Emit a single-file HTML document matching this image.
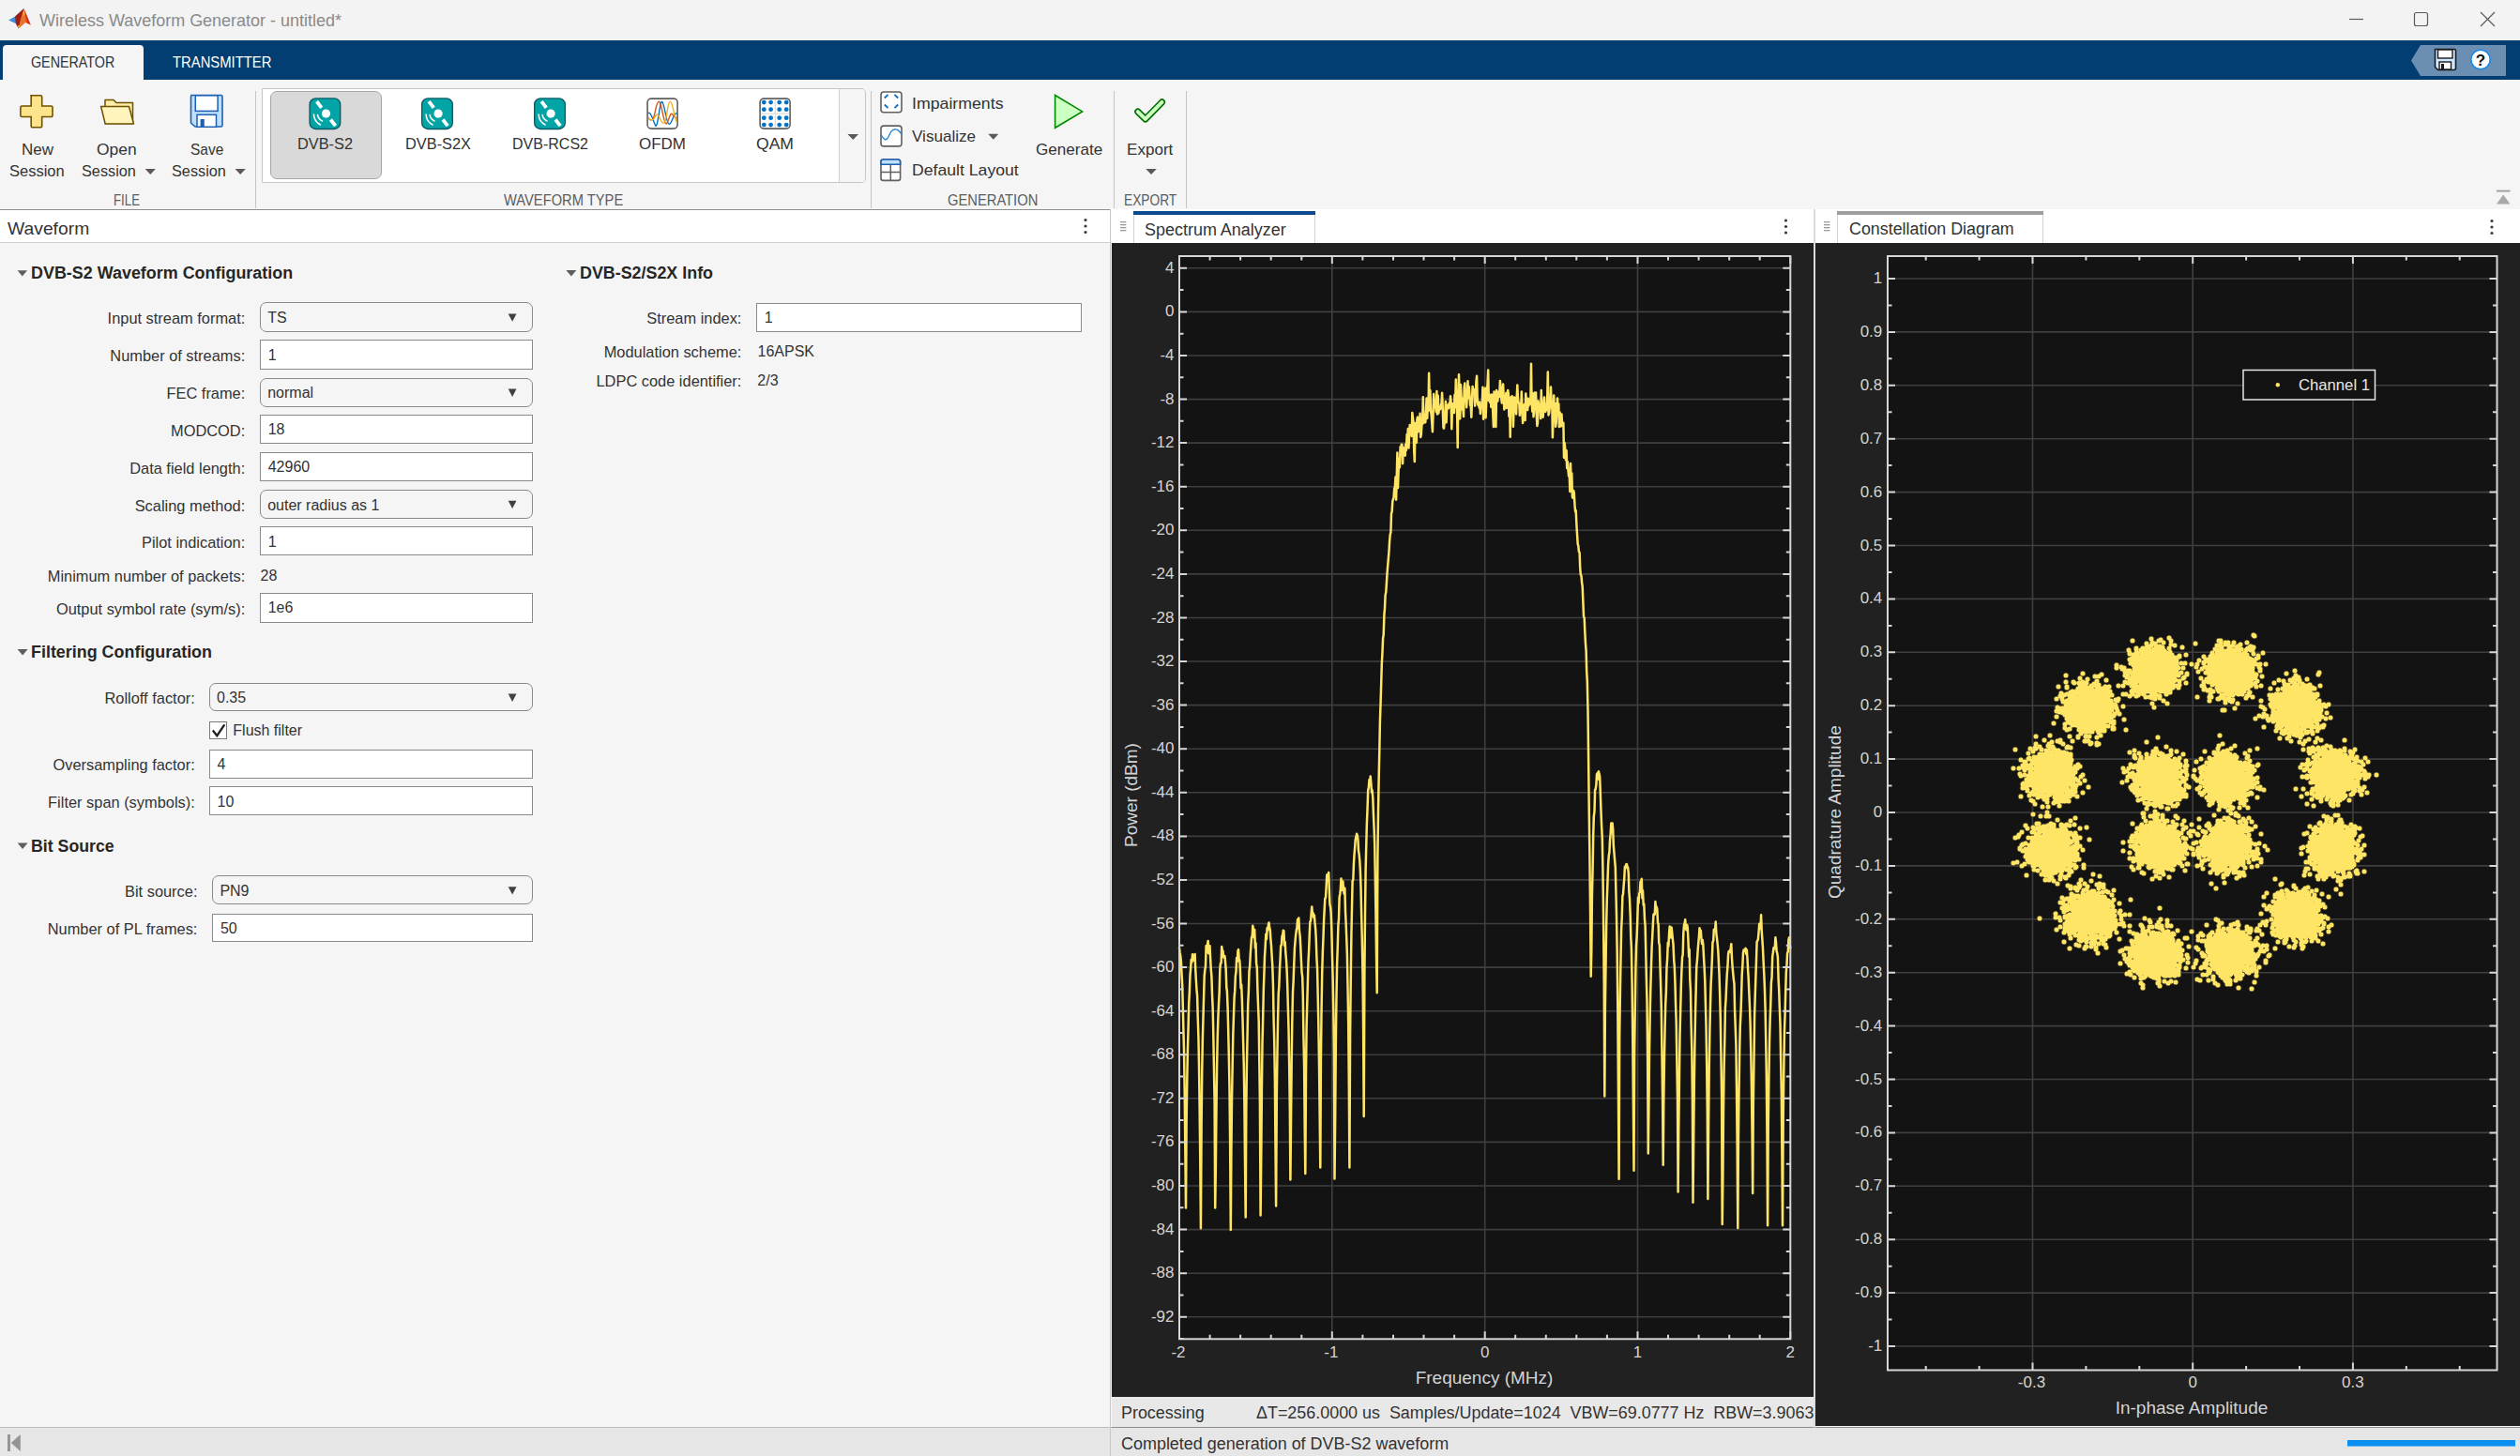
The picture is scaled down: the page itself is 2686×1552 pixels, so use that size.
<!DOCTYPE html><html><head><meta charset="utf-8"><style>
html,body{margin:0;padding:0}
body{width:2686px;height:1552px;overflow:hidden;position:relative;background:#f5f5f5;font-family:"Liberation Sans",sans-serif}
.t{position:absolute;white-space:pre;line-height:normal}
svg{position:absolute;left:0;top:0;overflow:visible}
</style></head><body>
<div style="position:absolute;left:0.0px;top:0.0px;width:2686.0px;height:43.0px;background:#f3f3f3"></div>
<svg font-family="Liberation Sans" width="40" height="40">
<path d="M9.1 21.4 L16.2 17.6 L23.6 10.8 L25.3 9.1 L20 20 L16.8 25 Z" fill="#3b8fdc"/>
<path d="M16.2 17.6 L23.6 10.8 L25.3 9.1 L24 20 L19.8 30.5 L16.8 25 Z" fill="#9e1f10"/>
<path d="M25.3 9.1 L32.7 26.6 L27.2 23.9 L19.8 30.5 L21.5 22 Z" fill="#e8742c"/>
<path d="M25.3 9.1 L28 15 L32.7 26.6 L28.5 24.5 Z" fill="#d8361b"/>
<path d="M25.3 10.5 L26.4 14 L25.6 17.5 L24.8 14 Z" fill="#f2d040"/>
<path d="M18.8 27.5 L21.5 27 L19.8 30.3 Z" fill="#f2c030"/>
</svg>
<div class="t" style="left:42.0px;top:10.6px;font-size:19px;color:#8a8a8a;font-weight:normal;transform:scaleX(0.9461);transform-origin:0 0;">Wireless Waveform Generator - untitled*</div>
<svg font-family="Liberation Sans" width="2686" height="43">
<line x1="2504" y1="20.5" x2="2519" y2="20.5" stroke="#5a5a5a" stroke-width="1.2"/>
<rect x="2573.5" y="13.5" width="14" height="14" rx="2" fill="none" stroke="#5a5a5a" stroke-width="1.2"/>
<path d="M2644 13 L2659 28 M2659 13 L2644 28" stroke="#5a5a5a" stroke-width="1.2"/>
</svg>
<div style="position:absolute;left:0.0px;top:43.0px;width:2686.0px;height:42.0px;background:#023e71"></div>
<div style="position:absolute;left:3.0px;top:48.0px;width:150.0px;height:37.0px;background:#f5f5f5;border-radius:4px 4px 0 0"></div>
<div class="t" style="left:32.8px;top:58.3px;font-size:16px;color:#333;font-weight:normal;transform:scaleX(0.8932);transform-origin:0 0;">GENERATOR</div>
<div class="t" style="left:184.0px;top:58.3px;font-size:16px;color:#fff;font-weight:normal;transform:scaleX(0.9264);transform-origin:0 0;">TRANSMITTER</div>
<svg font-family="Liberation Sans" width="2686" height="90">
<path d="M2570 64.5 L2580 48 L2671 48 L2671 81 L2580 81 Z" fill="#6b8fb2"/>
<path d="M2595.5 52.5 h20.5 a1.5 1.5 0 0 1 1.5 1.5 v19 a1.5 1.5 0 0 1 -1.5 1.5 h-17.5 l-3 -3 Z" fill="#cfe8ff" stroke="#1a1a1a" stroke-width="1.6"/>
<rect x="2598.5" y="53" width="15.5" height="9" fill="#fff" stroke="#1a1a1a" stroke-width="1.4"/>
<rect x="2600" y="66" width="12.5" height="8" fill="#fff" stroke="#1a1a1a" stroke-width="1.4"/>
<rect x="2602" y="68" width="3" height="6" fill="#1a1a1a"/>
<circle cx="2644" cy="63.5" r="10.2" fill="#fff" stroke="#1e88e5" stroke-width="1.6"/>
<text x="2644" y="70" text-anchor="middle" font-family="Liberation Sans" font-weight="bold" font-size="17" fill="#111">?</text>
</svg>
<div style="position:absolute;left:0.0px;top:85.0px;width:2686.0px;height:138.0px;background:#f5f5f5"></div>
<div style="position:absolute;left:0.0px;top:223.0px;width:2686.0px;height:1.2px;background:#8f8f8f"></div>
<div style="position:absolute;left:272.2px;top:97.0px;width:1.3px;height:125.0px;background:#c4c4c4"></div>
<div style="position:absolute;left:928.1px;top:97.0px;width:1.3px;height:125.0px;background:#c4c4c4"></div>
<div style="position:absolute;left:1187.0px;top:97.0px;width:1.3px;height:125.0px;background:#c4c4c4"></div>
<div style="position:absolute;left:1264.0px;top:97.0px;width:1.3px;height:125.0px;background:#c4c4c4"></div>
<div class="t" style="left:121.0px;top:204.9px;font-size:16px;color:#5c5c5c;font-weight:normal;transform:scaleX(0.8287);transform-origin:0 0;">FILE</div>
<div class="t" style="left:536.7px;top:204.9px;font-size:16px;color:#5c5c5c;font-weight:normal;transform:scaleX(0.9192);transform-origin:0 0;">WAVEFORM TYPE</div>
<div class="t" style="left:1009.7px;top:204.9px;font-size:16px;color:#5c5c5c;font-weight:normal;transform:scaleX(0.9206);transform-origin:0 0;">GENERATION</div>
<div class="t" style="left:1197.8px;top:204.9px;font-size:16px;color:#5c5c5c;font-weight:normal;transform:scaleX(0.8580);transform-origin:0 0;">EXPORT</div>
<div class="t" style="left:22.6px;top:149.6px;font-size:17px;color:#333333;font-weight:normal;transform:scaleX(0.9998);transform-origin:0 0;">New</div>
<div class="t" style="left:9.7px;top:173.2px;font-size:17px;color:#333333;font-weight:normal;transform:scaleX(0.9706);transform-origin:0 0;">Session</div>
<div class="t" style="left:103.2px;top:149.6px;font-size:17px;color:#333333;font-weight:normal;transform:scaleX(1.0268);transform-origin:0 0;">Open</div>
<div class="t" style="left:86.6px;top:173.2px;font-size:17px;color:#333333;font-weight:normal;transform:scaleX(0.9574);transform-origin:0 0;">Session</div>
<div class="t" style="left:202.9px;top:149.6px;font-size:17px;color:#333333;font-weight:normal;transform:scaleX(0.9110);transform-origin:0 0;">Save</div>
<div class="t" style="left:182.5px;top:173.2px;font-size:17px;color:#333333;font-weight:normal;transform:scaleX(0.9574);transform-origin:0 0;">Session</div>
<div style="position:absolute;left:278.6px;top:94.4px;width:644.4px;height:101.0px;background:#fff;border:1px solid #c6c6c6;border-radius:0 5px 5px 0;box-sizing:border-box"></div>
<div style="position:absolute;left:894.4px;top:95.4px;width:27.6px;height:99.0px;background:#f5f5f5;border-left:1px solid #d0d0d0;border-radius:0 4px 4px 0;box-sizing:border-box"></div>
<div style="position:absolute;left:287.5px;top:97.2px;width:119.0px;height:94.0px;background:#d9d9d9;border:1px solid #a8a8a8;border-radius:7px;box-sizing:border-box"></div>
<div class="t" style="left:317.0px;top:143.6px;font-size:17px;color:#333333;font-weight:normal;transform:scaleX(0.9608);transform-origin:0 0;">DVB-S2</div>
<div class="t" style="left:432.0px;top:143.6px;font-size:17px;color:#333333;font-weight:normal;transform:scaleX(0.9622);transform-origin:0 0;">DVB-S2X</div>
<div class="t" style="left:546.0px;top:143.6px;font-size:17px;color:#333333;font-weight:normal;transform:scaleX(0.9423);transform-origin:0 0;">DVB-RCS2</div>
<div class="t" style="left:681.0px;top:143.6px;font-size:17px;color:#333333;font-weight:normal;transform:scaleX(0.9991);transform-origin:0 0;">OFDM</div>
<div class="t" style="left:806.0px;top:143.6px;font-size:17px;color:#333333;font-weight:normal;transform:scaleX(1.0330);transform-origin:0 0;">QAM</div>
<div class="t" style="left:971.9px;top:100.7px;font-size:17px;color:#333333;font-weight:normal;transform:scaleX(1.0426);transform-origin:0 0;">Impairments</div>
<div class="t" style="left:972.2px;top:136.3px;font-size:17px;color:#333333;font-weight:normal;transform:scaleX(1.0056);transform-origin:0 0;">Visualize</div>
<div class="t" style="left:971.9px;top:172.2px;font-size:17px;color:#333333;font-weight:normal;transform:scaleX(1.0372);transform-origin:0 0;">Default Layout</div>
<div class="t" style="left:1103.7px;top:149.7px;font-size:17px;color:#333333;font-weight:normal;transform:scaleX(1.0046);transform-origin:0 0;">Generate</div>
<div class="t" style="left:1201.3px;top:149.7px;font-size:17px;color:#333333;font-weight:normal;transform:scaleX(1.0035);transform-origin:0 0;">Export</div>
<svg font-family="Liberation Sans" width="2686" height="223"><path d="M33.5 101.7 h11 a1.5 1.5 0 0 1 1.5 1.5 v9.8 h9.8 a1.5 1.5 0 0 1 1.5 1.5 v8.5 a1.5 1.5 0 0 1 -1.5 1.5 h-9.8 v9.8 a1.5 1.5 0 0 1 -1.5 1.5 h-8.5 a1.5 1.5 0 0 1 -1.5 -1.5 v-9.8 h-9.8 a1.5 1.5 0 0 1 -1.5 -1.5 v-8.5 a1.5 1.5 0 0 1 1.5 -1.5 h9.8 v-9.8 a1.5 1.5 0 0 1 1.5 -1.5 Z" fill="#fde48a" stroke="#6e5200" stroke-width="1.6" transform="translate(-1.3,0)"/><path d="M112 131.5 V106.5 h9 l3 3 h17.5 v22 Z" fill="#fdeeaa" stroke="#6e5200" stroke-width="1.5" stroke-linejoin="round"/><path d="M107.6 113.5 H137.5 L142.5 132 H112.2 Z" fill="#fff4bb" stroke="#6e5200" stroke-width="1.5" stroke-linejoin="round"/><path d="M204 101.5 H235.5 a1.5 1.5 0 0 1 1.5 1.5 V133.5 a1.5 1.5 0 0 1 -1.5 1.5 H208 L203.5 131 V103 Z" fill="#bfe0fb" stroke="#1c5fb5" stroke-width="1.6"/><rect x="208.3" y="101.8" width="23.8" height="16.6" fill="#fff" stroke="#1c5fb5" stroke-width="1.5"/><rect x="210" y="122.3" width="20.5" height="13" fill="#fff" stroke="#1c5fb5" stroke-width="1.5"/><rect x="213.6" y="127" width="4.2" height="8" fill="#1c5fb5"/><path d="M154.6 180 h11.3 l-5.65 6 Z" fill="#5a5a5a"/><path d="M250.5 180 h11.3 l-5.65 6 Z" fill="#5a5a5a"/><path d="M903.5 143 h11.5 l-5.75 6 Z" fill="#5a5a5a"/><path d="M1053.3 142.8 h11 l-5.5 6 Z" fill="#5a5a5a"/><path d="M1221.3 180 h11.5 l-5.75 6 Z" fill="#5a5a5a"/><g transform="translate(329.4,104.2)">
<rect x="0.7" y="0.7" width="32.6" height="32.6" rx="6.5" fill="#02a4a6" stroke="#0b5c66" stroke-width="1.4"/>
<g transform="rotate(-37.5 18.1 16.9)"><rect x="16.2" y="0.6" width="3.8" height="8.4" fill="#fff"/><rect x="16.2" y="25.0" width="3.8" height="8.4" fill="#fff"/></g>
<circle cx="18.1" cy="16.9" r="4.6" fill="#fff"/>
<path d="M5.1 17.8 A13 13 0 0 0 12.1 28.8" fill="none" stroke="#fff" stroke-width="1.5" stroke-linecap="round"/>
<path d="M9.1 18.3 A9 9 0 0 0 14.1 24.8" fill="none" stroke="#fff" stroke-width="1.5" stroke-linecap="round"/>
</g><g transform="translate(449,104.2)">
<rect x="0.7" y="0.7" width="32.6" height="32.6" rx="6.5" fill="#02a4a6" stroke="#0b5c66" stroke-width="1.4"/>
<g transform="rotate(-37.5 18.1 16.9)"><rect x="16.2" y="0.6" width="3.8" height="8.4" fill="#fff"/><rect x="16.2" y="25.0" width="3.8" height="8.4" fill="#fff"/></g>
<circle cx="18.1" cy="16.9" r="4.6" fill="#fff"/>
<path d="M5.1 17.8 A13 13 0 0 0 12.1 28.8" fill="none" stroke="#fff" stroke-width="1.5" stroke-linecap="round"/>
<path d="M9.1 18.3 A9 9 0 0 0 14.1 24.8" fill="none" stroke="#fff" stroke-width="1.5" stroke-linecap="round"/>
</g><g transform="translate(569,104.2)">
<rect x="0.7" y="0.7" width="32.6" height="32.6" rx="6.5" fill="#02a4a6" stroke="#0b5c66" stroke-width="1.4"/>
<g transform="rotate(-37.5 18.1 16.9)"><rect x="16.2" y="0.6" width="3.8" height="8.4" fill="#fff"/><rect x="16.2" y="25.0" width="3.8" height="8.4" fill="#fff"/></g>
<circle cx="18.1" cy="16.9" r="4.6" fill="#fff"/>
<path d="M5.1 17.8 A13 13 0 0 0 12.1 28.8" fill="none" stroke="#fff" stroke-width="1.5" stroke-linecap="round"/>
<path d="M9.1 18.3 A9 9 0 0 0 14.1 24.8" fill="none" stroke="#fff" stroke-width="1.5" stroke-linecap="round"/>
</g><g transform="translate(689.3,104.3)">
<rect x="0.8" y="0.8" width="32" height="32" rx="4" fill="#fff" stroke="#5f5f5f" stroke-width="1.6"/>
<clipPath id="ofc"><rect x="1.5" y="1.5" width="30.6" height="30.6"/></clipPath>
<g clip-path="url(#ofc)" fill="none" stroke-width="1.4">
<path d="M1 17 C4 13,6 22,9 29 C12 36,14 -2,17 5 C20 12,21 28,24 28 C27 28,28 16,33 16" stroke="#0072bd"/>
<path d="M1 20 C3 24,5 25,7 22 C9 18,10 4,13 4 C16 4,17 22,20 27 C22 31,24 18,26 17 C28 16,29 22,33 22" stroke="#d95319"/>
<path d="M1 21 C3 23,5 25,8 22 C10 18,11 16,13 20 C16 26,17 28,19 26 C22 22,22 4,25 4 C28 4,29 22,33 28" stroke="#edb120"/>
</g></g><g transform="translate(809.3,104.3)"><rect x="0.8" y="0.8" width="32" height="32" rx="4" fill="#fff" stroke="#5f5f5f" stroke-width="1.6"/><path d="M17 1.5 V32 M1.5 16.8 H32" stroke="#dcdcdc" stroke-width="1.2"/><circle cx="5" cy="4.8" r="2.4" fill="#0072c6"/><circle cx="5" cy="12.4" r="2.4" fill="#0072c6"/><circle cx="5" cy="21.4" r="2.4" fill="#0072c6"/><circle cx="5" cy="28.8" r="2.4" fill="#0072c6"/><circle cx="12.3" cy="4.8" r="2.4" fill="#0072c6"/><circle cx="12.3" cy="12.4" r="2.4" fill="#0072c6"/><circle cx="12.3" cy="21.4" r="2.4" fill="#0072c6"/><circle cx="12.3" cy="28.8" r="2.4" fill="#0072c6"/><circle cx="21.4" cy="4.8" r="2.4" fill="#0072c6"/><circle cx="21.4" cy="12.4" r="2.4" fill="#0072c6"/><circle cx="21.4" cy="21.4" r="2.4" fill="#0072c6"/><circle cx="21.4" cy="28.8" r="2.4" fill="#0072c6"/><circle cx="28.9" cy="4.8" r="2.4" fill="#0072c6"/><circle cx="28.9" cy="12.4" r="2.4" fill="#0072c6"/><circle cx="28.9" cy="21.4" r="2.4" fill="#0072c6"/><circle cx="28.9" cy="28.8" r="2.4" fill="#0072c6"/></g><g transform="translate(938.2,97.2)">
<rect x="0.8" y="0.8" width="22" height="21.8" rx="3" fill="#fff" stroke="#606060" stroke-width="1.6"/>
<path d="M4.6 7.3 L8.3 3.6 M15.3 3.6 L19 7.3 M4.6 14.3 L8.3 18 M15.3 18 L19 14.3" stroke="#0a6fc2" stroke-width="1.8" stroke-linecap="butt"/>
</g>
<g transform="translate(938.2,133.3)">
<rect x="0.8" y="0.8" width="22" height="21.8" rx="3" fill="#fff" stroke="#606060" stroke-width="1.6"/>
<path d="M1 10.5 C4 16,6 17,8.5 13 C11 8,12 4.5,16 4.5 C19 4.5,21 7,22.5 9.5" fill="none" stroke="#1a7fd4" stroke-width="1.3"/>
</g>
<g transform="translate(938.2,169.2)">
<rect x="0.8" y="0.8" width="20.6" height="22.4" rx="2.5" fill="#fff" stroke="#606060" stroke-width="1.6"/>
<path d="M0.8 6 V3.3 a2.5 2.5 0 0 1 2.5 -2.5 H18.9 a2.5 2.5 0 0 1 2.5 2.5 V6 Z" fill="#bfe0fb" stroke="#1c5fb5" stroke-width="1.6"/>
<path d="M11.1 6 V23 M0.8 14.2 H21.4" stroke="#606060" stroke-width="1.5"/>
</g>
<path d="M1124.6 101.5 L1153.6 118.9 L1124.6 136.3 Z" fill="#ccffc2" stroke="#008a00" stroke-width="1.6" stroke-linejoin="miter"/><path d="M1212.8 119.1 L1220.8 126.9 L1238.5 108.9" fill="none" stroke="#006e00" stroke-width="7.2" stroke-linecap="round" stroke-linejoin="round"/><path d="M1212.8 119.1 L1220.8 126.9 L1238.5 108.9" fill="none" stroke="#ccffc2" stroke-width="4" stroke-linecap="round" stroke-linejoin="round"/><rect x="2661" y="202.7" width="14.5" height="1.8" fill="#9a9a9a"/><path d="M2661 217.6 L2668.2 207.5 L2675.5 217.6 Z" fill="#a8a8a8"/></svg>
<div style="position:absolute;left:0.0px;top:224.2px;width:1183.0px;height:34.0px;background:#fff"></div>
<div style="position:absolute;left:0.0px;top:258.0px;width:1183.0px;height:1.0px;background:#cfcfcf"></div>
<div class="t" style="left:7.6px;top:233.0px;font-size:19px;color:#333;font-weight:normal;transform:scaleX(1.0156);transform-origin:0 0;">Waveform</div>
<svg font-family="Liberation Sans" width="2686" height="300"><circle cx="1157" cy="234.5" r="1.6" fill="#3a3a3a"/><circle cx="1157" cy="241.0" r="1.6" fill="#3a3a3a"/><circle cx="1157" cy="247.5" r="1.6" fill="#3a3a3a"/></svg>
<div style="position:absolute;left:1182.6px;top:223.3px;width:1.3px;height:1298.0px;background:#c8c8c8"></div>
<svg font-family="Liberation Sans" width="1200" height="1100"><path d="M18.6 288.3 H29 L23.8 294.5 Z" fill="#5e5e5e"/><path d="M18.6 692 H29.6 L24.1 698.5 Z" fill="#5e5e5e"/><path d="M18.6 898.5 H29.6 L24.1 905 Z" fill="#5e5e5e"/><path d="M603.4 288 H614.4 L608.9 294.5 Z" fill="#5e5e5e"/></svg>
<div class="t" style="left:33.3px;top:280.7px;font-size:18px;color:#262626;font-weight:bold;transform:scaleX(0.9956);transform-origin:0 0;">DVB-S2 Waveform Configuration</div>
<div class="t" style="left:33.0px;top:685.0px;font-size:18px;color:#262626;font-weight:bold;transform:scaleX(0.9950);transform-origin:0 0;">Filtering Configuration</div>
<div class="t" style="left:33.0px;top:891.9px;font-size:18px;color:#262626;font-weight:bold;transform:scaleX(0.9854);transform-origin:0 0;">Bit Source</div>
<div class="t" style="left:618.0px;top:281.2px;font-size:18px;color:#262626;font-weight:bold;transform:scaleX(0.9929);transform-origin:0 0;">DVB-S2/S2X Info</div>
<div class="t" style="left:114.6px;top:330.2px;font-size:16.4px;color:#333;font-weight:normal;">Input stream format:</div>
<div style="position:absolute;left:277.2px;top:322.4px;width:290.6px;height:31.2px;background:#f5f5f5;border:1px solid #8a8a8a;border-radius:7px;box-sizing:border-box"></div>
<svg font-family="Liberation Sans" width="2686" height="1100"><path d="M541.6999999999999 334.4 h8.8 l-4.4 8.4 Z" fill="#404040"/></svg><div class="t" style="left:285.2px;top:330.2px;font-size:16px;color:#333;font-weight:normal;">TS</div>
<div class="t" style="left:117.3px;top:370.1px;font-size:16.4px;color:#333;font-weight:normal;">Number of streams:</div>
<div style="position:absolute;left:277.2px;top:362.3px;width:290.6px;height:31.3px;background:#fff;border:1px solid #8a8a8a;box-sizing:border-box"></div>
<div class="t" style="left:285.7px;top:369.8px;font-size:16px;color:#333;font-weight:normal;">1</div>
<div class="t" style="left:177.5px;top:410.4px;font-size:16.4px;color:#333;font-weight:normal;">FEC frame:</div>
<div style="position:absolute;left:277.2px;top:402.6px;width:290.6px;height:31.0px;background:#f5f5f5;border:1px solid #8a8a8a;border-radius:7px;box-sizing:border-box"></div>
<svg font-family="Liberation Sans" width="2686" height="1100"><path d="M541.6999999999999 414.6 h8.8 l-4.4 8.4 Z" fill="#404040"/></svg><div class="t" style="left:285.2px;top:410.4px;font-size:16px;color:#333;font-weight:normal;">normal</div>
<div class="t" style="left:182.0px;top:449.5px;font-size:16.4px;color:#333;font-weight:normal;">MODCOD:</div>
<div style="position:absolute;left:277.2px;top:441.7px;width:290.6px;height:31.6px;background:#fff;border:1px solid #8a8a8a;box-sizing:border-box"></div>
<div class="t" style="left:285.7px;top:449.2px;font-size:16px;color:#333;font-weight:normal;">18</div>
<div class="t" style="left:138.2px;top:489.5px;font-size:16.4px;color:#333;font-weight:normal;">Data field length:</div>
<div style="position:absolute;left:277.2px;top:481.7px;width:290.6px;height:30.9px;background:#fff;border:1px solid #8a8a8a;box-sizing:border-box"></div>
<div class="t" style="left:285.7px;top:489.2px;font-size:16px;color:#333;font-weight:normal;">42960</div>
<div class="t" style="left:143.7px;top:529.5px;font-size:16.4px;color:#333;font-weight:normal;">Scaling method:</div>
<div style="position:absolute;left:277.2px;top:521.7px;width:290.6px;height:30.9px;background:#f5f5f5;border:1px solid #8a8a8a;border-radius:7px;box-sizing:border-box"></div>
<svg font-family="Liberation Sans" width="2686" height="1100"><path d="M541.6999999999999 533.7 h8.8 l-4.4 8.4 Z" fill="#404040"/></svg><div class="t" style="left:285.2px;top:529.5px;font-size:16px;color:#333;font-weight:normal;">outer radius as 1</div>
<div class="t" style="left:151.0px;top:569.2px;font-size:16.4px;color:#333;font-weight:normal;">Pilot indication:</div>
<div style="position:absolute;left:277.2px;top:561.4px;width:290.6px;height:30.9px;background:#fff;border:1px solid #8a8a8a;box-sizing:border-box"></div>
<div class="t" style="left:285.7px;top:568.9px;font-size:16px;color:#333;font-weight:normal;">1</div>
<div class="t" style="left:59.9px;top:639.5px;font-size:16.4px;color:#333;font-weight:normal;">Output symbol rate (sym/s):</div>
<div style="position:absolute;left:277.2px;top:631.7px;width:290.6px;height:32.0px;background:#fff;border:1px solid #8a8a8a;box-sizing:border-box"></div>
<div class="t" style="left:285.7px;top:639.2px;font-size:16px;color:#333;font-weight:normal;">1e6</div>
<div class="t" style="left:50.8px;top:604.5px;font-size:16.4px;color:#333;font-weight:normal;">Minimum number of packets:</div>
<div class="t" style="left:277.6px;top:604.8px;font-size:16px;color:#333;font-weight:normal;">28</div>
<div class="t" style="left:111.5px;top:735.4px;font-size:16.4px;color:#333;font-weight:normal;">Rolloff factor:</div>
<div style="position:absolute;left:223.0px;top:727.6px;width:344.8px;height:30.6px;background:#f5f5f5;border:1px solid #8a8a8a;border-radius:7px;box-sizing:border-box"></div>
<svg font-family="Liberation Sans" width="2686" height="1100"><path d="M541.6999999999999 739.6 h8.8 l-4.4 8.4 Z" fill="#404040"/></svg><div class="t" style="left:231.0px;top:735.4px;font-size:16px;color:#333;font-weight:normal;">0.35</div>
<div style="position:absolute;left:223.0px;top:769.0px;width:19.3px;height:19.3px;background:#fff;border:1px solid #7a7a7a;box-sizing:border-box"></div>
<svg font-family="Liberation Sans" width="300" height="800"><path d="M226.8 778.5 L231.3 784.2 L239.3 772.3" fill="none" stroke="#1f1f1f" stroke-width="2.3"/></svg>
<div class="t" style="left:248.3px;top:770.1px;font-size:16px;color:#333;font-weight:normal;">Flush filter</div>
<div class="t" style="left:56.5px;top:806.4px;font-size:16.4px;color:#333;font-weight:normal;">Oversampling factor:</div>
<div style="position:absolute;left:223.0px;top:798.6px;width:344.8px;height:31.0px;background:#fff;border:1px solid #8a8a8a;box-sizing:border-box"></div>
<div class="t" style="left:231.5px;top:806.1px;font-size:16px;color:#333;font-weight:normal;">4</div>
<div class="t" style="left:51.1px;top:846.1px;font-size:16.4px;color:#333;font-weight:normal;">Filter span (symbols):</div>
<div style="position:absolute;left:223.0px;top:838.3px;width:344.8px;height:31.0px;background:#fff;border:1px solid #8a8a8a;box-sizing:border-box"></div>
<div class="t" style="left:231.5px;top:845.8px;font-size:16px;color:#333;font-weight:normal;">10</div>
<div class="t" style="left:133.0px;top:941.0px;font-size:16.4px;color:#333;font-weight:normal;">Bit source:</div>
<div style="position:absolute;left:226.4px;top:933.2px;width:341.4px;height:31.0px;background:#f5f5f5;border:1px solid #8a8a8a;border-radius:7px;box-sizing:border-box"></div>
<svg font-family="Liberation Sans" width="2686" height="1100"><path d="M541.6999999999999 945.2 h8.8 l-4.4 8.4 Z" fill="#404040"/></svg><div class="t" style="left:234.4px;top:941.0px;font-size:16px;color:#333;font-weight:normal;">PN9</div>
<div class="t" style="left:50.7px;top:981.4px;font-size:16.4px;color:#333;font-weight:normal;">Number of PL frames:</div>
<div style="position:absolute;left:226.4px;top:973.6px;width:341.4px;height:30.9px;background:#fff;border:1px solid #8a8a8a;box-sizing:border-box"></div>
<div class="t" style="left:234.9px;top:981.1px;font-size:16px;color:#333;font-weight:normal;">50</div>
<div class="t" style="left:689.3px;top:330.3px;font-size:16.4px;color:#333;font-weight:normal;">Stream index:</div>
<div style="position:absolute;left:806.3px;top:322.5px;width:346.4px;height:31.0px;background:#fff;border:1px solid #8a8a8a;box-sizing:border-box"></div>
<div class="t" style="left:814.8px;top:330.0px;font-size:16px;color:#333;font-weight:normal;">1</div>
<div class="t" style="left:643.7px;top:365.5px;font-size:16.4px;color:#333;font-weight:normal;">Modulation scheme:</div>
<div class="t" style="left:807.5px;top:365.8px;font-size:16px;color:#333;font-weight:normal;">16APSK</div>
<div class="t" style="left:635.5px;top:396.7px;font-size:16.4px;color:#333;font-weight:normal;">LDPC code identifier:</div>
<div class="t" style="left:807.3px;top:397.0px;font-size:16px;color:#333;font-weight:normal;">2/3</div>
<div style="position:absolute;left:0.0px;top:1521.0px;width:2686.0px;height:31.0px;background:#e6e6e6"></div>
<div style="position:absolute;left:0.0px;top:1520.5px;width:2686.0px;height:1.2px;background:#bdbdbd"></div>
<svg font-family="Liberation Sans" width="2686" height="1552"><rect x="8" y="1529" width="3" height="18" fill="#959595"/><path d="M21.8 1529 V1547 L11.8 1538 Z" fill="#959595"/><rect x="2502" y="1535" width="179" height="6.6" fill="#0a8ef0"/></svg>
<div style="position:absolute;left:1182.6px;top:1521.0px;width:1.2px;height:31.0px;background:#c8c8c8"></div>
<div class="t" style="left:1195.4px;top:1529.4px;font-size:18px;color:#333;font-weight:normal;transform:scaleX(0.9973);transform-origin:0 0;">Completed generation of DVB-S2 waveform</div>
<div style="position:absolute;left:1184.0px;top:223.3px;width:749.0px;height:35.3px;background:#fff"></div>
<div style="position:absolute;left:1207.5px;top:224.8px;width:194.0px;height:33.8px;background:#fff;border-left:1px solid #d2d2d2;border-right:1px solid #d2d2d2;box-sizing:border-box"></div>
<div style="position:absolute;left:1207.5px;top:224.8px;width:194.0px;height:4.3px;background:#0b4a8e"></div>
<div class="t" style="left:1220.3px;top:234.9px;font-size:18px;color:#333;font-weight:normal;transform:scaleX(0.9976);transform-origin:0 0;">Spectrum Analyzer</div>
<svg font-family="Liberation Sans" width="2686" height="300"><rect x="1194" y="236" width="6.4" height="1.3" fill="#9a9a9a"/><rect x="1194" y="239" width="6.4" height="1.3" fill="#9a9a9a"/><rect x="1194" y="242" width="6.4" height="1.3" fill="#9a9a9a"/><rect x="1194" y="245" width="6.4" height="1.3" fill="#9a9a9a"/><rect x="1946.5" y="236" width="6.4" height="1.3" fill="#9a9a9a"/><rect x="1946.5" y="239" width="6.4" height="1.3" fill="#9a9a9a"/><rect x="1946.5" y="242" width="6.4" height="1.3" fill="#9a9a9a"/><rect x="1946.5" y="245" width="6.4" height="1.3" fill="#9a9a9a"/></svg>
<div style="position:absolute;left:1184.5px;top:258.5px;width:748.5px;height:1230.5px;background:#212121"></div>
<div style="position:absolute;left:1184.5px;top:1489.0px;width:748.5px;height:32.0px;background:#e8e8e8;box-sizing:border-box"></div>
<div style="position:absolute;left:1184.5px;top:1520.5px;width:748.5px;height:1.3px;background:#8e8e8e"></div>
<div class="t" style="left:1195.4px;top:1496.2px;font-size:18px;color:#333;font-weight:normal;transform:scaleX(0.9951);transform-origin:0 0;">Processing</div>
<div class="t" style="left:1338.7px;top:1496.2px;font-size:18px;color:#333;font-weight:normal;transform:scaleX(0.9949);transform-origin:0 0;">ΔT=256.0000 us  Samples/Update=1024  VBW=69.0777 Hz  RBW=3.9063</div>
<div style="position:absolute;left:1933.0px;top:223.3px;width:2.2px;height:1298.0px;background:#dcdcdc"></div>
<svg font-family="Liberation Sans" width="2686" height="1552"><rect x="1257.0" y="273.0" width="651.3" height="1154.3" fill="#131313"/><path d="M1419.8 273.0 V1427.3 M1582.7 273.0 V1427.3 M1745.5 273.0 V1427.3 M1257.0 285.8 H1908.3 M1257.0 332.4 H1908.3 M1257.0 379.0 H1908.3 M1257.0 425.6 H1908.3 M1257.0 472.1 H1908.3 M1257.0 518.7 H1908.3 M1257.0 565.3 H1908.3 M1257.0 611.9 H1908.3 M1257.0 658.5 H1908.3 M1257.0 705.0 H1908.3 M1257.0 751.6 H1908.3 M1257.0 798.2 H1908.3 M1257.0 844.8 H1908.3 M1257.0 891.4 H1908.3 M1257.0 937.9 H1908.3 M1257.0 984.5 H1908.3 M1257.0 1031.1 H1908.3 M1257.0 1077.7 H1908.3 M1257.0 1124.3 H1908.3 M1257.0 1170.8 H1908.3 M1257.0 1217.4 H1908.3 M1257.0 1264.0 H1908.3 M1257.0 1310.6 H1908.3 M1257.0 1357.2 H1908.3 M1257.0 1403.7 H1908.3" stroke="#3f3f3f" stroke-width="1.6" fill="none"/><path d="M1257.0 1009.8 1257.6 1015.5 1258.3 1019.1 1258.9 1024.8 1259.5 1038.1 1260.2 1049.8 1260.8 1072.9 1261.5 1101.6 1262.1 1124.0 1262.7 1165.6 1263.4 1230.0 1264.0 1287.5 1264.6 1197.7 1265.3 1150.1 1265.9 1120.1 1266.5 1098.6 1267.2 1069.7 1267.8 1058.6 1268.5 1039.4 1269.1 1032.8 1269.7 1022.9 1270.4 1025.5 1271.0 1017.3 1271.6 1023.4 1272.3 1023.3 1272.9 1023.9 1273.6 1016.9 1274.2 1032.7 1274.8 1043.5 1275.5 1055.3 1276.1 1061.3 1276.7 1084.0 1277.4 1104.8 1278.0 1135.5 1278.6 1179.6 1279.3 1237.0 1279.9 1309.3 1280.6 1200.2 1281.2 1144.7 1281.8 1109.6 1282.5 1083.6 1283.1 1062.6 1283.7 1040.0 1284.4 1033.5 1285.0 1029.7 1285.6 1008.3 1286.3 1014.6 1286.9 1007.8 1287.6 1002.9 1288.2 1016.3 1288.8 1013.0 1289.5 1008.2 1290.1 1021.1 1290.7 1032.6 1291.4 1040.7 1292.0 1059.9 1292.7 1075.4 1293.3 1102.9 1293.9 1136.7 1294.6 1175.5 1295.2 1287.5 1295.8 1247.2 1296.5 1182.7 1297.1 1136.5 1297.7 1106.9 1298.4 1084.5 1299.0 1071.1 1299.7 1057.4 1300.3 1033.7 1300.9 1026.9 1301.6 1026.8 1302.2 1009.0 1302.8 1013.2 1303.5 1013.6 1304.1 1020.5 1304.7 1020.0 1305.4 1019.1 1306.0 1024.9 1306.7 1033.6 1307.3 1052.7 1307.9 1056.7 1308.6 1074.1 1309.2 1098.5 1309.8 1124.1 1310.5 1161.1 1311.1 1214.8 1311.8 1311.0 1312.4 1228.1 1313.0 1173.3 1313.7 1134.5 1314.3 1103.8 1314.9 1085.3 1315.6 1063.3 1316.2 1056.4 1316.8 1040.8 1317.5 1035.6 1318.1 1020.9 1318.8 1025.0 1319.4 1013.6 1320.0 1012.1 1320.7 1022.5 1321.3 1023.7 1321.9 1034.9 1322.6 1053.3 1323.2 1049.5 1323.8 1064.6 1324.5 1086.3 1325.1 1109.9 1325.8 1136.7 1326.4 1177.0 1327.0 1238.1 1327.7 1297.6 1328.3 1186.1 1328.9 1137.0 1329.6 1102.2 1330.2 1070.6 1330.9 1056.4 1331.5 1034.7 1332.1 1030.6 1332.8 1016.6 1333.4 1008.3 1334.0 999.3 1334.7 997.7 1335.3 986.7 1335.9 990.7 1336.6 999.4 1337.2 990.9 1337.9 1010.4 1338.5 1005.3 1339.1 1026.9 1339.8 1031.5 1340.4 1054.8 1341.0 1071.1 1341.7 1088.4 1342.3 1132.1 1342.9 1176.3 1343.6 1295.4 1344.2 1239.1 1344.9 1162.9 1345.5 1112.7 1346.1 1088.6 1346.8 1055.7 1347.4 1038.6 1348.0 1019.6 1348.7 1008.3 1349.3 995.8 1350.0 1000.9 1350.6 989.2 1351.2 991.7 1351.9 986.1 1352.5 983.5 1353.1 988.0 1353.8 991.5 1354.4 1001.0 1355.0 1008.2 1355.7 1020.3 1356.3 1029.9 1357.0 1051.5 1357.6 1087.2 1358.2 1108.1 1358.9 1151.9 1359.5 1223.4 1360.1 1285.6 1360.8 1171.1 1361.4 1125.8 1362.0 1090.3 1362.7 1059.6 1363.3 1052.1 1364.0 1033.1 1364.6 1021.5 1365.2 1008.3 1365.9 1007.3 1366.5 997.8 1367.1 997.0 1367.8 991.7 1368.4 992.4 1369.1 1007.7 1369.7 1004.1 1370.3 1015.2 1371.0 1023.4 1371.6 1034.0 1372.2 1049.5 1372.9 1075.0 1373.5 1096.4 1374.1 1131.3 1374.8 1180.1 1375.4 1257.6 1376.1 1188.0 1376.7 1131.7 1377.3 1089.6 1378.0 1057.3 1378.6 1046.8 1379.2 1029.8 1379.9 1011.0 1380.5 1003.8 1381.1 996.9 1381.8 991.5 1382.4 988.2 1383.1 980.0 1383.7 989.6 1384.3 978.5 1385.0 992.8 1385.6 997.2 1386.2 1007.6 1386.9 1023.5 1387.5 1035.8 1388.2 1041.2 1388.8 1061.5 1389.4 1103.0 1390.1 1137.3 1390.7 1202.4 1391.3 1251.0 1392.0 1144.9 1392.6 1094.7 1393.2 1072.1 1393.9 1046.3 1394.5 1025.5 1395.2 1011.5 1395.8 995.0 1396.4 982.4 1397.1 981.7 1397.7 972.8 1398.3 966.4 1399.0 975.5 1399.6 973.3 1400.2 977.9 1400.9 975.5 1401.5 983.4 1402.2 990.3 1402.8 1001.8 1403.4 1021.0 1404.1 1033.8 1404.7 1061.6 1405.3 1090.3 1406.0 1134.7 1406.6 1183.8 1407.3 1244.5 1407.9 1132.1 1408.5 1080.6 1409.2 1038.0 1409.8 1016.1 1410.4 1001.2 1411.1 981.1 1411.7 969.1 1412.3 957.5 1413.0 957.0 1413.6 946.2 1414.3 932.6 1414.9 938.7 1415.5 933.3 1416.2 929.9 1416.8 947.8 1417.4 963.7 1418.1 967.0 1418.7 973.4 1419.3 990.1 1420.0 1020.0 1420.6 1041.0 1421.3 1074.8 1421.9 1123.5 1422.5 1256.5 1423.2 1189.1 1423.8 1114.7 1424.4 1067.2 1425.1 1028.4 1425.7 1011.1 1426.4 986.2 1427.0 979.7 1427.6 956.6 1428.3 953.0 1428.9 947.1 1429.5 936.4 1430.2 948.7 1430.8 947.1 1431.4 939.5 1432.1 949.1 1432.7 952.9 1433.4 946.7 1434.0 971.1 1434.6 983.3 1435.3 1001.4 1435.9 1018.2 1436.5 1051.2 1437.2 1091.5 1437.8 1155.5 1438.4 1244.5 1439.1 1103.5 1439.7 1047.9 1440.4 997.0 1441.0 968.3 1441.6 939.0 1442.3 938.0 1442.9 921.6 1443.5 911.1 1444.2 902.3 1444.8 894.5 1445.5 891.9 1446.1 888.8 1446.7 890.2 1447.4 894.7 1448.0 907.1 1448.6 910.3 1449.3 917.7 1449.9 928.7 1450.5 945.6 1451.2 978.4 1451.8 1001.9 1452.5 1039.1 1453.1 1095.9 1453.7 1190.0 1454.4 1037.0 1455.0 975.5 1455.6 927.8 1456.3 899.2 1456.9 877.4 1457.5 862.6 1458.2 842.1 1458.8 839.8 1459.5 830.9 1460.1 836.0 1460.7 827.4 1461.4 835.5 1462.0 844.3 1462.6 842.3 1463.3 850.5 1463.9 867.1 1464.6 882.8 1465.2 899.5 1465.8 934.5 1466.5 979.8 1467.1 1024.3 1467.7 1058.3 1468.4 913.6 1469.0 865.5 1469.6 832.3 1470.3 800.5 1470.9 769.5 1471.6 748.1 1472.2 728.6 1472.8 708.1 1473.5 694.5 1474.1 680.1 1474.7 677.1 1475.4 655.0 1476.0 648.7 1476.6 634.4 1477.3 631.1 1477.9 621.4 1478.6 610.3 1479.2 602.8 1479.8 595.9 1480.5 587.7 1481.1 576.8 1481.7 570.0 1482.4 567.3 1483.0 547.2 1483.6 545.6 1484.3 534.3 1484.9 532.5 1485.6 529.2 1486.2 520.5 1486.8 519.4 1487.5 508.6 1488.1 532.6 1488.7 509.7 1489.4 482.4 1490.0 520.0 1490.7 500.1 1491.3 488.8 1491.9 498.3 1492.6 476.3 1493.2 484.4 1493.8 473.8 1494.5 474.0 1495.1 494.1 1495.7 477.1 1496.4 481.6 1497.0 483.3 1497.7 485.6 1498.3 473.4 1498.9 479.9 1499.6 463.0 1500.2 466.3 1500.8 457.0 1501.5 477.4 1502.1 462.9 1502.7 453.1 1503.4 455.7 1504.0 456.2 1504.7 465.0 1505.3 439.9 1505.9 444.9 1506.6 450.9 1507.2 480.5 1507.8 491.9 1508.5 450.9 1509.1 458.6 1509.8 471.8 1510.4 446.9 1511.0 444.6 1511.7 460.2 1512.3 452.0 1512.9 453.5 1513.6 440.8 1514.2 466.0 1514.8 463.4 1515.5 451.1 1516.1 452.0 1516.8 423.2 1517.4 450.8 1518.0 441.7 1518.7 448.0 1519.3 450.2 1519.9 439.1 1520.6 424.6 1521.2 445.9 1521.8 433.9 1522.5 437.9 1523.1 397.7 1523.8 437.1 1524.4 416.1 1525.0 437.2 1525.7 442.5 1526.3 451.3 1526.9 460.2 1527.6 439.5 1528.2 420.1 1528.9 429.5 1529.5 426.0 1530.1 433.2 1530.8 439.1 1531.4 417.1 1532.0 441.5 1532.7 421.8 1533.3 440.6 1533.9 436.2 1534.6 433.8 1535.2 436.2 1535.9 431.1 1536.5 430.1 1537.1 418.7 1537.8 435.9 1538.4 455.4 1539.0 456.6 1539.7 449.5 1540.3 442.8 1540.9 428.1 1541.6 450.2 1542.2 434.2 1542.9 433.9 1543.5 431.4 1544.1 435.2 1544.8 429.5 1545.4 433.0 1546.0 422.3 1546.7 429.6 1547.3 457.3 1548.0 432.4 1548.6 430.4 1549.2 438.3 1549.9 440.0 1550.5 420.7 1551.1 430.0 1551.8 404.5 1552.4 434.6 1553.0 432.9 1553.7 477.0 1554.3 424.1 1555.0 399.2 1555.6 425.4 1556.2 446.3 1556.9 409.9 1557.5 423.2 1558.1 424.5 1558.8 436.8 1559.4 436.0 1560.0 444.1 1560.7 412.8 1561.3 408.5 1562.0 425.8 1562.6 421.7 1563.2 434.2 1563.9 418.7 1564.5 406.3 1565.1 424.1 1565.8 412.3 1566.4 421.2 1567.1 431.9 1567.7 431.3 1568.3 444.7 1569.0 425.9 1569.6 411.9 1570.2 420.1 1570.9 418.3 1571.5 415.2 1572.1 432.6 1572.8 421.2 1573.4 407.2 1574.1 400.7 1574.7 426.8 1575.3 431.7 1576.0 429.1 1576.6 434.6 1577.2 428.4 1577.9 441.0 1578.5 432.5 1579.1 432.1 1579.8 432.3 1580.4 412.7 1581.1 446.8 1581.7 425.3 1582.3 430.2 1583.0 413.7 1583.6 445.2 1584.2 429.1 1584.9 415.3 1585.5 410.1 1586.2 394.6 1586.8 427.1 1587.4 420.5 1588.1 429.0 1588.7 421.3 1589.3 433.8 1590.0 420.4 1590.6 427.6 1591.2 438.3 1591.9 455.0 1592.5 417.4 1593.2 423.1 1593.8 419.2 1594.4 455.1 1595.1 415.9 1595.7 422.9 1596.3 427.7 1597.0 417.7 1597.6 417.9 1598.2 423.0 1598.9 405.9 1599.5 412.8 1600.2 423.7 1600.8 429.6 1601.4 426.1 1602.1 409.5 1602.7 423.3 1603.3 436.5 1604.0 434.0 1604.6 427.4 1605.3 418.9 1605.9 434.9 1606.5 422.2 1607.2 416.0 1607.8 419.9 1608.4 443.6 1609.1 430.7 1609.7 465.8 1610.3 423.4 1611.0 438.3 1611.6 422.2 1612.3 426.9 1612.9 454.7 1613.5 436.7 1614.2 423.4 1614.8 427.8 1615.4 432.1 1616.1 441.4 1616.7 423.6 1617.3 410.5 1618.0 425.9 1618.6 429.0 1619.3 430.0 1619.9 442.7 1620.5 432.2 1621.2 437.5 1621.8 417.4 1622.4 438.1 1623.1 451.0 1623.7 437.2 1624.4 431.7 1625.0 430.7 1625.6 447.9 1626.3 419.4 1626.9 428.0 1627.5 434.1 1628.2 437.1 1628.8 424.7 1629.4 432.5 1630.1 426.4 1630.7 430.6 1631.4 428.0 1632.0 387.7 1632.6 429.2 1633.3 438.7 1633.9 419.4 1634.5 444.2 1635.2 436.5 1635.8 418.4 1636.4 431.5 1637.1 418.5 1637.7 441.6 1638.4 454.0 1639.0 451.0 1639.6 427.5 1640.3 437.6 1640.9 431.1 1641.5 430.9 1642.2 446.1 1642.8 416.1 1643.5 441.0 1644.1 429.4 1644.7 444.8 1645.4 432.2 1646.0 423.5 1646.6 433.8 1647.3 438.9 1647.9 431.9 1648.5 437.0 1649.2 426.8 1649.8 396.6 1650.5 442.4 1651.1 440.6 1651.7 435.1 1652.4 434.6 1653.0 412.6 1653.6 429.8 1654.3 427.5 1654.9 466.3 1655.5 448.1 1656.2 421.4 1656.8 448.8 1657.5 429.9 1658.1 454.7 1658.7 450.6 1659.4 436.6 1660.0 424.4 1660.6 435.7 1661.3 430.4 1661.9 455.0 1662.6 439.5 1663.2 449.7 1663.8 454.4 1664.5 441.6 1665.1 453.6 1665.7 451.0 1666.4 450.7 1667.0 487.7 1667.6 471.9 1668.3 478.9 1668.9 490.3 1669.6 480.2 1670.2 498.9 1670.8 492.1 1671.5 501.7 1672.1 507.6 1672.7 503.7 1673.4 524.0 1674.0 494.0 1674.6 513.8 1675.3 504.5 1675.9 529.9 1676.6 530.9 1677.2 523.1 1677.8 525.6 1678.5 538.4 1679.1 545.4 1679.7 544.2 1680.4 559.0 1681.0 568.9 1681.7 579.9 1682.3 581.9 1682.9 588.1 1683.6 588.7 1684.2 605.0 1684.8 612.7 1685.5 613.7 1686.1 621.3 1686.7 624.9 1687.4 642.2 1688.0 657.0 1688.7 658.6 1689.3 673.3 1689.9 684.8 1690.6 693.6 1691.2 715.8 1691.8 726.1 1692.5 757.7 1693.1 806.8 1693.7 860.1 1694.4 913.5 1695.0 966.9 1695.7 1040.7 1696.3 1013.2 1696.9 956.2 1697.6 926.0 1698.2 891.0 1698.8 870.4 1699.5 865.2 1700.1 841.7 1700.7 841.2 1701.4 836.1 1702.0 825.2 1702.7 824.1 1703.3 830.5 1703.9 822.3 1704.6 824.8 1705.2 828.1 1705.8 844.7 1706.5 864.9 1707.1 879.9 1707.8 893.9 1708.4 925.4 1709.0 971.4 1709.7 1047.0 1710.3 1168.4 1710.9 1073.5 1711.6 1022.4 1712.2 983.9 1712.8 958.5 1713.5 939.1 1714.1 921.6 1714.8 911.9 1715.4 908.8 1716.0 895.6 1716.7 888.3 1717.3 877.4 1717.9 887.0 1718.6 877.4 1719.2 883.9 1719.8 901.0 1720.5 909.1 1721.1 916.7 1721.8 924.5 1722.4 950.7 1723.0 975.2 1723.7 1016.6 1724.3 1075.8 1724.9 1155.7 1725.6 1256.8 1726.2 1104.0 1726.9 1057.8 1727.5 1022.1 1728.1 991.2 1728.8 977.0 1729.4 955.0 1730.0 953.3 1730.7 943.4 1731.3 936.3 1731.9 923.8 1732.6 925.5 1733.2 921.4 1733.9 921.0 1734.5 924.0 1735.1 924.3 1735.8 930.6 1736.4 950.7 1737.0 958.1 1737.7 975.6 1738.3 999.0 1738.9 1011.2 1739.6 1049.4 1740.2 1101.8 1740.9 1180.7 1741.5 1247.7 1742.1 1122.5 1742.8 1072.3 1743.4 1032.0 1744.0 1008.2 1744.7 997.0 1745.3 980.0 1746.0 956.5 1746.6 962.8 1747.2 952.3 1747.9 951.1 1748.5 940.0 1749.1 939.6 1749.8 936.7 1750.4 957.2 1751.0 949.2 1751.7 964.8 1752.3 963.6 1753.0 979.8 1753.6 986.6 1754.2 1012.5 1754.9 1044.4 1755.5 1067.3 1756.1 1124.7 1756.8 1229.6 1757.4 1181.9 1758.0 1121.9 1758.7 1081.6 1759.3 1054.2 1760.0 1029.3 1760.6 1010.2 1761.2 998.7 1761.9 984.2 1762.5 974.5 1763.1 974.3 1763.8 974.7 1764.4 961.0 1765.1 968.2 1765.7 966.7 1766.3 968.8 1767.0 983.4 1767.6 984.8 1768.2 1005.0 1768.9 1007.5 1769.5 1030.2 1770.1 1049.0 1770.8 1074.7 1771.4 1118.9 1772.1 1173.0 1772.7 1241.7 1773.3 1173.7 1774.0 1124.8 1774.6 1095.4 1775.2 1071.2 1775.9 1055.9 1776.5 1031.2 1777.1 1022.8 1777.8 1004.8 1778.4 1008.6 1779.1 994.7 1779.7 987.5 1780.3 994.0 1781.0 999.5 1781.6 988.5 1782.2 994.0 1782.9 1001.0 1783.5 1006.5 1784.2 1023.5 1784.8 1030.2 1785.4 1046.2 1786.1 1072.1 1786.7 1091.0 1787.3 1129.0 1788.0 1172.4 1788.6 1270.4 1789.2 1207.9 1789.9 1151.8 1790.5 1104.0 1791.2 1076.5 1791.8 1052.1 1792.4 1034.9 1793.1 1020.0 1793.7 1017.6 1794.3 994.8 1795.0 985.9 1795.6 984.1 1796.2 980.2 1796.9 989.6 1797.5 991.3 1798.2 986.0 1798.8 989.2 1799.4 1001.5 1800.1 1019.7 1800.7 1012.1 1801.3 1044.1 1802.0 1056.7 1802.6 1092.9 1803.3 1118.9 1803.9 1172.1 1804.5 1281.7 1805.2 1214.3 1805.8 1155.4 1806.4 1113.7 1807.1 1078.4 1807.7 1053.1 1808.3 1030.1 1809.0 1023.1 1809.6 1013.6 1810.3 1004.8 1810.9 998.4 1811.5 989.3 1812.2 992.1 1812.8 991.9 1813.4 999.8 1814.1 1006.1 1814.7 1002.0 1815.3 1006.6 1816.0 1020.2 1816.6 1030.6 1817.3 1046.4 1817.9 1070.7 1818.5 1093.4 1819.2 1136.2 1819.8 1186.7 1820.4 1277.9 1821.1 1198.4 1821.7 1138.9 1822.4 1098.3 1823.0 1072.7 1823.6 1049.3 1824.3 1035.9 1824.9 1021.2 1825.5 1004.2 1826.2 1003.1 1826.8 990.7 1827.4 990.6 1828.1 990.7 1828.7 982.6 1829.4 995.4 1830.0 1000.2 1830.6 1005.5 1831.3 1013.4 1831.9 1025.7 1832.5 1038.3 1833.2 1061.4 1833.8 1085.6 1834.4 1122.6 1835.1 1168.7 1835.7 1305.1 1836.4 1252.2 1837.0 1182.6 1837.6 1137.4 1838.3 1109.2 1838.9 1074.8 1839.5 1066.0 1840.2 1049.8 1840.8 1038.1 1841.5 1029.2 1842.1 1017.1 1842.7 1014.0 1843.4 1015.1 1844.0 1012.8 1844.6 1012.2 1845.3 1006.2 1845.9 1020.2 1846.5 1029.3 1847.2 1036.8 1847.8 1043.8 1848.5 1048.7 1849.1 1077.8 1849.7 1094.2 1850.4 1113.7 1851.0 1161.2 1851.6 1214.2 1852.3 1308.9 1852.9 1217.5 1853.5 1163.0 1854.2 1119.8 1854.8 1093.9 1855.5 1079.1 1856.1 1061.2 1856.7 1039.5 1857.4 1028.3 1858.0 1015.4 1858.6 1012.4 1859.3 1014.0 1859.9 1012.1 1860.6 1010.8 1861.2 1017.0 1861.8 1012.4 1862.5 1021.8 1863.1 1033.7 1863.7 1043.6 1864.4 1059.4 1865.0 1073.2 1865.6 1091.4 1866.3 1121.8 1866.9 1155.2 1867.6 1210.2 1868.2 1271.9 1868.8 1178.4 1869.5 1128.2 1870.1 1083.6 1870.7 1063.0 1871.4 1041.1 1872.0 1023.4 1872.6 1003.8 1873.3 1002.8 1873.9 1001.0 1874.6 993.0 1875.2 984.8 1875.8 986.0 1876.5 990.0 1877.1 975.3 1877.7 992.1 1878.4 1001.6 1879.0 1010.8 1879.7 1026.9 1880.3 1038.4 1880.9 1052.6 1881.6 1075.8 1882.2 1108.1 1882.8 1145.6 1883.5 1212.5 1884.1 1306.3 1884.7 1202.9 1885.4 1147.8 1886.0 1111.7 1886.7 1085.8 1887.3 1070.4 1887.9 1047.3 1888.6 1041.5 1889.2 1019.6 1889.8 1015.7 1890.5 1010.2 1891.1 1011.4 1891.7 1011.1 1892.4 999.2 1893.0 1004.3 1893.7 1014.5 1894.3 1016.0 1894.9 1020.3 1895.6 1043.8 1896.2 1055.3 1896.8 1073.3 1897.5 1091.7 1898.1 1127.4 1898.8 1164.3 1899.4 1228.3 1900.0 1306.3 1900.7 1193.6 1901.3 1142.1 1901.9 1102.1 1902.6 1081.2 1903.2 1058.3 1903.8 1036.2 1904.5 1028.1 1905.1 1016.0 1905.8 1014.5 1906.4 1001.7 1907.0 999.3 1907.7 1005.9 1908.3 1011.3" fill="none" stroke="#ffe566" stroke-width="2.5" stroke-linejoin="round"/><path d="M1257.0 1427.3 v-8 M1257.0 273.0 v8 M1289.6 1427.3 v-4.5 M1289.6 273.0 v4.5 M1322.1 1427.3 v-4.5 M1322.1 273.0 v4.5 M1354.7 1427.3 v-4.5 M1354.7 273.0 v4.5 M1387.3 1427.3 v-4.5 M1387.3 273.0 v4.5 M1419.8 1427.3 v-8 M1419.8 273.0 v8 M1452.4 1427.3 v-4.5 M1452.4 273.0 v4.5 M1485.0 1427.3 v-4.5 M1485.0 273.0 v4.5 M1517.5 1427.3 v-4.5 M1517.5 273.0 v4.5 M1550.1 1427.3 v-4.5 M1550.1 273.0 v4.5 M1582.7 1427.3 v-8 M1582.7 273.0 v8 M1615.2 1427.3 v-4.5 M1615.2 273.0 v4.5 M1647.8 1427.3 v-4.5 M1647.8 273.0 v4.5 M1680.3 1427.3 v-4.5 M1680.3 273.0 v4.5 M1712.9 1427.3 v-4.5 M1712.9 273.0 v4.5 M1745.5 1427.3 v-8 M1745.5 273.0 v8 M1778.0 1427.3 v-4.5 M1778.0 273.0 v4.5 M1810.6 1427.3 v-4.5 M1810.6 273.0 v4.5 M1843.2 1427.3 v-4.5 M1843.2 273.0 v4.5 M1875.7 1427.3 v-4.5 M1875.7 273.0 v4.5 M1908.3 1427.3 v-8 M1908.3 273.0 v8 M1257.0 285.8 h8 M1908.3 285.8 h-8 M1257.0 309.1 h4.5 M1908.3 309.1 h-4.5 M1257.0 332.4 h8 M1908.3 332.4 h-8 M1257.0 355.7 h4.5 M1908.3 355.7 h-4.5 M1257.0 379.0 h8 M1908.3 379.0 h-8 M1257.0 402.3 h4.5 M1908.3 402.3 h-4.5 M1257.0 425.6 h8 M1908.3 425.6 h-8 M1257.0 448.8 h4.5 M1908.3 448.8 h-4.5 M1257.0 472.1 h8 M1908.3 472.1 h-8 M1257.0 495.4 h4.5 M1908.3 495.4 h-4.5 M1257.0 518.7 h8 M1908.3 518.7 h-8 M1257.0 542.0 h4.5 M1908.3 542.0 h-4.5 M1257.0 565.3 h8 M1908.3 565.3 h-8 M1257.0 588.6 h4.5 M1908.3 588.6 h-4.5 M1257.0 611.9 h8 M1908.3 611.9 h-8 M1257.0 635.2 h4.5 M1908.3 635.2 h-4.5 M1257.0 658.5 h8 M1908.3 658.5 h-8 M1257.0 681.8 h4.5 M1908.3 681.8 h-4.5 M1257.0 705.0 h8 M1908.3 705.0 h-8 M1257.0 728.3 h4.5 M1908.3 728.3 h-4.5 M1257.0 751.6 h8 M1908.3 751.6 h-8 M1257.0 774.9 h4.5 M1908.3 774.9 h-4.5 M1257.0 798.2 h8 M1908.3 798.2 h-8 M1257.0 821.5 h4.5 M1908.3 821.5 h-4.5 M1257.0 844.8 h8 M1908.3 844.8 h-8 M1257.0 868.1 h4.5 M1908.3 868.1 h-4.5 M1257.0 891.4 h8 M1908.3 891.4 h-8 M1257.0 914.6 h4.5 M1908.3 914.6 h-4.5 M1257.0 937.9 h8 M1908.3 937.9 h-8 M1257.0 961.2 h4.5 M1908.3 961.2 h-4.5 M1257.0 984.5 h8 M1908.3 984.5 h-8 M1257.0 1007.8 h4.5 M1908.3 1007.8 h-4.5 M1257.0 1031.1 h8 M1908.3 1031.1 h-8 M1257.0 1054.4 h4.5 M1908.3 1054.4 h-4.5 M1257.0 1077.7 h8 M1908.3 1077.7 h-8 M1257.0 1101.0 h4.5 M1908.3 1101.0 h-4.5 M1257.0 1124.3 h8 M1908.3 1124.3 h-8 M1257.0 1147.5 h4.5 M1908.3 1147.5 h-4.5 M1257.0 1170.8 h8 M1908.3 1170.8 h-8 M1257.0 1194.1 h4.5 M1908.3 1194.1 h-4.5 M1257.0 1217.4 h8 M1908.3 1217.4 h-8 M1257.0 1240.7 h4.5 M1908.3 1240.7 h-4.5 M1257.0 1264.0 h8 M1908.3 1264.0 h-8 M1257.0 1287.3 h4.5 M1908.3 1287.3 h-4.5 M1257.0 1310.6 h8 M1908.3 1310.6 h-8 M1257.0 1333.9 h4.5 M1908.3 1333.9 h-4.5 M1257.0 1357.2 h8 M1908.3 1357.2 h-8 M1257.0 1380.4 h4.5 M1908.3 1380.4 h-4.5 M1257.0 1403.7 h8 M1908.3 1403.7 h-8 M1257.0 1427.0 h4.5 M1908.3 1427.0 h-4.5" stroke="#d6d6d6" stroke-width="2" fill="none"/><rect x="1257.0" y="273.0" width="651.3" height="1154.3" fill="none" stroke="#d6d6d6" stroke-width="2"/><text x="1251.5" y="290.8" text-anchor="end" font-size="17" fill="#d4d4d4">4</text><text x="1251.5" y="337.4" text-anchor="end" font-size="17" fill="#d4d4d4">0</text><text x="1251.5" y="384.0" text-anchor="end" font-size="17" fill="#d4d4d4">-4</text><text x="1251.5" y="430.6" text-anchor="end" font-size="17" fill="#d4d4d4">-8</text><text x="1251.5" y="477.1" text-anchor="end" font-size="17" fill="#d4d4d4">-12</text><text x="1251.5" y="523.7" text-anchor="end" font-size="17" fill="#d4d4d4">-16</text><text x="1251.5" y="570.3" text-anchor="end" font-size="17" fill="#d4d4d4">-20</text><text x="1251.5" y="616.9" text-anchor="end" font-size="17" fill="#d4d4d4">-24</text><text x="1251.5" y="663.5" text-anchor="end" font-size="17" fill="#d4d4d4">-28</text><text x="1251.5" y="710.0" text-anchor="end" font-size="17" fill="#d4d4d4">-32</text><text x="1251.5" y="756.6" text-anchor="end" font-size="17" fill="#d4d4d4">-36</text><text x="1251.5" y="803.2" text-anchor="end" font-size="17" fill="#d4d4d4">-40</text><text x="1251.5" y="849.8" text-anchor="end" font-size="17" fill="#d4d4d4">-44</text><text x="1251.5" y="896.4" text-anchor="end" font-size="17" fill="#d4d4d4">-48</text><text x="1251.5" y="942.9" text-anchor="end" font-size="17" fill="#d4d4d4">-52</text><text x="1251.5" y="989.5" text-anchor="end" font-size="17" fill="#d4d4d4">-56</text><text x="1251.5" y="1036.1" text-anchor="end" font-size="17" fill="#d4d4d4">-60</text><text x="1251.5" y="1082.7" text-anchor="end" font-size="17" fill="#d4d4d4">-64</text><text x="1251.5" y="1129.3" text-anchor="end" font-size="17" fill="#d4d4d4">-68</text><text x="1251.5" y="1175.8" text-anchor="end" font-size="17" fill="#d4d4d4">-72</text><text x="1251.5" y="1222.4" text-anchor="end" font-size="17" fill="#d4d4d4">-76</text><text x="1251.5" y="1269.0" text-anchor="end" font-size="17" fill="#d4d4d4">-80</text><text x="1251.5" y="1315.6" text-anchor="end" font-size="17" fill="#d4d4d4">-84</text><text x="1251.5" y="1362.2" text-anchor="end" font-size="17" fill="#d4d4d4">-88</text><text x="1251.5" y="1408.7" text-anchor="end" font-size="17" fill="#d4d4d4">-92</text><text x="1256.0" y="1446.6" text-anchor="middle" font-size="17" fill="#d4d4d4">-2</text><text x="1418.8" y="1446.6" text-anchor="middle" font-size="17" fill="#d4d4d4">-1</text><text x="1582.7" y="1446.6" text-anchor="middle" font-size="17" fill="#d4d4d4">0</text><text x="1745.5" y="1446.6" text-anchor="middle" font-size="17" fill="#d4d4d4">1</text><text x="1908.3" y="1446.6" text-anchor="middle" font-size="17" fill="#d4d4d4">2</text><text x="1582" y="1474.8" text-anchor="middle" font-size="19" fill="#d4d4d4">Frequency (MHz)</text><text transform="translate(1211.5,847.5) rotate(-90)" text-anchor="middle" font-size="19" fill="#d4d4d4">Power (dBm)</text></svg>
<div style="position:absolute;left:1935.2px;top:223.3px;width:751.0px;height:35.7px;background:#fff"></div>
<div style="position:absolute;left:1957.5px;top:224.8px;width:220.0px;height:34.2px;background:#fff;border-left:1px solid #d2d2d2;border-right:1px solid #d2d2d2;box-sizing:border-box"></div>
<div style="position:absolute;left:1957.5px;top:224.8px;width:220.0px;height:4.3px;background:#9e9e9e"></div>
<div class="t" style="left:1970.6px;top:234.4px;font-size:18px;color:#333;font-weight:normal;transform:scaleX(0.9923);transform-origin:0 0;">Constellation Diagram</div>
<div style="position:absolute;left:1935.2px;top:259.0px;width:751.0px;height:1260.5px;background:#212121"></div>
<div style="position:absolute;left:1935.2px;top:1519.5px;width:751.0px;height:1.0px;background:#f4f4f4"></div>
<div style="position:absolute;left:1935.2px;top:1520.5px;width:751.0px;height:1.3px;background:#8e8e8e"></div>
<svg font-family="Liberation Sans" width="2686" height="1552"><rect x="2012.0" y="273.0" width="649.5" height="1187.5" fill="#131313"/><path d="M2166.5 273.0 V1460.5 M2337.2 273.0 V1460.5 M2507.9 273.0 V1460.5 M2012.0 1435.0 H2661.5 M2012.0 1378.1 H2661.5 M2012.0 1321.2 H2661.5 M2012.0 1264.3 H2661.5 M2012.0 1207.4 H2661.5 M2012.0 1150.5 H2661.5 M2012.0 1093.6 H2661.5 M2012.0 1036.7 H2661.5 M2012.0 979.8 H2661.5 M2012.0 922.9 H2661.5 M2012.0 866.0 H2661.5 M2012.0 809.1 H2661.5 M2012.0 752.2 H2661.5 M2012.0 695.3 H2661.5 M2012.0 638.4 H2661.5 M2012.0 581.5 H2661.5 M2012.0 524.6 H2661.5 M2012.0 467.7 H2661.5 M2012.0 410.8 H2661.5 M2012.0 353.9 H2661.5 M2012.0 297.0 H2661.5" stroke="#3f3f3f" stroke-width="1.6" fill="none"/><path d="M2225 956h0m16 0h0m-45 -214h0m94 74h0m209 23h0m-233 -61h0m-50 168h0m94 -63h0m4 9h0m-42 -64h0m84 195h0m-143 -186h0m-39 80h0m40 67h0m249 -78h0m-101 -199h0m-72 180h0m95 6h0m-37 -59h0m97 -60h0m54 31h0m-229 -77h0m42 -6h0m123 11h0m57 191h0m-125 108h0m100 -122h0m-3 -4h0m-152 -54h0m142 -111h0m-11 -2h0m20 260h0m-165 -4h0m-100 -104h0m-5 -44h0m311 86h0m-75 35h0m-195 22h0m151 -261h0m91 200h0m-6 -12h0m-73 -27h0m-2 -52h0m-122 -114h0m244 88h0m-213 221h0m94 -17h0m-23 18h0m1 -148h0m-5 -40h0m3 40h0m-164 86h0m188 -250h0m71 18h0m-156 174h0m193 -35h0m-333 35h0m61 -140h0m227 -31h0m-299 171h0m311 -8h0m-39 -160h0m-147 287h0m42 -134h0m46 -206h0m-149 258h0m163 -223h0m-14 130h0m143 -16h0m-124 -124h0m-222 99h0m300 175h0m-39 -39h0m-155 -111h0m195 87h0m-306 -8h0m261 54h0m-5 0h0m-64 -79h0m104 -125h0m-89 116h0m-8 -160h0m-4 89h0m-206 84h0m123 -7h0m48 -48h0m-114 125h0m170 -121h0m122 42h0m-223 108h0m106 -104h0m-111 116h0m-2 -107h0m23 -54h0m-72 -79h0m252 206h0m5 -94h0m-120 35h0m-71 -73h0m136 143h0m-186 -241h0m-84 74h0m149 -90h0m80 268h0m68 -7h0m-242 -6h0m3 -70h0m138 -5h0m115 -80h0m-261 149h0m257 -7h0m-44 -223h0m-107 164h0m89 94h0m-117 -277h0m-64 280h0m83 -139h0m176 19h0m-317 -73h0m50 131h0m32 -201h0m-86 185h0m152 63h0m-131 -104h0m25 119h0m173 -149h0m-71 143h0m1 -5h0m-72 -219h0m42 110h0m152 -143h0m-189 31h0m230 37h0m-218 171h0m-50 -77h0m283 24h0m-171 -211h0m-35 113h0m94 154h0m-80 -290h0m53 206h0m42 -1h0m-104 74h0m194 -219h0m-173 240h0m167 -160h0m-128 66h0m44 100h0m53 -271h0m27 37h0m-4 -24h0m-103 140h0m-4 -184h0m126 184h0m-212 131h0m211 -92h0m-197 -89h0m182 -19h0m-255 30h0m215 117h0m44 -139h0m-82 197h0m-27 -181h0m-120 123h0m227 -61h0m4 -58h0m-215 167h0m20 14h0m-76 -119h0m185 -211h0m-2 332h0m-31 -120h0m33 -218h0m-94 6h0m-96 198h0m120 114h0m142 -209h0m-108 -87h0m111 261h0m-262 -122h0m253 -81h0m-149 -87h0m-99 59h0m151 91h0m-174 -35h0m107 16h0m-92 64h0m115 148h0m-72 -49h0m152 -149h0m-2 -124h0m-33 132h0m12 -81h0m92 203h0m-184 -129h0m-30 148h0m114 -65h0m-5 -98h0m122 24h0m-100 79h0m-178 -160h0m183 155h0m-82 -28h0m68 0h0m-161 -53h0m143 178h0m-136 -50h0m-25 -216h0m99 -46h0m86 294h0m126 -85h0m-108 113h0m36 -255h0m-257 82h0m282 -71h0m-168 -47h0m98 91h0m-13 63h0m77 -162h0m-165 107h0m215 90h0m-290 59h0m178 57h0m-1 -117h0m56 -147h0m-139 259h0m-103 -137h0m3 -52h0m107 -115h0m-8 305h0m-103 -273h0m77 143h0m7 101h0m9 -150h0m107 202h0m33 -72h0m22 -211h0m-70 117h0m49 81h0m-155 -232h0m178 33h0m-264 116h0m111 -39h0m-93 -96h0m152 -44h0m-75 101h0m-100 33h0m131 -130h0m70 198h0m-187 -24h0m65 -167h0m31 167h0m2 163h0m67 -126h0m-181 -115h0m327 26h0m-129 82h0m-166 77h0m296 -78h0m-32 8h0m-116 -36h0m23 24h0m-87 -95h0m-100 25h0m155 3h0m-47 189h0m-10 2h0m169 -195h0m-73 65h0m-18 -92h0m135 94h0m-191 -16h0m-159 14h0m270 -170h0m-202 262h0m12 -262h0m229 78h0m17 -12h0m-31 188h0m-297 -78h0m273 -145h0m-147 -65h0m210 229h0m-310 -124h0m169 27h0m-84 -106h0m96 -27h0m-37 203h0m-135 60h0m82 60h0m-31 -264h0m-20 199h0m75 94h0m95 -324h0m91 164h0m-40 -151h0m-241 57h0m83 46h0m67 52h0m-196 -52h0m132 -32h0m-11 -3h0m-78 90h0m161 107h0m95 -17h0m1 8h0m-71 30h0m43 -41h0m-27 -259h0m-53 288h0m-149 -26h0m83 -253h0m163 225h0m-66 80h0m-26 -327h0m-148 178h0m-38 -71h0m258 -71h0m-225 16h0m185 -29h0m-75 103h0m49 -94h0m-3 280h0m34 -200h0m-150 125h0m114 -27h0m-193 -93h0m122 -140h0m74 29h0m78 235h0m-137 -151h0m61 43h0m0 73h0m89 -9h0m-93 -196h0m-118 248h0m187 25h0m-115 30h0m-23 -323h0m67 149h0m-122 -64h0m-52 149h0m20 -18h0m-4 -22h0m241 66h0m-8 30h0m-32 -161h0m-42 1h0m-188 68h0m321 37h0m-4 -4h0m-167 -102h0m85 167h0m-220 -65h0m208 79h0m74 -181h0m-155 -112h0m-3 291h0m68 32h0m-181 -150h0m40 -154h0m220 233h0m-253 -206h0m267 81h0m-81 -133h0m-8 175h0m-34 117h0m-60 32h0m36 -115h0m-19 84h0m164 -99h0m-18 56h0m-285 -128h0m129 -12h0m152 -95h0m-270 117h0m186 159h0m144 -90h0m-292 -120h0m250 -33h0m-148 74h0m149 74h0m-262 -140h0m-31 133h0m7 -55h0m215 -21h0m-33 74h0m29 10h0m91 -11h0m-185 -17h0m-97 98h0m114 -81h0m163 34h0m-258 34h0m176 -274h0m-92 168h0m-65 81h0m206 18h0m-17 31h0m10 -240h0m-154 -13h0m191 260h0m-192 -255h0m183 29h0m-154 81h0m-55 140h0m57 -99h0m55 -184h0m144 226h0m-330 -122h0m169 -103h0m-65 213h0m-56 37h0m160 74h0m-70 -140h0m-108 -122h0m100 148h0m-103 64h0m63 -246h0m207 158h0m-197 -187h0m222 119h0m-4 27h0m-133 27h0m-65 6h0m5 -2h0m-21 -181h0m-9 208h0m82 -182h0m-179 202h0m148 -18h0m-21 -61h0m195 -15h0m-51 -107h0m-146 161h0m-92 121h0m185 6h0m-37 -295h0m-206 169h0m229 35h0m-182 -2h0m173 -190h0m-170 203h0m72 -34h0m227 11h0m-51 97h0m-174 -7h0m1 -116h0m47 -80h0m130 -14h0m-44 224h0m-130 -194h0m189 17h0m-265 -95h0m-6 106h0m253 114h0m-80 -162h0m104 127h0m-294 11h0m52 51h0m-15 -212h0m236 -9h0m-253 39h0m313 13h0m-347 100h0m26 -115h0m27 -69h0m182 304h0m-45 -198h0m149 -23h0m-227 193h0m-2 -193h0m110 20h0m-94 -140h0m3 102h0m-127 98h0m146 -180h0m-111 228h0m254 -204h0m12 172h0m-190 127h0m158 -51h0m-145 -103h0m94 12h0m-208 21h0m88 54h0m22 -98h0m-100 -119h0m116 54h0m44 98h0m-35 -197h0m3 121h0m-12 50h0m-23 47h0m162 -195h0m-131 183h0m83 93h0m3 -315h0m-235 198h0m76 -116h0m47 68h0m70 -144h0m-138 77h0m70 -49h0m14 308h0m154 -259h0m-258 71h0m76 -152h0m15 149h0m-70 110h0m282 -131h0m-213 -96h0m-121 77h0m301 174h0m-88 -91h0m77 78h0m-203 -238h0m-71 79h0m154 88h0m41 138h0m-8 -39h0m-177 -159h0m93 86h0m18 -190h0m32 293h0m13 -310h0m94 280h0m-159 -103h0m80 -163h0m67 9h0m-73 269h0m-7 -164h0m119 -4h0m-195 -140h0m107 295h0m-135 -255h0m-98 164h0m48 86h0m86 -73h0m-87 -104h0m184 -75h0m-185 67h0m233 162h0m-67 -285h0m130 207h0m-173 -78h0m42 195h0m149 -91h0m-326 -108h0m213 103h0m-113 -72h0m160 -65h0m42 117h0m-17 18h0m-164 -214h0m-63 291h0m44 -297h0m-77 53h0m168 -10h0m-26 103h0m2 22h0m31 19h0m-91 5h0m-50 96h0m-74 -78h0m325 22h0m-222 -18h0m-91 -99h0m180 115h0m-43 -86h0m-156 -6h0m256 -74h0m-214 -15h0m45 245h0m124 -100h0m-10 -184h0m-59 222h0m-19 -103h0m159 -79h0m-172 -23h0m204 88h0m-273 -56h0m117 91h0m-111 -73h0m92 88h0m51 167h0m-169 -133h0m20 108h0m-3 -175h0m156 192h0m-139 -16h0m211 -14h0m-190 -32h0m12 -188h0m-54 48h0m-13 -2h0m175 76h0m30 -60h0m105 14h0m-219 -102h0m127 285h0m-217 -180h0m220 175h0m-21 -147h0m-14 -64h0m-124 -54h0m193 20h0m-197 -7h0m-5 220h0m234 -161h0m-15 95h0m26 -114h0m-133 -79h0m-112 41h0m133 -18h0m-55 -45h0m154 57h0m-232 18h0m121 23h0m83 190h0m-279 -194h0m220 21h0m-64 6h0m-147 58h0m293 -58h0m-101 94h0m7 -234h0m-171 214h0m285 -16h0m-308 41h0m177 -41h0m169 -71h0m-278 165h0m0 -15h0m30 -229h0m78 166h0m10 126h0m7 -296h0m-71 -38h0m63 160h0m135 -9h0m-296 62h0m171 -218h0m-60 200h0m85 13h0m-32 98h0m-85 37h0m164 -251h0m-269 16h0m276 -27h0m-111 238h0m-66 32h0m91 -14h0m-188 -99h0m226 -48h0m55 -107h0m-248 -17h0m157 170h0m96 61h0m-168 -108h0m80 37h0m20 -216h0m-191 122h0m-35 86h0m174 5h0m-133 2h0m171 -219h0m-194 192h0m296 -4h0m-301 40h0m282 51h0m-150 -243h0m180 156h0m2 40h0m-219 -12h0m190 -3h0m-75 120h0m102 -81h0m-41 -2h0m-99 -50h0m-115 -154h0m-73 78h0m309 100h0m-169 -231h0m159 195h0m-1 -155h0m-240 42h0m198 -17h0m-107 259h0m42 6h0m-204 -175h0m231 -29h0m-163 -80h0m97 119h0m110 131h0m-87 54h0m33 -127h0m-64 -217h0m8 308h0m-164 -107h0m217 133h0m-151 -300h0m-43 187h0m330 -24h0m-233 -184h0m-72 203h0m253 42h0m-259 -117h0m167 47h0m-132 -149h0m248 102h0m-176 -28h0m79 103h0m-182 -144h0m160 276h0m136 -210h0m-168 -131h0m31 14h0m73 251h0m-132 -96h0m182 12h0m-166 -70h0m169 73h0m24 -49h0m-273 164h0m131 -155h0m-54 -40h0m75 87h0m-125 -186h0m-75 209h0m92 -111h0m-74 36h0m112 -135h0m-160 102h0m12 18h0m206 -132h0m-137 69h0m-49 158h0m294 -84h0m-122 -145h0m29 236h0m-83 -47h0m-62 95h0m144 -108h0m-72 46h0m72 -85h0m-121 63h0m-84 -89h0m212 -79h0m-166 0h0m12 272h0m240 -153h0m-17 -107h0m-98 140h0m105 -42h0m-254 -68h0m-25 70h0m179 -145h0m-157 81h0m104 122h0m70 20h0m-27 -197h0m-116 276h0m-43 -169h0m183 14h0m-149 -59h0m223 -22h0m9 -6h0m-282 133h0m193 110h0m-96 -104h0m-112 -57h0m109 -114h0m151 233h0m-143 -139h0m173 89h0m-77 -172h0m124 170h0m-44 61h0m-165 -232h0m-22 89h0m187 1h0m-193 180h0m235 -169h0m-224 -12h0m221 94h0m-144 104h0m14 -100h0m116 -120h0m-289 118h0m243 34h0m-44 76h0m-26 -291h0m-24 301h0m44 -178h0m-158 99h0m78 -256h0m120 300h0m-193 -248h0m230 82h0m-260 126h0m152 -42h0m101 -8h0m-298 -83h0m136 168h0m-20 35h0m60 -152h0m35 -147h0m81 224h0m23 -36h0m-18 -31h0m-55 118h0m-98 18h0m-49 -288h0m-78 190h0m190 -236h0m35 53h0m-175 39h0m113 121h0m113 -140h0m-175 55h0m19 179h0m-147 -175h0m120 172h0m188 -139h0m-35 -119h0m-120 66h0m-81 185h0m-56 -104h0m190 -155h0m-156 11h0m228 38h0m-151 -57h0m28 89h0m112 -63h0m23 203h0m-107 -141h0m53 205h0m-39 -311h0m8 19h0m-127 229h0m270 -129h0m-307 -77h0m-27 164h0m218 -1h0m-62 4h0m178 -95h0m-136 67h0m-17 -44h0m-10 169h0m-56 -119h0m-7 -193h0m-83 220h0m-28 -20h0m145 110h0m35 -275h0m29 11h0m54 225h0m32 -216h0m11 178h0m-265 47h0m-24 -178h0m17 -47h0m193 255h0m77 -181h0m-267 -65h0m28 195h0m-67 -133h0m56 176h0m171 -280h0m100 168h0m-272 -114h0m10 223h0m233 -40h0m-261 -55h0m197 -195h0m-115 327h0m171 -299h0m-19 37h0m27 67h0m-113 -19h0m6 98h0m19 113h0m99 -112h0m-15 -177h0m-97 131h0m-61 -62h0m61 35h0m-195 -19h0m295 -59h0m-83 76h0m83 -24h0m-105 87h0m65 77h0m-170 -225h0m135 145h0m-69 -2h0m-33 136h0m234 -216h0m-153 -97h0m3 192h0m113 -42h0m-26 -96h0m-209 216h0m-5 -11h0m229 -84h0m-192 -194h0m206 101h0m-166 183h0m-39 -73h0m-5 -193h0m81 295h0m-43 -295h0m-110 102h0m39 -65h0m63 161h0m-147 -18h0m280 88h0m62 -163h0m-54 -47h0m19 142h0m-172 -226h0m176 97h0m-80 108h0m73 98h0m-98 -314h0m-98 39h0m-77 194h0m47 37h0m123 -75h0m-35 -62h0m34 69h0m-72 141h0m-77 -304h0m294 205h0m-15 -10h0m10 -106h0m-311 -7h0m172 83h0m-7 -56h0m-45 86h0m185 -72h0m-129 73h0m-6 -195h0m-149 175h0m-6 76h0m-1 -150h0m88 95h0m-10 -110h0m-68 90h0m264 -21h0m-272 15h0m99 -49h0m66 -38h0m-169 86h0m1 -171h0m150 -3h0m-148 92h0m158 198h0m-184 -91h0m300 -30h0m-87 -193h0m-12 181h0m-65 115h0m-77 -228h0m214 183h0m-140 75h0m122 -56h0m-49 -56h0m2 89h0m-6 -268h0m75 257h0m-249 -81h0m110 91h0m-38 6h0m112 23h0m-79 -293h0m76 -4h0m-74 275h0m-108 -175h0m77 -141h0m91 152h0m-87 -140h0m74 321h0m-62 8h0m-84 -289h0m259 69h0m-274 24h0m79 -10h0m210 -23h0m-92 42h0m-73 -6h0m54 -95h0m38 -38h0m-58 131h0m-62 -141h0m186 195h0m-100 -193h0m98 235h0m-257 -157h0m248 156h0m-8 51h0m-100 -173h0m-147 20h0m290 102h0m1 -116h0m-224 -92h0m107 178h0m-198 26h0m95 70h0m192 -75h0m-81 -26h0m-86 107h0m27 -95h0m-21 0h0m-107 1h0m176 -90h0m74 -52h0m-145 151h0m85 -102h0m65 140h0m-182 -38h0m-59 39h0m138 -243h0m-196 193h0m301 -145h0m-80 59h0m77 -48h0m-29 211h0m-54 -256h0m86 257h0m-35 -241h0m-227 239h0m81 43h0m-2 -25h0m77 -312h0m84 47h0m-91 168h0m5 102h0m147 -205h0m-219 20h0m-50 -85h0m72 106h0m6 46h0m-118 -12h0m300 41h0m-29 -13h0m-102 77h0m9 -139h0m-124 128h0m117 -245h0m-46 123h0m-120 41h0m82 -162h0m-43 262h0m114 15h0m149 -191h0m-183 197h0m66 -10h0m-73 -186h0m-26 -13h0m14 234h0m112 -136h0m-115 130h0m79 -186h0m-87 77h0m155 85h0m-140 -7h0m-141 -148h0m89 -102h0m137 -50h0m-145 266h0m206 24h0m-64 -140h0m-180 60h0m107 2h0m191 -24h0m-225 5h0m82 -90h0m30 76h0m-23 152h0m-190 -224h0m257 -69h0m-265 96h0m258 -88h0m-1 237h0m-50 -172h0m15 220h0m113 -199h0m-317 11h0m167 60h0m110 -78h0m-292 56h0m110 -40h0m-99 80h0m321 -91h0m-304 -11h0m42 -62h0m131 -62h0m-145 304h0m209 9h0m-123 -159h0m-140 32h0m124 -7h0m-20 -42h0m109 196h0m-20 -142h0m58 -118h0m-31 244h0m-129 -185h0m45 20h0m-85 -73h0m59 64h0m-70 -109h0m139 88h0m-177 113h0m138 -9h0m-102 -176h0m147 269h0m-134 -63h0m169 74h0m80 -219h0m20 -1h0m-177 41h0m-18 1h0m10 178h0m18 -298h0m24 270h0m-76 -87h0m135 54h0m-113 -233h0m-69 200h0m52 91h0m148 -43h0m-34 -146h0m-208 8h0m204 -127h0m-90 265h0m-9 -43h0m24 74h0m134 -14h0m-135 -179h0m189 22h0m-212 45h0m-2 2h0m80 -187h0m1 35h0m107 153h0m-229 -131h0m222 67h0m-156 79h0m-29 15h0m109 103h0m-152 -22h0m60 -75h0m-123 -69h0m210 -19h0m105 85h0m-332 -85h0m75 127h0m147 -29h0m82 -118h0m-167 152h0m-93 -207h0m112 52h0m151 88h0m-34 53h0m-135 -70h0m175 -40h0m-128 43h0m109 -41h0m-216 -102h0m204 35h0m32 110h0m-91 6h0m-70 -6h0m131 104h0m-72 -75h0m99 -107h0m-8 2h0m23 112h0m-274 -90h0m24 133h0m85 -139h0m-29 18h0m20 38h0m-135 40h0m252 36h0m-204 -9h0m54 -85h0m-119 -52h0m312 0h0m-45 157h0m75 -58h0m-28 8h0m-183 112h0m3 -106h0m10 -229h0m-61 283h0m38 -166h0m-116 19h0m110 58h0m-79 27h0m273 -120h0m30 108h0m-148 -1h0m-174 21h0m309 -122h0m-317 6h0m201 105h0m12 -100h0m123 82h0m-287 -114h0m-27 141h0m265 58h0m-291 -87h0m342 34h0m-117 -201h0m75 179h0m-78 -89h0m-4 11h0m12 195h0m-209 -48h0m4 0h0m274 -86h0m-187 -6h0m-10 139h0m94 -170h0m-46 52h0m-153 -39h0m144 -140h0m-112 188h0m113 -101h0m-7 216h0m-81 -39h0m240 -212h0m-87 65h0m0 200h0m-80 -44h0m-60 -267h0m50 90h0m-24 83h0m50 111h0m-120 -167h0m37 143h0m91 -181h0m-158 106h0m224 -9h0m-158 -132h0m215 177h0m-222 -123h0m106 43h0m168 -35h0m-37 -26h0m-19 -44h0m-127 -62h0m113 289h0m46 -183h0m-109 -93h0m-158 174h0m104 110h0m145 -190h0m-281 84h0m137 -37h0m-102 -32h0m298 17h0m-294 -28h0m24 -77h0m76 -29h0m-125 131h0m283 68h0m-93 -108h0m-67 183h0m-29 -263h0m106 305h0m21 -130h0m26 -173h0m-189 264h0m-71 -11h0m304 -98h0m-198 -168h0m-11 314h0m-95 -108h0m212 -31h0m92 -80h0m-119 15h0m16 31h0m-92 45h0m157 93h0m17 -3h0m-168 -147h0m31 37h0m-99 -142h0m137 -8h0m-171 158h0m316 -46h0m-218 71h0m189 -155h0m-309 80h0m298 -10h0m-70 2h0m-95 209h0m2 -153h0m72 160h0m15 -5h0m-99 -155h0m71 -72h0m111 104h0m-282 -108h0m189 191h0m-70 -79h0m55 -39h0m-106 -127h0m103 162h0m18 132h0m-8 -354h0m68 300h0m-269 -101h0m117 7h0m24 17h0m-132 2h0m49 80h0m89 -109h0m-30 136h0m-114 -202h0m297 -82h0m-8 23h0m-160 233h0m27 -106h0m-42 -190h0m151 31h0m50 153h0m-204 22h0m23 -177h0m185 148h0m-246 90h0m225 -75h0m-240 103h0m283 -163h0m-38 8h0m35 78h0m-122 -188h0m-22 304h0m-9 -139h0m-68 -168h0m128 222h0m51 14h0m-2 -136h0m-222 150h0m125 -136h0m-23 -25h0m90 -72h0m-227 159h0m-37 -87h0m293 153h0m-146 -78h0m175 -89h0m-76 -39h0m-168 -27h0m93 150h0m90 94h0m-58 19h0m2 -1h0m-216 -95h0m50 51h0m75 -67h0m87 145h0m-151 -35h0m96 7h0m79 -5h0m-146 -11h0m118 -141h0m-98 143h0m-63 -160h0m178 -103h0m-133 23h0m128 -23h0m-65 188h0m-113 -198h0m41 240h0m148 -106h0m93 35h0m-124 25h0m-44 -25h0m-87 69h0m211 32h0m-248 -183h0m163 38h0m-156 37h0m84 37h0m12 -105h0m-80 -46h0m250 222h0m-183 40h0m5 -37h0m187 -71h0m-182 78h0m-75 -4h0m170 -105h0m-97 -83h0m182 182h0m-223 -229h0m109 87h0m45 181h0m-54 -298h0m73 263h0m-69 -280h0m112 260h0m-282 -164h0m176 98h0m-172 -106h0m94 223h0m-58 -249h0m88 272h0m-69 -76h0m59 -52h0m-98 49h0m81 -237h0m-83 203h0m-16 -129h0m97 -105h0m-136 219h0m154 -105h0m-4 33h0m-118 74h0m326 -15h0m-217 -66h0m-120 3h0m45 -14h0m75 80h0m190 9h0m-32 -148h0m-181 -4h0m93 -68h0m103 35h0m-66 272h0m-163 -267h0m82 271h0m-68 -252h0m-44 137h0m44 80h0m-73 -155h0m199 175h0m-75 -148h0m86 -42h0m-101 204h0m171 -231h0m-249 -38h0m256 -2h0m-79 -7h0m-174 197h0m287 -120h0m-124 6h0m31 218h0m-233 -119h0m33 81h0m273 -96h0m-37 64h0m-82 -113h0m-124 152h0m49 -260h0m-99 197h0m186 58h0m-5 -156h0m122 83h0m-295 -2h0m41 72h0m12 -22h0m1 32h0m90 -82h0m169 -6h0m-66 70h0m-162 -281h0m100 298h0m86 -173h0m-179 -115h0m185 61h0m-218 -26h0m-54 125h0m11 -112h0m99 49h0m201 120h0m-19 -88h0m-202 50h0m73 19h0m72 -164h0m-1 227h0m-17 -1h0m57 -141h0m-269 55h0m240 73h0m32 -116h0m-82 -6h0m-197 -29h0m295 117h0m-97 -12h0m-111 -202h0m38 181h0m38 -57h0m87 -66h0m-238 66h0m188 68h0m117 17h0m-202 75h0m-109 -160h0m196 189h0m-185 -119h0m-43 -88h0m63 173h0m-22 -31h0m-4 -213h0m186 96h0m-66 73h0m32 -214h0m-39 26h0m193 160h0m-331 -45h0m221 -127h0m-119 192h0m118 -24h0m-165 69h0m160 50h0m-211 -84h0m326 -85h0m-329 88h0m261 -193h0m-149 185h0m197 -105h0m-133 -87h0m16 278h0m-143 -42h0m124 -72h0m-43 -76h0m63 38h0m-10 150h0m22 -298h0m-99 204h0m7 13h0m4 -223h0m-49 56h0m61 -23h0m10 -2h0m50 310h0m-201 -137h0m322 -46h0m-280 127h0m103 54h0m2 -316h0m-141 179h0m105 105h0m105 -188h0m-81 233h0m20 -221h0m79 10h0m109 3h0m-145 -104h0m2 148h0m-178 42h0m122 102h0m73 18h0m60 -309h0m-10 24h0m-271 67h0m208 99h0m-128 60h0m76 -78h0m74 -208h0m-114 329h0m41 -127h0m-144 -66h0m39 62h0m144 -70h0m34 183h0m4 -291h0m-40 179h0m-44 131h0m169 -221h0m23 97h0m-66 44h0m31 -175h0m-173 -80h0m-13 140h0m35 17h0m-37 187h0m108 -12h0m34 -265h0m-46 124h0m-165 69h0m-49 -47h0m49 9h0m-43 -120h0m5 7h0m187 79h0m-136 117h0m138 -182h0m-152 160h0m164 -284h0m-7 222h0m63 -175h0m-48 141h0m114 12h0m-198 -40h0m25 -30h0m-57 -102h0m243 87h0m-336 34h0m288 -105h0m-55 77h0m-19 215h0m-103 -193h0m-10 -103h0m45 286h0m136 -31h0m29 -179h0m-4 0h0m-168 34h0m117 126h0m51 -125h0m19 44h0m-245 96h0m192 -25h0m18 -117h0m-93 78h0m142 -15h0m-307 -150h0m189 159h0m-65 103h0m30 -302h0m1 132h0m34 176h0m-200 -265h0m271 64h0m-30 138h0m-212 -5h0m123 -30h0m-46 -77h0m76 152h0m20 -106h0m-37 138h0m-42 -213h0m-34 182h0m-90 -162h0m190 -104h0m-76 293h0m-15 -185h0m-50 -76h0m-37 59h0m2 156h0m8 -166h0m154 185h0m-130 -2h0m147 -297h0m-51 202h0m-14 -97h0m50 70h0m-51 -145h0m73 -24h0m-191 199h0m261 -134h0m-82 -75h0m-99 203h0m83 -216h0m-87 34h0m82 9h0m-52 303h0m-36 -15h0m-88 -136h0m247 -114h0m-152 -57h0m-85 271h0m228 -12h0m22 23h0m-62 11h0m-19 -127h0m-46 17h0m68 -50h0m-223 -21h0m43 -73h0m-27 139h0m104 23h0m26 6h0m-139 -12h0m214 -213h0m-95 158h0m83 -151h0m-62 147h0m-25 -18h0m190 136h0m-120 -135h0m-139 54h0m174 34h0m-10 -72h0m-139 -93h0m130 -12h0m-131 248h0m232 -76h0m-264 -6h0m171 -26h0m-209 30h0m288 83h0m33 -72h0m-97 95h0m-217 -208h0m180 104h0m-116 -148h0m126 154h0m-21 -205h0m33 139h0m-81 144h0m8 -121h0m6 148h0m195 -114h0m-191 -5h0m138 45h0m-229 43h0m-22 -87h0m243 52h0m-243 -63h0m4 71h0m264 -152h0m-258 6h0m-45 10h0m131 16h0m14 -123h0m-23 -21h0m91 180h0m-206 44h0m54 -148h0m90 -60h0m77 305h0m80 -152h0m-45 109h0m-42 29h0m-78 17h0m96 -314h0m84 211h0m-184 -1h0m78 -186h0m-141 34h0m-39 158h0m51 -180h0m176 217h0m-86 -233h0m-145 190h0m22 83h0m98 8h0m-72 -256h0m185 234h0m-143 45h0m139 -39h0m-256 -184h0m258 159h0m-138 -241h0m55 297h0m120 -287h0m22 118h0m-13 71h0m31 -114h0m-134 -3h0m-75 233h0m63 -319h0m25 169h0m-100 -195h0m27 137h0m80 -22h0m-198 1h0m178 185h0m30 -151h0m-212 -46h0m89 48h0m26 -56h0m188 55h0m-249 114h0m36 -58h0m173 97h0m-80 -10h0m51 -253h0m74 95h0m-208 163h0m210 -182h0m-122 215h0m80 -100h0m-24 -161h0m25 -9h0m18 162h0m-11 -82h0m-286 28h0m62 -121h0m-80 162h0m47 -162h0m70 258h0m108 -76h0m5 101h0m-224 -112h0m183 -173h0m-63 69h0m-85 8h0m160 -17h0m85 -36h0m-89 238h0m15 -203h0m62 152h0m-45 -243h0m-79 200h0m-107 -168h0m-13 190h0m199 -129h0m-178 180h0m64 41h0m-35 -262h0m220 -23h0m-266 -3h0m115 -24h0m-73 59h0m252 67h0m-113 157h0m-149 -226h0m80 -67h0m-5 176h0m194 -64h0m-141 -10h0m6 40h0m75 -124h0m-197 19h0m-18 33h0m265 30h0m-278 117h0m67 98h0m145 -85h0m71 -92h0m-178 190h0m71 -307h0m-2 -36h0m17 208h0m69 -69h0m-175 205h0m-17 -19h0m194 -125h0m-102 -11h0m-72 -28h0m193 73h0m-202 -5h0m-112 2h0m23 -103h0m-31 1h0m41 -52h0m-34 41h0m207 -70h0m74 254h0m-150 14h0m67 -15h0m-106 -168h0m40 -126h0m41 328h0m-147 -202h0m172 -85h0m-212 177h0m290 92h0m-176 0h0m115 -112h0m0 126h0m-131 -292h0m95 174h0m-162 17h0m270 -176h0m-26 28h0m-86 248h0m-31 -8h0m116 -57h0m1 -175h0m-48 116h0m-93 19h0m-99 -105h0m201 -104h0m-9 183h0m-34 -52h0m-76 59h0m-106 23h0m217 -103h0m-185 13h0m-2 -8h0m42 138h0m83 -243h0m-45 125h0m107 -147h0m-186 44h0m93 -41h0m-115 85h0m37 207h0m94 -259h0m-19 -35h0m46 305h0m55 18h0m86 -89h0m-296 0h0m185 -193h0m28 170h0m-87 -191h0m-107 41h0m36 -4h0m168 -33h0m-227 170h0m135 20h0m-139 -30h0m95 -50h0m239 -4h0m-159 56h0m15 52h0m-68 -193h0m-89 -3h0m68 298h0m-62 -259h0m143 -59h0m30 18h0m43 251h0m-130 -178h0m83 103h0m-106 107h0m-48 -289h0m272 99h0m-90 182h0m-133 -306h0m117 193h0m-201 23h0m5 -30h0m267 -173h0m-305 92h0m197 211h0m-75 -18h0m-43 -44h0m227 -146h0m-272 85h0m114 -184h0m89 317h0m-6 -206h0m46 166h0m29 -166h0m-159 -131h0m77 344h0m-101 -342h0m-63 260h0m150 79h0m-197 -116h0m209 -6h0m-146 -158h0m118 157h0m34 -191h0m-18 315h0m-172 -134h0m309 -2h0m-266 85h0m158 50h0m-11 -315h0m-209 86h0m300 51h0m-13 50h0m-306 -4h0m346 -97h0m-236 -94h0m-52 241h0m206 -196h0m58 175h0m-318 -111h0m134 33h0m-134 60h0m137 -182h0m-68 227h0m62 73h0m10 -148h0m-114 47h0m185 62h0m-88 -253h0m151 269h0m-138 -157h0m142 -80h0m-93 -38h0m-42 86h0m-73 -86h0m-47 156h0m260 -151h0m-149 -50h0m4 13h0m60 146h0m-9 -33h0m-153 184h0m219 -44h0m-244 -34h0m125 -1h0m196 -3h0m-124 5h0m-188 -118h0m250 -68h0m-155 -33h0m-95 219h0m98 -111h0m172 -41h0m-84 -78h0m113 198h0m-220 145h0m22 -224h0m103 97h0m-111 87h0m23 -118h0m90 -171h0m62 249h0m-249 -40h0m224 -152h0m-65 122h0m-49 -85h0m73 -93h0m-4 29h0m128 89h0m3 13h0m-46 -37h0m-105 10h0m-161 -67h0m-2 77h0m260 -80h0m-179 263h0m42 -77h0m-87 54h0m-40 -168h0m188 26h0m-106 -19h0m67 10h0m-107 -83h0m259 63h0m-186 -95h0m152 43h0m-253 -31h0m246 246h0m21 -167h0m-169 37h0m-130 -1h0m133 -132h0m188 195h0m-50 -107h0m-213 -34h0m215 5h0m-171 235h0m106 -120h0m-221 -60h0m228 190h0m72 -198h0m-274 -12h0m285 118h0m-17 52h0m10 -48h0m-113 -218h0m-180 98h0m25 6h0m96 -113h0m-20 195h0m29 -50h0m-100 118h0m159 -91h0m-156 -100h0m291 54h0m-147 -110h0m4 292h0m143 -100h0m-206 93h0m145 -262h0m-5 1h0m-83 -21h0m-38 133h0m-8 10h0m-137 -66h0m182 134h0m5 -88h0m135 49h0m20 23h0m-237 -19h0m25 -90h0m172 31h0m-83 -33h0m-232 113h0m329 32h0m-284 -141h0m106 37h0m201 66h0m-300 46h0m113 -266h0m73 3h0m-204 234h0m168 -112h0m-200 4h0m301 157h0m-136 -254h0m-54 7h0m-92 192h0m70 60h0m57 22h0m134 -263h0m16 222h0m-208 -8h0m63 83h0m-111 -228h0m2 38h0m-20 75h0m254 31h0m-151 -59h0m-9 9h0m105 127h0m-105 -21h0m9 -169h0m184 -13h0m-308 -3h0m126 17h0m-12 -11h0m135 126h0m-229 -68h0m172 -39h0m-181 -6h0m183 167h0m-83 -203h0m-2 87h0m-67 29h0m5 -164h0m78 99h0m108 -119h0m-185 228h0m173 23h0m123 -156h0m-287 158h0m194 34h0m-127 -294h0m111 295h0m-49 -135h0m-25 126h0m-43 -211h0m-37 -53h0m243 169h0m-318 -21h0m118 -59h0m157 -106h0m-272 179h0m24 -32h0m91 9h0m19 -161h0m4 304h0m135 -259h0m-163 255h0m-80 -208h0m112 198h0m76 -102h0m-154 68h0m134 -294h0m14 300h0m-171 -228h0m251 58h0m-246 168h0m-52 -166h0m324 -21h0m-1 36h0m-192 -108h0m166 164h0m6 0h0m-263 31h0m175 104h0m-140 -261h0m-66 37h0m298 188h0m-82 -160h0m-208 96h0m58 -186h0m142 66h0m31 174h0m58 -168h0m-20 -85h0m-214 37h0m-36 -13h0m199 -51h0m-113 183h0m-91 36h0m46 -166h0m-28 237h0m196 12h0m-81 -192h0m-128 -50h0m11 -30h0m75 301h0m174 -203h0m-86 160h0m-64 -155h0m-29 153h0m-75 -30h0m7 -196h0m-27 120h0m0 -46h0m303 88h0m-18 -110h0m-302 100h0m115 -8h0m95 -25h0m-100 7h0m108 -56h0m-9 -24h0m18 178h0m-129 -75h0m254 -87h0m-328 106h0m180 -202h0m-45 268h0m102 -257h0m33 256h0m49 -89h0m-13 8h0m-75 55h0m-244 -130h0m209 -106h0m-18 71h0m-16 48h0m141 -7h0m-296 30h0m37 -136h0m-13 217h0m60 -65h0m-115 14h0m32 35h0m269 -134h0m-98 -76h0m80 261h0m-155 -142h0m59 -15h0m-148 -67h0m88 151h0m-14 -198h0m-57 9h0m55 170h0m35 -93h0m-108 -60h0m100 60h0m-19 190h0m31 -105h0m-18 -14h0m70 4h0m69 76h0m-112 -40h0m-127 -117h0m126 -106h0m154 227h0m-325 -26h0m136 101h0m93 -153h0m99 42h0m-79 142h0m-197 -75h0m-17 -67h0m179 -32h0m105 -50h0m3 37h0m-79 178h0m-86 -6h0m-25 -315h0m-89 209h0m237 84h0m-153 34h0m-126 -119h0m35 -64h0m47 -87h0m-6 258h0m237 -187h0m-202 10h0m162 143h0m-178 5h0m110 -250h0m-61 298h0m-17 2h0m-11 -319h0m-99 92h0m114 -109h0m24 2h0m-2 18h0m129 12h0m-47 96h0m-102 166h0m20 -110h0m-17 157h0m16 -27h0m75 -119h0m130 -49h0m-168 64h0m-139 -64h0m76 66h0m30 125h0m185 -141h0m-251 -150h0m36 -45h0m10 111h0m151 134h0m50 -138h0m-38 147h0m-71 -69h0m-106 99h0m165 -255h0m-264 160h0m175 14h0m-82 -173h0m86 187h0m-81 -8h0m107 -94h0m8 219h0m79 -103h0m24 -97h0m-27 65h0m-51 -158h0m39 23h0m-196 221h0m251 -144h0m-51 -14h0m-151 167h0m88 -84h0m-71 -30h0m31 -44h0m-47 -124h0m50 278h0m-63 -108h0m21 119h0m186 -85h0m-297 74h0m312 -147h0m-334 -47h0m193 17h0m-94 79h0m6 141h0m92 -333h0m102 187h0m-246 -127h0m48 130h0m10 -24h0m-100 28h0m106 143h0m48 -206h0m-56 45h0m174 -78h0m1 166h0m-99 -160h0m-89 87h0m147 -147h0m-204 29h0m-19 -13h0m148 71h0m-72 81h0m150 -168h0m-79 -6h0m-195 143h0m116 134h0m35 -136h0m84 24h0m-170 87h0m258 -105h0m-217 -55h0m43 -22h0m195 5h0m-79 163h0m-237 -97h0m205 5h0m79 -69h0m-267 -54h0m229 -18h0m-82 260h0m-78 28h0m-101 -222h0m36 -55h0m177 -53h0m-29 194h0m13 44h0m14 101h0m-146 -53h0m41 -284h0m150 38h0m-37 132h0m-67 -26h0m137 43h0m-94 -8h0m-12 8h0m-147 89h0m289 -140h0m-296 -18h0m232 145h0m-130 62h0m-38 -208h0m11 -109h0m218 95h0m-111 192h0m-168 -56h0m139 -53h0m9 107h0m-197 -159h0m26 52h0m298 48h0m-340 -120h0m216 61h0m-93 -80h0m97 -53h0m109 184h0m-129 -81h0m1 -29h0m95 139h0m-164 -69h0m141 120h0m-111 -164h0m44 0h0m-170 82h0m130 105h0m-37 -198h0m150 -80h0m-2 236h0m60 -142h0m-60 127h0m-138 -55h0m-121 -15h0m80 -142h0m108 69h0m-82 181h0m-25 -251h0m232 47h0m-212 200h0m94 -305h0m-5 295h0m-56 -117h0m-128 -71h0m257 154h0m-222 -206h0m114 -44h0m137 33h0m-9 -15h0m52 72h0m-195 82h0m-21 -38h0m110 -135h0m-6 317h0m8 -290h0m51 257h0m-55 -162h0m-81 188h0m42 -330h0m-33 145h0m57 158h0m-95 -183h0m113 22h0m-135 -111h0m212 210h0m-93 -93h0m-87 9h0m-92 -43h0m194 -106h0m-211 92h0m180 233h0m-10 -207h0m-79 -84h0m15 -40h0m-16 332h0m-84 -191h0m-3 89h0m34 25h0m220 -215h0m-202 249h0m-20 -252h0m103 278h0m56 -11h0m-77 -151h0m-107 -36h0m168 -12h0m-1 205h0m67 -257h0m-243 140h0m196 -45h0m-132 136h0m136 -70h0m-179 -157h0m96 89h0m58 86h0m36 -206h0m-108 191h0m28 -207h0m65 -19h0m-137 282h0m-55 -86h0m172 -31h0m-202 -6h0m203 -1h0m131 39h0m-262 -144h0m272 76h0m-5 100h0m-138 83h0m-6 28h0m-72 -115h0m89 4h0m-179 -129h0m9 30h0m177 -120h0m12 13h0m-67 119h0m-10 76h0m70 93h0m77 -156h0m-96 74h0m-90 -72h0m72 -26h0m-19 90h0m176 -84h0m-163 -122h0m90 285h0m-197 -221h0m65 233h0m-114 -70h0m126 -13h0m36 85h0m57 4h0m-59 -106h0m43 -174h0m-167 51h0m283 144h0m-82 -163h0m-37 -24h0m82 91h0m-97 175h0m4 -146h0m-208 42h0m203 -210h0m98 92h0m-147 139h0m124 -135h0m-92 65h0m110 119h0m19 -75h0m-303 37h0m134 -33h0m1 -84h0m115 187h0m-37 9h0m-123 -106h0m38 -86h0m186 32h0m-20 -34h0m-164 -92h0m135 274h0m-41 39h0m-48 -137h0m-38 -52h0m3 -22h0m85 86h0m-22 20h0m-3 70h0m-214 -160h0m2 -28h0m197 116h0m-55 -217h0m-103 249h0m75 -117h0m-1 4h0m179 -73h0m-276 104h0m26 -110h0m-51 74h0m5 45h0m256 102h0m-62 -169h0m56 162h0m-170 -242h0m63 261h0m67 -193h0m-141 -39h0m54 51h0m12 61h0m169 -123h0m-159 -37h0m-21 14h0m11 190h0m116 -19h0m11 -159h0m-60 61h0m-46 96h0m71 104h0m28 -37h0m-119 29h0m-129 -112h0m210 28h0m-110 -176h0m-37 -1h0m-11 -6h0m273 187h0m-203 -32h0m166 19h0m-96 -176h0m-56 -29h0m-25 24h0m-71 22h0m101 269h0m-142 -167h0m304 35h0m-312 -56h0m183 89h0m147 -118h0m-327 115h0m33 3h0m155 98h0m75 -30h0m-212 -29h0m-12 -172h0m226 157h0m-68 -57h0m-79 114h0m121 20h0m-133 -178h0m-32 116h0m-34 -139h0m5 -52h0m110 138h0m64 9h0m-21 85h0m-84 -280h0m78 104h0m-117 -60h0m119 153h0m-110 -165h0m125 -12h0m-204 104h0m-3 77h0m195 -184h0m-64 79h0m-19 -92h0m81 204h0m-183 -3h0m218 -219h0m-70 211h0m-54 91h0m38 -282h0m-7 -31h0m-63 74h0m246 123h0m-103 -197h0m84 121h0m-290 80h0m27 24h0m242 -182h0m-94 158h0m-155 -79h0m16 147h0m-14 9h0m-24 -85h0m294 -68h0m-295 74h0m192 -85h0m65 143h0m-42 -108h0m79 83h0m-112 -210h0m35 -8h0m-19 38h0m-75 178h0m4 -1h0m-104 6h0m10 -91h0m239 -57h0m-163 121h0m107 102h0m-109 -122h0m78 -157h0m95 48h0m-62 -71h0m-29 323h0m-82 7h0m-88 -107h0m310 -9h0m-168 -36h0m61 -170h0m-107 133h0m216 -17h0m-335 10h0m121 8h0m177 -30h0m-190 197h0m80 -121h0m41 35h0m46 -184h0m-53 257h0m-215 -116h0m178 41h0m-122 88h0m44 -299h0m194 91h0m-273 41h0m293 47h0m-179 -178h0m-67 258h0m-1 -213h0m-83 73h0m199 83h0m-117 74h0m35 -285h0m-67 43h0m302 72h0m-260 173h0m186 -221h0m44 116h0m-268 -118h0m290 122h0m-263 70h0m113 -236h0m-45 289h0m66 -11h0m89 -100h0m-149 -82h0m153 173h0m-88 -104h0m-82 -2h0m57 -187h0m35 305h0m-18 -2h0m-215 -165h0m270 -82h0m-103 124h0m48 -146h0m10 -34h0m-179 128h0m99 20h0m-69 114h0m213 -222h0m20 241h0m26 -91h0m-60 75h0m-75 67h0m-117 -88h0m-69 -28h0m187 -93h0m-136 171h0m88 -58h0m-3 93h0m-95 -39h0m147 -67h0m24 1h0m-20 -189h0m26 -30h0m41 270h0m-221 -17h0m165 34h0m5 -260h0m-175 74h0m157 -95h0m-205 102h0m240 203h0m-8 -194h0m-76 -21h0m-10 84h0m14 -63h0m-24 -86h0m71 183h0m12 118h0m-17 -310h0m116 122h0m-6 -41h0m-231 -41h0m196 239h0m-119 -163h0m0 194h0m-23 -340h0m112 296h0m-121 -263h0m15 306h0m59 -138h0m94 103h0m-177 -290h0m-36 34h0m119 250h0m126 -198h0m-270 193h0m-12 -169h0m182 221h0m-105 -26h0m-9 -300h0m3 6h0m-55 270h0m212 -204h0m73 21h0m-226 -66h0m193 91h0m24 12h0m-31 141h0m-164 -245h0m-106 13h0m241 232h0m-92 -79h0m172 -85h0m-42 28h0m-179 -112h0m-98 147h0m274 27h0m-22 -71h0m-58 -20h0m-175 91h0m-22 -107h0m198 103h0m80 69h0m-224 -213h0m167 11h0m-210 -12h0m179 153h0m124 0h0m-50 -184h0m2 96h0m-183 197h0m41 -186h0m-119 -27h0m87 18h0m138 -67h0m-178 223h0m208 -248h0m35 111h0m-168 51h0m127 56h0m-218 38h0m59 -100h0m-41 79h0m-65 -170h0m249 172h0m-61 18h0m95 -87h0m-76 -14h0m-143 87h0m-38 -173h0m258 183h0m-74 -158h0m-135 163h0m139 14h0m-14 -6h0m86 -243h0m-261 -18h0m272 99h0m-271 145h0m292 -64h0m-256 55h0m-34 -129h0m224 106h0m-251 -23h0m139 108h0m-79 -278h0m254 165h0m-285 -177h0m284 126h0m-197 -177h0m148 82h0m34 30h0m-250 -34h0m-43 16h0m17 189h0m100 -95h0m70 147h0m-7 -219h0m-6 208h0m28 -15h0m-108 -280h0m111 299h0m-237 -102h0m240 -209h0m-87 206h0m11 -101h0m135 -48h0m-239 191h0m173 -106h0m-102 39h0m147 -133h0m-253 159h0m103 66h0m-84 -194h0m197 33h0m25 154h0m-25 -264h0m45 247h0m-74 69h0m101 -200h0m-150 55h0m-36 -192h0m75 209h0m-76 107h0m146 -36h0m-35 -71h0m-167 -180h0m73 210h0m-89 -186h0m88 247h0m78 -65h0m-145 -158h0m-18 116h0m253 -107h0m-178 -50h0m212 150h0m-52 76h0m-187 28h0m-36 -252h0m206 265h0m-238 -196h0m43 191h0m88 -263h0m-162 86h0m147 101h0m-61 -165h0m137 55h0m-58 116h0m31 -98h0m-39 203h0m-18 -176h0m-4 186h0m-92 -122h0m181 -99h0m120 10h0m-112 -104h0m-111 297h0m17 -173h0m142 145h0m-84 -82h0m-148 1h0m101 -181h0m-23 7h0m116 -31h0m-84 122h0m149 -17h0m-109 32h0m37 54h0m-179 -4h0m91 -188h0m76 231h0m124 -91h0m-151 -137h0m-72 -6h0m154 261h0m-221 -231h0m-44 104h0m221 66h0m56 -162h0m-75 304h0m-217 -131h0m209 -102h0m-42 91h0m-123 -80h0m105 96h0m-102 67h0m288 -178h0m-24 26h0m-3 87h0m-80 -193h0m-99 -41h0m144 305h0m-196 -217h0m-69 59h0m21 92h0m180 -192h0m117 158h0m-287 66h0m113 36h0m-10 -75h0m63 -223h0m-52 324h0m134 -25h0m-207 -254h0m221 2h0m-235 43h0m-50 85h0m118 -182h0m210 140h0m-36 64h0m23 -13h0m-95 -137h0m-210 146h0m101 25h0m-100 -69h0m176 -29h0m95 -46h0m-273 39h0m205 -109h0m-86 115h0m65 224h0m-163 -53h0m-51 -175h0m247 -117h0m68 129h0m-185 209h0m224 -141h0m-287 -117h0m133 242h0m8 -297h0m0 11h0m-60 5h0m-23 291h0m99 -164h0m59 140h0m-180 -243h0m109 -60h0m105 279h0m-273 -135h0m273 58h0m-36 64h0m-133 -233h0m-90 236h0m135 49h0m95 -235h0m-135 250h0m-87 -261h0m253 61h0m-76 -107h0m-85 297h0m83 -207h0m-77 75h0m-138 -39h0m-9 -20h0m291 84h0m-150 88h0m-33 34h0m171 -265h0m-208 198h0m-71 -158h0m68 156h0m-35 -137h0m91 -23h0m-92 99h0m194 112h0m-227 -191h0m302 11h0m-237 151h0m92 -105h0m-11 -71h0m152 -5h0m-173 -114h0m-32 204h0m93 8h0m131 -47h0m-309 -17h0m329 -37h0m-214 -124h0m-73 93h0m162 -75h0m123 226h0m-221 64h0m181 -247h0m-130 149h0m164 3h0m-193 -201h0m62 34h0m-72 6h0m187 69h0m-123 110h0m89 48h0m-208 5h0m225 -165h0m-79 43h0m-114 -160h0m-74 210h0m270 13h0m20 -37h0m-102 174h0m-83 -183h0m48 -47h0m138 28h0m-121 160h0m-4 -186h0m3 221h0m-70 -119h0m47 -72h0m103 -107h0m17 261h0m-91 50h0m-42 -28h0m136 -24h0m-9 -178h0m-169 37h0m-4 145h0m26 -151h0m-59 -74h0m260 155h0m-292 -6h0m77 -39h0m-8 147h0m-55 -262h0m47 -67h0m-33 267h0m131 -163h0m11 109h0m-116 -90h0m-37 163h0m133 -111h0m0 45h0m-209 -6h0m130 65h0m171 2h0m-7 -216h0m-4 17h0m-211 -13h0m62 261h0m1 -151h0m158 109h0m-252 -7h0m-31 -145h0m24 -43h0m282 6h0m-244 -37h0m240 42h0m-271 99h0m120 -87h0m142 98h0m-129 -7h0m-154 -26h0m18 -114h0m182 140h0m74 62h0m-210 -202h0m146 237h0m-29 -264h0m-97 147h0m54 -179h0m-104 28h0m207 249h0m-257 -74h0m5 7h0m21 -162h0m86 282h0m-15 -318h0m202 192h0m-158 -35h0m-30 -69h0m-2 -85h0m124 71h0m-162 -32h0m78 51h0m146 68h0m-150 -167h0m-145 174h0m40 -124h0m288 154h0m-289 -171h0m119 151h0m52 97h0m-216 -100h0m150 108h0m-103 -237h0m-18 123h0m161 -183h0m-79 -7h0m-2 105h0m-67 106h0m88 -62h0m-126 26h0m277 -104h0m-236 195h0m193 -250h0m-21 313h0m-99 -34h0m228 -168h0m-334 12h0m98 -115h0m32 190h0m170 -117h0m8 57h0m-319 -10h0m237 158h0m66 -109h0m-313 -78h0m225 110h0m-160 27h0m171 -102h0m65 -72h0m-11 174h0m-13 10h0m-44 -132h0m-72 62h0m-15 25h0m77 82h0m-83 -200h0m170 176h0m-169 -59h0m-127 -10h0m107 106h0m120 18h0m105 -215h0m-257 150h0m256 -48h0m-112 84h0m-10 -128h0m-26 25h0m-110 -142h0m253 172h0m-182 -223h0m-9 139h0m84 -25h0m-119 -5h0m-62 159h0m298 -174h0m-185 50h0m-118 138h0m281 -108h0m-185 158h0m91 -336h0m-106 152h0m184 -30h0m-245 135h0m165 -255h0m-78 5h0m169 216h0m-264 17h0m9 15h0m-33 -116h0m93 -16h0m25 62h0m127 -148h0m-50 111h0m-106 191h0m14 -157h0m-57 -147h0m208 219h0m-208 40h0m121 3h0m-137 -4h0m171 19h0m-1 -120h0m-6 -74h0m-89 212h0m94 -325h0m-218 209h0m141 0h0m-13 71h0m64 -178h0m17 7h0m-216 15h0m-11 -15h0m326 170h0m-293 -179h0m238 -35h0m73 31h0m-250 -35h0m38 71h0m79 3h0m69 146h0m-72 12h0m93 -39h0m13 3h0m-106 -122h0m71 -101h0m-50 7h0m125 138h0m-84 -148h0m-72 160h0m-132 101h0m147 -74h0m-25 -16h0m-25 -186h0m52 -29h0m-8 325h0m-184 -131h0m284 -146h0m-112 152h0m116 92h0m-152 -70h0m-30 -95h0m-114 76h0m144 123h0m187 -203h0m-4 18h0m-247 -81h0m28 169h0m-88 -39h0m107 33h0m152 -184h0m-163 87h0m-111 -10h0m42 177h0m-49 -165h0m127 60h0m180 34h0m-101 1h0m-155 -192h0m154 156h0m-81 -185h0m-91 132h0m101 28h0m203 -26h0m-35 171h0m-85 -183h0m-182 81h0m225 68h0m74 -57h0m-135 -99h0m-173 35h0m119 168h0m179 -172h0m-198 73h0m59 -77h0m150 74h0m-63 -174h0m-200 32h0m-35 151h0m234 -149h0m11 221h0m-95 16h0m-107 -271h0m69 76h0m138 -74h0m-161 259h0m-94 -192h0m166 -126h0m66 85h0m-138 -73h0m52 225h0m168 -80h0m-345 68h0m304 -66h0m-108 -113h0m-87 104h0m43 189h0m68 -290h0m74 47h0m-262 120h0m318 -73h0m-346 -11h0m293 17h0m-270 -93h0m234 216h0m69 -62h0m-206 148h0m62 -322h0m-46 123h0m-145 -7h0m288 -93h0m-23 9h0m-153 269h0m181 -94h0m51 -36h0m-272 -148h0m-29 172h0m233 47h0m-57 -79h0m75 74h0m-176 -249h0m112 -15h0m57 265h0m-79 -148h0m-138 -70h0m230 227h0m-245 24h0m62 -268h0m114 9h0m-219 194h0m31 4h0m299 -102h0m-31 179h0m-90 -94h0m-190 -69h0m195 165h0m72 -208h0m-163 82h0m203 6h0m-300 21h0m181 -18h0m-115 136h0m-69 -136h0m173 -86h0m10 37h0m-1 -33h0m-59 -109h0m58 116h0m-110 -1h0m193 155h0m-263 -116h0m166 -161h0m108 240h0m-303 -30h0m289 89h0m-268 -50h0m193 -100h0m53 -110h0m-11 252h0m73 -98h0m-119 -187h0m-175 270h0m253 27h0m-99 -85h0m-39 -68h0m-87 -51h0m223 166h0m-188 -49h0m82 -70h0m-182 -21h0m1 -6h0m289 175h0m-148 -175h0m88 209h0m-197 -288h0m120 156h0m-125 6h0m122 -64h0m-19 52h0m74 -70h0m-87 -82h0m71 6h0m-73 -37h0m-74 292h0m-10 -163h0m80 -120h0m195 102h0m-11 158h0m-72 -225h0m-38 72h0m-55 36h0m-72 -115h0m225 46h0m-236 -44h0m100 -37h0m102 49h0m-141 263h0m32 -17h0m3 -155h0m144 -98h0m-155 104h0m95 -32h0m-82 27h0m-3 13h0m-4 -8h0m50 66h0m35 -205h0m-111 112h0m224 84h0m-294 -4h0m97 -91h0m-32 38h0m32 -33h0m61 66h0m-68 -199h0m165 138h0m-184 173h0m154 -258h0m38 184h0m-271 60h0m105 -170h0m-83 -74h0m164 163h0m-169 56h0m173 37h0m-15 9h0m-84 -113h0m-70 -153h0m267 107h0m-125 6h0m-73 -151h0m-9 144h0m7 -109h0m-1 309h0m98 -215h0m-226 76h0m91 -149h0m30 135h0m-11 122h0m200 -116h0m-40 98h0m-62 -180h0m70 183h0m70 -170h0m-82 166h0m-32 -288h0m-162 38h0m37 162h0m92 -85h0m-80 -83h0m72 287h0m-80 -204h0m-65 0h0m151 191h0m10 -311h0m26 -8h0m-77 137h0m72 8h0m-64 -23h0m59 11h0m-180 17h0m246 2h0m20 -30h0m-90 219h0m7 -323h0m-7 -7h0m-2 111h0m-17 183h0m-1 -269h0m-67 85h0m19 -105h0m-26 332h0m24 -191h0m55 184h0m81 -247h0m8 105h0m-37 -143h0m-230 176h0m16 56h0m171 -165h0m-186 35h0m98 -34h0m102 90h0m92 -94h0m-192 108h0m199 -48h0m-25 -52h0m-108 224h0m-149 -216h0m160 165h0m-62 -262h0m66 199h0m-17 -92h0m27 46h0m-149 117h0m57 -153h0m-54 97h0m-41 -104h0m12 -84h0m255 196h0m-150 -37h0m149 48h0m-214 17h0m38 53h0m219 -136h0m-28 -93h0m-197 -91h0m-40 277h0m-65 -94h0m190 -194h0m87 71h0m-9 7h0m21 -21h0m-285 170h0m213 -97h0m-77 -109h0m124 241h0m-70 79h0m-202 -144h0m40 92h0m178 -299h0m-27 163h0m42 -14h0m105 63h0m-301 -151h0m25 208h0m-20 -120h0m71 3h0m24 -35h0m53 87h0m75 -115h0m-17 229h0m33 -278h0m-60 187h0m-218 -4h0m299 -8h0m8 -153h0m-5 96h0m-164 190h0m6 -329h0m15 195h0m-43 -69h0m-115 -6h0m290 157h0m44 -86h0m-285 58h0m-39 -35h0m-3 -80h0m133 -126h0m183 176h0m-19 -9h0m-300 37h0m36 45h0m31 12h0m158 -259h0m-212 206h0m279 40h0m-209 -204h0m-57 207h0m10 -64h0m-12 -24h0m242 -140h0m-208 219h0m-70 -58h0m149 -190h0m83 305h0m-197 -204h0m103 -112h0m89 133h0m-116 69h0m-75 -68h0m303 -20h0m-117 97h0m-182 -115h0m89 -66h0m-85 37h0m156 230h0m-122 -227h0m116 41h0m-2 -92h0m24 -25h0m-145 79h0m237 -56h0m41 94h0m-224 -112h0m66 310h0m-163 -245h0m31 -23h0m-25 101h0m118 44h0m-71 -124h0m42 60h0m186 0h0m-43 158h0m-47 20h0m-5 -133h0m17 169h0m98 -229h0m-249 -57h0m146 146h0m-101 104h0m75 -185h0m-2 -97h0m36 93h0m-157 -77h0m194 231h0m-209 -228h0m236 27h0m-64 -74h0m-4 326h0m-110 -107h0m-6 -213h0m24 149h0m93 143h0m35 -31h0m-225 -127h0m39 165h0m194 -31h0m-134 -232h0m10 114h0m-140 49h0m221 104h0m-10 -150h0m-85 69h0m95 -202h0m-29 209h0m-39 98h0m-39 -113h0m61 -16h0m-151 74h0m289 -158h0m-288 116h0m63 -213h0m19 194h0m33 104h0m41 -194h0m104 10h0m-149 179h0m-140 -191h0m280 181h0m-281 -103h0m1 8h0m165 3h0m-137 -59h0m-2 -5h0m-10 46h0m175 -68h0m108 -54h0m-307 45h0m286 150h0m-129 -138h0m71 -119h0m-107 -5h0m87 39h0m-77 261h0m-142 -105h0m48 -80h0m122 93h0m-78 -144h0m58 169h0m162 -96h0m-72 -103h0m45 232h0m7 -236h0m-50 90h0m-106 -81h0m183 114h0m-7 118h0m-143 -134h0m67 58h0m38 -148h0m-266 136h0m198 -42h0m-55 -108h0m-17 155h0m-7 -2h0m182 82h0m-65 39h0m14 -291h0m23 44h0m-122 132h0m-17 -156h0m-20 293h0m92 -221h0m-120 157h0m-92 -137h0m308 -27h0m-279 90h0m24 -8h0m107 -147h0m147 226h0m-273 -75h0m-34 20h0m231 128h0m-137 -286h0m8 235h0m22 45h0m-34 -280h0m145 101h0m42 -83h0m41 74h0m-151 182h0m-6 -305h0m16 123h0m47 79h0m-53 -92h0m-122 -3h0m103 23h0m-15 -114h0m-59 229h0m216 -223h0m-226 185h0m99 -216h0m122 29h0m30 80h0m-83 84h0m-185 -138h0m253 6h0m-250 200h0m-26 -46h0m195 -184h0m55 17h0m-107 258h0m12 -304h0m-34 96h0m-3 79h0m-29 104h0m230 -174h0m-76 157h0m90 -146h0m-208 21h0m8 -126h0m52 279h0m-4 -18h0m-115 11h0m121 -262h0m-3 157h0m-82 -177h0m82 25h0m-78 -33h0m-67 38h0m268 183h0m-106 79h0m-199 -159h0m102 9h0m193 42h0m-170 -86h0m-57 166h0m-18 -12h0m64 -150h0m-131 82h0m130 139h0m174 -245h0m-94 131h0m127 -4h0m-34 -109h0m-171 229h0m-45 -257h0m114 254h0m-58 -216h0m181 35h0m-179 153h0m-101 -265h0m273 151h0m-134 16h0m2 124h0m43 -5h0m-177 -28h0m88 -67h0m199 -45h0m-211 37h0m-6 -103h0m109 199h0m86 -209h0m-273 19h0m298 88h0m-261 46h0m227 -41h0m-36 -143h0m-61 -79h0m-99 141h0m-105 75h0m296 -83h0m-217 131h0m196 -179h0m-131 -77h0m180 135h0m-67 -116h0m-118 -24h0m7 12h0m-78 55h0m-3 189h0m163 67h0m-233 -116h0m202 130h0m-103 -27h0m105 -128h0m-92 -53h0m13 -132h0m111 123h0m25 -81h0m-75 -4h0m-156 144h0m150 38h0m87 71h0m-264 -97h0m138 -166h0m85 291h0m-111 -13h0m10 -134h0m100 142h0m-110 14h0m181 -47h0m-64 -134h0m-226 3h0m279 152h0m-262 -145h0m320 -30h0m-220 211h0m151 -258h0m5 -50h0m-126 176h0m74 -190h0m22 49h0m56 135h0m-172 99h0m185 -196h0m-37 -63h0m-201 -2h0m-5 24h0m212 201h0m22 -38h0m-251 35h0m3 -224h0m12 234h0m64 -43h0m79 -58h0m-96 -173h0m184 200h0m-196 135h0m47 -309h0m186 102h0m-149 105h0m72 -154h0m35 28h0m-223 -34h0m102 278h0m11 -215h0m4 179h0m-63 -121h0m73 -87h0m104 112h0m-269 9h0m273 -4h0m-228 53h0m61 -239h0m46 99h0m-153 -73h0m-1 129h0m175 -190h0m-14 9h0m112 212h0m-114 102h0m82 -25h0m-274 -174h0m61 180h0m85 -297h0m-140 188h0m93 -199h0m193 45h0m-89 302h0m-196 -236h0m193 193h0m-123 -3h0m119 -75h0m-54 0h0m31 -203h0m-138 277h0m230 -33h0m-34 -248h0m-86 128h0m-145 -26h0m197 221h0m-141 -75h0m-68 -39h0m273 68h0m-133 -259h0m-70 43h0m58 -47h0m208 159h0m-234 86h0m-90 -70h0m25 -42h0m17 125h0m237 9h0m-99 -259h0m120 98h0m-2 -63h0m-289 118h0m164 3h0m82 -145h0m-104 127h0m-113 50h0m168 -44h0m-87 9h0m-83 -110h0m188 -60h0m92 215h0m-126 -39h0m12 -12h0m53 -132h0m36 -8h0m38 97h0m-141 -21h0m-56 184h0m14 18h0m61 -138h0m-3 118h0m67 -6h0m-74 -294h0m18 190h0m111 -76h0m-321 105h0m253 76h0m-70 -89h0m70 -170h0m37 62h0m-205 230h0m145 -8h0m-41 -202h0m-7 68h0m2 -178h0m81 30h0m-124 93h0m61 22h0m-60 -18h0m-64 125h0m253 -52h0m-326 -20h0m291 -125h0m-89 55h0m-111 -100h0m-43 62h0m152 256h0m74 -76h0m-280 -120h0m123 -26h0m178 33h0m-18 101h0m-281 -62h0m101 134h0m-94 -171h0m327 58h0m-190 -6h0m-29 -167h0m199 116h0m-116 191h0m-212 -134h0m198 -190h0m108 284h0m-106 -53h0m144 -131h0m-129 185h0m59 -35h0m-195 -204h0m259 154h0m-28 -69h0m-264 -20h0m154 176h0m-137 -269h0m-47 189h0m290 62h0m-98 -172h0m-64 70h0m-97 -144h0m261 28h0m-192 73h0m23 198h0m56 -96h0m-156 43h0m169 -284h0m-59 292h0m163 -105h0m0 9h0m-124 8h0m-70 -92h0m43 23h0m39 49h0m-10 12h0m41 10h0m-103 -176h0m-7 -29h0m28 109h0m79 96h0m20 -154h0m96 51h0m-304 131h0m97 -84h0m169 126h0m-156 31h0m10 -3h0m37 -159h0m137 44h0m-293 -67h0m233 140h0m73 -120h0m-328 -39h0m281 94h0m-108 0h0m-171 -103h0m268 166h0m-169 -68h0m69 -176h0m-172 93h0m205 114h0m15 -198h0m-84 283h0m-99 -242h0m175 60h0m-22 215h0m113 -111h0m-136 -102h0m50 64h0m-5 -66h0m-178 64h0m-12 23h0m293 -22h0m-322 -54h0m187 -25h0m114 -58h0m-10 151h0m-256 -166h0m90 -3h0m69 294h0m-3 -27h0m13 -189h0m4 -7h0m101 63h0m-54 91h0m-135 -43h0m83 11h0m-15 -36h0m-77 103h0m-10 -180h0m-77 22h0m299 81h0m-291 -20h0m99 -170h0m149 7h0m-142 244h0m-1 -94h0m167 -90h0m-5 117h0m2 -37h0m-64 109h0m13 -244h0m55 184h0m-159 -15h0m153 59h0m-74 51h0m-12 -38h0m120 -90h0m-145 -77h0m-199 93h0m292 -170h0m-137 81h0m83 204h0m-109 -32h0m-121 -182h0m151 -109h0m-124 225h0m36 29h0m206 -218h0m35 191h0m-157 -52h0m-68 -114h0m196 13h0m11 -1h0m-19 190h0m-85 -65h0m-149 22h0m152 -207h0m-102 252h0m217 -200h0m-160 259h0m161 -115h0m-289 -70h0m273 -103h0m-209 273h0m52 -206h0m130 -53h0m-146 264h0m151 -63h0m-120 -139h0m-146 1h0m209 -74h0m108 189h0m-35 64h0m-24 -227h0m-254 63h0m311 21h0m-91 37h0m-83 -155h0m-22 296h0m200 -181h0m-9 -10h0m4 -33h0m-165 34h0m162 147h0m-162 -258h0m156 93h0m-116 -107h0m150 200h0m-329 8h0m283 -190h0m-100 176h0m-77 111h0m108 -119h0m-89 -200h0m92 130h0m-35 193h0m106 -62h0m-163 -111h0m-72 149h0m148 40h0m-65 -223h0m149 -27h0m-68 224h0m100 -163h0m-288 -37h0m257 171h0m-156 -64h0m159 61h0m14 -137h0m-177 39h0m51 28h0m91 89h0m-174 -303h0m121 121h0m112 80h0m-229 -79h0m76 25h0m9 -21h0m-163 66h0m87 42h0m218 -5h0m-69 -164h0m-263 136h0m294 8h0m8 -81h0m4 94h0m-45 46h0m-118 -251h0m112 38h0m-54 130h0m-48 135h0m-143 -124h0m251 -124h0m38 63h0m-24 -51h0m20 178h0m-11 36h0m-9 4h0m-225 -38h0m-4 -222h0m55 88h0m236 90h0m-69 46h0m65 -62h0m-124 22h0m-88 -37h0m-6 -49h0m-10 193h0m-65 -118h0m41 76h0m-37 -241h0m70 143h0m12 -151h0m12 68h0m67 -2h0m-132 202h0m109 -114h0m-103 -144h0m221 201h0m-75 -223h0m48 231h0m-51 -226h0m-181 10h0m108 174h0m-14 87h0m52 -289h0m21 289h0m-103 -84h0m18 84h0m32 -186h0m132 -74h0m-118 85h0m13 204h0m-162 -222h0m4 -19h0m99 22h0m96 84h0m118 -65h0m-230 192h0m155 -45h0m-225 -144h0m93 154h0m92 12h0m-104 -89h0m177 -59h0m-4 -42h0m48 95h0m-79 80h0m-62 -288h0m-166 79h0m42 -20h0m-73 152h0m136 -179h0m39 180h0m12 -66h0m118 37h0m11 -28h0m-207 170h0m157 -252h0m33 -30h0m-12 189h0m-140 -226h0m42 110h0m36 88h0m-225 -63h0m0 51h0m203 -76h0m4 179h0m-81 -134h0m102 -120h0m-36 69h0m124 75h0m-273 -120h0m140 56h0m5 -112h0m9 -9h0m-13 307h0m-73 -280h0m-39 19h0m155 79h0m-108 -86h0m107 -27h0m-133 44h0m15 252h0m177 -271h0m-84 -37h0m-100 262h0m122 -111h0m75 -14h0m-84 -102h0m-84 54h0m-106 69h0m72 -115h0m8 157h0m169 -126h0m-232 -8h0m145 271h0m124 -144h0m-249 108h0m123 -100h0m92 -158h0m34 134h0m14 62h0m-172 -108h0m-126 19h0m-21 -35h0m212 98h0m-206 -106h0m106 20h0m108 -116h0m-239 132h0m267 -71h0m-253 114h0m285 113h0m-91 -119h0m-57 122h0m-117 -152h0m19 -91h0m87 92h0m101 35h0m-227 36h0m2 -101h0m323 26h0m-194 155h0m93 -86h0m-47 -95h0m-100 142h0m141 -147h0m-105 212h0m56 -204h0m-19 -6h0m43 75h0m-154 -144h0m72 80h0m36 197h0m69 -323h0m76 34h0m-17 258h0m-75 8h0m-49 -92h0m64 -178h0m-61 178h0m150 -54h0m-170 183h0m162 -286h0m-182 241h0m3 -167h0m100 11h0m-30 178h0m43 -168h0m-101 74h0m13 -224h0m46 193h0m86 -154h0m-58 -5h0m-74 -50h0m120 296h0m-69 -56h0m14 -173h0m15 95h0m93 12h0m-23 143h0m-106 -184h0m-34 35h0m179 75h0m-331 -84h0m262 -58h0m-256 105h0m219 -179h0m-155 285h0m190 -11h0m-86 -77h0m-69 -12h0m153 -132h0m22 12h0m19 76h0m-11 140h0m-64 -274h0m-122 23h0m162 257h0m91 -168h0m-179 169h0m128 -144h0m-163 38h0m35 -80h0m40 104h0m45 -145h0m-118 144h0m-85 83h0m84 -113h0m-20 -185h0m78 117h0m134 94h0m-183 -8h0m153 -90h0m-243 182h0m193 0h0m-100 33h0m137 -262h0m-246 -29h0m64 269h0m85 -278h0m124 117h0m-63 -88h0m-124 58h0m-111 32h0m123 44h0m186 -90h0m-185 15h0m96 76h0m-13 122h0m85 -169h0m-106 6h0m-29 72h0m5 86h0m-73 -285h0m203 162h0m-173 143h0m157 -272h0m38 63h0m-218 30h0m-91 -45h0m206 -86h0m-143 29h0m138 -21h0m-135 252h0m181 -201h0m-145 259h0m-123 -199h0m145 212h0m34 -42h0m-152 -103h0m190 -195h0m-182 37h0m264 184h0m-313 -93h0m246 88h0m-176 33h0m265 -36h0m-139 -220h0m0 112h0m-75 85h0m-121 -57h0m10 -42h0m41 97h0m80 -14h0m-26 141h0m144 -181h0m-129 -22h0m-40 165h0m-21 -248h0m234 168h0m-168 3h0m11 131h0m203 -227h0m-175 4h0m36 28h0m114 4h0m-292 86h0m201 -15h0m109 -75h0m-105 48h0m73 -117h0m-273 153h0m188 -6h0m77 40h0m-249 -144h0m188 193h0m121 -199h0m-271 155h0m221 6h0m-142 -261h0m38 -13h0m73 58h0m-116 -32h0m-21 81h0m189 85h0m-126 -75h0m-45 214h0m86 -16h0m-107 -314h0m215 189h0m-123 -79h0m-20 33h0m63 -75h0m-104 71h0m153 -74h0m-229 -6h0m220 49h0m-133 202h0m-120 -44h0m168 20h0m-205 -172h0m-5 97h0m305 -17h0m-114 118h0m146 -104h0m-224 -202h0m-93 180h0m3 -45h0m-18 92h0m325 -94h0m-298 -3h0m289 -29h0m-16 124h0m-16 -4h0m-71 -225h0m65 259h0m9 -45h0m57 -14h0m-133 99h0m-177 -13h0m14 -259h0m273 193h0m-287 -8h0m-6 9h0m-41 -21h0m44 -3h0m156 134h0m43 -127h0m-236 10h0m224 -191h0m42 266h0m-115 24h0m-18 -312h0m-140 106h0m111 -100h0m-109 193h0m131 141h0m173 -289h0m-287 99h0m190 148h0m-11 -87h0m105 44h0m-32 12h0m-222 -219h0m270 174h0m-49 47h0m-9 -228h0m-27 294h0m-216 -188h0m-13 78h0m11 2h0m202 -42h0m-81 -154h0m-130 52h0m123 253h0m-55 -80h0m124 -113h0m109 60h0m-197 128h0m87 -24h0m-77 -164h0m-9 -19h0m89 203h0m-117 -255h0m68 44h0m134 -45h0m-83 -29h0m84 247h0m-137 24h0m-130 -174h0m184 14h0m80 -120h0m54 186h0m-6 -116h0m-327 35h0m270 -63h0m-230 186h0m271 -197h0m-200 265h0m156 -265h0m-232 131h0m-27 20h0m34 -81h0m97 9h0m-13 -1h0m133 -85h0m40 59h0m-236 -46h0m70 -89h0m109 236h0m68 -79h0m-174 148h0m88 -266h0m-97 200h0m198 -46h0m-97 -29h0m-28 -35h0m63 -39h0m-236 118h0m84 19h0m190 82h0m-155 -137h0m-107 -116h0m104 -1h0m-90 41h0m93 223h0m-16 34h0m14 -323h0m-101 39h0m106 76h0m-84 173h0m228 -95h0m-276 -109h0m205 -69h0m-142 25h0m25 71h0m-67 106h0m-27 -79h0m204 62h0m-188 -105h0m306 115h0m-259 -177h0m-18 263h0m-1 -274h0m56 -22h0m-56 62h0m17 -34h0m36 96h0m193 80h0m-73 -201h0m81 268h0m-273 -244h0m269 184h0m-117 72h0m74 -26h0m-41 -236h0m-168 -2h0m60 276h0m-81 -200h0m-26 5h0m126 -1h0m2 -112h0m88 308h0m-216 -113h0m-6 14h0m284 -169h0m-137 -10h0m-103 217h0m220 16h0m-33 -260h0m-170 236h0m36 -223h0m236 100h0m-303 -1h0m18 193h0m248 -97h0m-93 16h0m-5 -68h0m-124 113h0m115 -154h0m29 33h0m-30 163h0m-36 -182h0m-3 198h0m-14 -218h0m137 184h0m-80 -282h0m144 106h0m-222 -81h0m-117 107h0m187 -33h0m21 0h0m-87 186h0m124 -268h0m-93 292h0m-42 -290h0m-71 97h0m183 167h0m77 -28h0m-149 -252h0m-4 127h0m149 119h0m-91 38h0m-158 -14h0m22 17h0m133 -200h0m12 234h0m27 -330h0m-33 -13h0m123 146h0m-93 -118h0m61 29h0m-252 164h0m151 101h0m-35 -114h0m-93 88h0m59 45h0m138 -47h0m-153 7h0m-55 -37h0m-44 -151h0m66 -39h0m260 58h0m-200 47h0m56 -35h0m83 121h0m-159 -44h0m20 -47h0m7 -59h0m84 -100h0m66 193h0m-257 -15h0m236 -119h0m-242 152h0m293 -79h0m18 39h0m-228 151h0m188 -292h0m-267 95h0m75 61h0m44 140h0m-151 -202h0m225 -119h0m-8 328h0m94 -292h0m-109 291h0m97 -220h0m-147 -123h0m186 110h0m-157 215h0m-57 -208h0m169 167h0m-99 -120h0m130 -12h0m-292 107h0m84 -254h0m-114 174h0m130 -181h0m24 150h0m148 -7h0m-33 120h0m16 -145h0m-87 31h0m2 9h0m-82 2h0m132 104h0m71 -39h0m-215 86h0m45 -88h0m-145 -36h0m107 -63h0m74 18h0m145 -11h0m-32 -6h0m-272 60h0m96 120h0m-58 -9h0m119 -86h0m109 -87h0m28 73h0m-272 -116h0m164 -49h0m-186 160h0m175 -199h0m-132 284h0m158 52h0m-12 -27h0m-232 -177h0m128 62h0m89 -198h0m-59 15h0m138 311h0m-288 -114h0m157 -58h0m-114 139h0m26 -23h0m136 -38h0m28 -197h0m-157 16h0m59 308h0m173 -63h0m-166 56h0m173 -114h0m13 -49h0m-293 115h0m224 -6h0m-140 -154h0m-74 162h0m100 -65h0m126 -154h0m-140 -30h0m-58 215h0m78 -243h0m164 166h0m-103 -34h0m94 57h0m-147 -2h0m181 -17h0m-23 43h0m-166 -19h0m-74 -155h0m255 167h0m-330 -113h0m134 123h0m-102 -115h0m1 162h0m9 -215h0m70 -37h0m-64 241h0m96 -275h0m-76 45h0m120 284h0m-38 -138h0m38 19h0m-46 17h0m60 4h0m-207 -95h0m191 206h0m135 -107h0m-133 81h0m-60 -192h0m-52 -41h0m277 56h0m-64 -62h0m-217 220h0m-76 -161h0m133 32h0m100 154h0m-88 -164h0m75 187h0m14 -205h0m-35 -137h0m104 277h0m-24 24h0m27 -30h0m-14 -16h0m10 -52h0m-244 96h0m146 47h0m135 -121h0m-228 -75h0m-117 -23h0m331 68h0m-52 -154h0m-41 -44h0m63 300h0m-228 -255h0m-28 11h0m33 -9h0m124 82h0m17 65h0m-62 -32h0m-107 -95h0m152 -45h0m50 203h0m-210 54h0m11 -228h0m169 141h0m9 -182h0m-75 29h0m171 76h0m-210 210h0m-72 -46h0m298 -76h0m-138 -206h0m-90 154h0m186 -97h0m-163 -47h0m88 146h0m34 175h0m-18 -6h0m-62 -114h0m137 -95h0m-233 -58h0m-2 211h0m58 -221h0m26 172h0m-104 45h0m87 93h0m-10 -312h0m-118 114h0m291 60h0m-158 -93h0m-68 -72h0m67 74h0m126 174h0m-149 -129h0m141 122h0m-134 -127h0m75 -9h0m-170 -30h0m117 -111h0m89 208h0m48 39h0m-96 -134h0m-10 8h0m10 81h0m-9 -11h0m-48 -45h0m-86 -68h0m82 247h0m62 -311h0m102 240h0m16 -39h0m-259 -150h0m-16 143h0m221 71h0m46 -216h0m-161 42h0m87 -94h0m5 115h0m-200 56h0m233 73h0m-121 -73h0m-87 -165h0m181 283h0m16 -259h0m39 18h0m-285 46h0m209 -75h0m45 39h0m-45 112h0m-23 120h0m11 -278h0m-10 268h0m-25 33h0m62 -21h0m-192 -191h0m39 171h0m61 -258h0m45 98h0m-182 65h0m190 131h0m-117 -40h0m72 -78h0m-73 65h0m-40 -59h0m17 83h0m92 -178h0m-25 28h0m-39 -92h0m-27 194h0m47 62h0m55 -285h0m52 124h0m46 -84h0m-130 152h0m95 84h0m99 -123h0m-94 -172h0m-154 35h0m43 168h0m40 -13h0m-103 99h0m143 -87h0m-54 88h0m-62 -28h0m153 -146h0m70 -61h0m-5 155h0m-94 -190h0m29 -24h0m65 256h0m-168 -215h0m-130 91h0m43 77h0m-36 -66h0m213 37h0m-62 29h0m-43 -186h0m154 232h0m-153 43h0m197 -157h0m-88 35h0m-150 65h0m44 -216h0m187 100h0m-85 16h0m-29 0h0m-142 146h0m180 -109h0m-220 14h0m123 -30h0m-88 -128h0m-8 164h0m76 -170h0m184 223h0m-76 -73h0m126 -72h0m-41 -56h0m-82 72h0m-181 96h0m11 17h0m278 -97h0m11 -33h0m-11 73h0m-248 -113h0m51 265h0m179 -139h0m-129 18h0m85 -141h0m-41 -70h0m-228 200h0m243 -138h0m55 -7h0m-65 83h0m-4 -108h0m-166 49h0m263 143h0m-107 77h0m-106 15h0m90 -284h0m-56 272h0m58 -148h0m-133 100h0m191 -184h0m-143 75h0m13 73h0m160 84h0m-142 -83h0m73 -36h0m-181 -63h0m97 -127h0m-104 220h0m167 12h0m-182 6h0m105 -241h0m-2 37h0m-56 43h0m222 -38h0m53 113h0m-217 -111h0m205 147h0m-288 71h0m73 -119h0m183 12h0m-131 -7h0m141 -29h0m-161 -100h0m49 -6h0m-164 221h0m301 -36h0m-144 9h0m132 -44h0m-134 -36h0m125 108h0m-241 -150h0m-14 220h0m283 -90h0m-82 -145h0m-215 -4h0m68 -36h0m82 193h0m37 -93h0m-119 -130h0m216 231h0m-275 38h0m181 -134h0m-129 186h0m71 -114h0m-24 -66h0m23 -2h0m-23 -111h0m11 111h0m-123 158h0m-1 -85h0m154 -53h0m-70 183h0m-17 -5h0m-85 -218h0m125 115h0m48 97h0m67 -243h0m70 142h0m-212 -26h0m84 -50h0m21 -110h0m80 171h0m7 83h0m-177 -3h0m171 -6h0m-230 -235h0m135 133h0m100 -64h0m-236 -46h0m267 140h0m-33 11h0m2 -145h0m-233 -10h0m223 -14h0m-185 82h0m-78 1h0m112 164h0m71 -152h0m-27 52h0m142 -2h0m-30 89h0m-35 9h0m84 -178h0m-140 35h0m-168 135h0m6 -23h0m95 -152h0m62 229h0m103 -199h0m-225 130h0m65 -61h0m-90 -124h0m85 -73h0m5 116h0m113 -76h0m-135 249h0m65 -132h0m147 34h0m-233 111h0m119 -188h0m-106 -83h0m88 106h0m-63 37h0m-18 152h0m-101 -230h0m310 20h0m-293 -82h0m175 -15h0m-94 -33h0m34 190h0m67 -48h0m5 79h0m28 -157h0m50 172h0m31 -94h0m-138 163h0m-61 -117h0m-70 61h0m147 -249h0m-8 44h0m-92 81h0m84 -10h0m6 61h0m-162 -51h0m143 -15h0m36 22h0m0 -15h0m-108 219h0m-71 -276h0m175 172h0m-214 -92h0m193 -111h0m-70 142h0m26 153h0m148 -267h0m-26 205h0m29 -32h0m-161 -228h0m-90 293h0m99 -101h0m-18 -8h0m-51 -107h0m206 185h0m41 -27h0m-37 -205h0m-139 94h0m152 67h0m-184 -77h0m-10 82h0m181 -15h0m-167 40h0m-67 -146h0m-39 164h0m177 56h0m105 -177h0m-195 198h0m118 -139h0m-110 173h0m26 -233h0m-36 -80h0m-61 178h0m-1 -167h0m275 142h0m-111 -195h0m62 268h0m63 -123h0m-103 -127h0m-37 107h0m-121 168h0m46 -293h0m186 133h0m-106 -44h0m6 76h0m-132 132h0m268 -176h0m-302 -71h0m239 199h0m38 -56h0m-107 -158h0m55 14h0m-223 4h0m102 -41h0m-103 35h0m71 -22h0m195 211h0m-94 -183h0m-61 -24h0m-65 45h0m135 -82h0m79 136h0m-254 139h0m101 56h0m174 -93h0m-214 -227h0m95 35h0m19 101h0m-83 19h0m23 -11h0m-104 -64h0m246 -16h0m-12 202h0m-7 -192h0m-141 -71h0m76 213h0m-160 86h0m-61 -96h0m75 98h0m156 -268h0m38 254h0m39 -61h0m-155 97h0m155 -131h0m-248 52h0m87 60h0m152 -84h0m-179 -87h0m-39 -74h0m225 177h0m-105 97h0m75 -260h0m67 46h0m-306 -7h0m266 101h0m-160 -31h0m-64 -151h0m50 73h0m-76 -23h0m171 61h0m-112 156h0m213 -116h0m-161 11h0m169 41h0m-207 -204h0m139 26h0m-46 57h0m-181 30h0m39 -93h0m-32 12h0m294 59h0m-115 -121h0m-200 184h0m123 -166h0m-38 123h0m83 65h0m-187 -93h0m110 104h0m-92 -112h0m261 -67h0m-207 253h0m259 -72h0m-294 -32h0m13 74h0m210 6h0m74 -55h0m-194 115h0m-80 -34h0m226 -61h0m-132 -99h0m150 -45h0m-85 92h0m-217 -70h0m192 190h0m-10 -85h0m45 -185h0m52 265h0m21 -36h0m-163 -145h0m-33 -116h0m116 -3h0m-190 132h0m288 13h0m14 72h0m-45 76h0m11 -168h0m-169 99h0m161 -179h0m-140 -29h0m188 172h0m-149 36h0m-7 -42h0m-34 -57h0m-41 4h0m-89 25h0m124 150h0m40 1h0m34 -166h0m113 -16h0m-117 67h0m-212 -70h0m151 32h0m55 -148h0m-91 34h0m-66 8h0m-9 130h0m176 -30h0m11 182h0m-150 -263h0m36 65h0m93 206h0m-201 -114h0m141 -213h0m166 151h0m-285 41h0m63 116h0m46 17h0m-85 -21h0m-31 -18h0m311 -162h0m-270 -53h0m10 -37h0m228 246h0m-292 -196h0m129 216h0m83 -302h0m54 294h0m-145 -266h0m103 -27h0m-204 188h0m167 139h0m-83 -3h0m79 -1h0m-199 -117h0m229 -67h0m-162 -63h0m63 105h0m-55 -108h0m140 21h0m-25 225h0m50 -345h0m-12 316h0m-22 -184h0m-6 1h0m-6 4h0m-87 201h0m98 -18h0m69 -2h0m9 -4h0m-8 -39h0m-231 -8h0m276 -19h0m-172 100h0m-79 -76h0m223 -220h0m30 117h0m-122 159h0m126 -84h0m-142 -22h0m-31 -61h0m2 -2h0m121 160h0m26 -38h0m2 -199h0m18 116h0m-297 12h0m271 78h0m30 -75h0m-18 -125h0m-194 -70h0m79 124h0m-70 98h0m113 87h0m93 -197h0m-35 186h0m8 -1h0m-213 -7h0m223 -96h0m-83 -170h0m39 237h0m-237 -35h0m235 -172h0m-157 174h0m-50 35h0m135 -69h0m-65 28h0m211 -105h0m-230 -77h0m-55 35h0m99 109h0m-14 -1h0m45 -59h0m-104 -61h0m224 157h0m3 -24h0m-193 -168h0m90 130h0m-178 -13h0m184 44h0m-197 1h0m140 7h0m-94 -103h0m280 120h0m-35 -145h0m-127 259h0m-177 -188h0m301 -54h0m-249 214h0m-49 -73h0m313 5h0m28 -45h0m-96 -119h0m-245 37h0m96 18h0m175 -76h0m14 28h0m-96 130h0m-38 -14h0m84 119h0m-8 26h0m-42 -207h0m-38 92h0m64 -57h0m123 -52h0m-17 -6h0m-117 117h0m71 -132h0m-190 184h0m144 -248h0m-82 -16h0m78 199h0m-61 -75h0m145 97h0m3 -3h0m14 -114h0m-94 84h0m-196 -15h0m261 27h0m-21 -137h0m35 206h0m-301 -92h0m104 131h0m14 -34h0m172 -223h0m-155 276h0m15 -191h0m-114 -79h0m96 51h0m165 89h0m-36 -122h0m69 56h0m-182 65h0m147 -87h0m-268 68h0m-24 -45h0m131 -143h0m-5 37h0m-93 254h0m258 9h0m-8 -254h0m-89 104h0m63 118h0m-40 -136h0m-108 203h0m17 -336h0m67 345h0m102 -224h0m-191 98h0m173 45h0m-152 81h0m20 -322h0m56 201h0m-115 -85h0m130 -131h0m-110 3h0m87 30h0m-64 78h0m101 2h0m70 103h0m-239 45h0m194 31h0m53 -150h0m-206 60h0m-14 -82h0m199 77h0m-4 51h0m-216 -206h0m45 258h0m-103 -197h0m-2 54h0m177 157h0m-59 -98h0m1 -175h0m180 179h0m-50 -149h0m-209 221h0m99 -150h0m-112 -81h0m64 151h0m-63 -155h0m86 241h0m6 34h0m58 -36h0m-83 -92h0m-77 4h0m270 -10h0m-164 -90h0m58 195h0m-74 -189h0m170 102h0m-25 -140h0m-87 66h0m-145 -2h0m169 195h0m-171 -222h0m168 219h0m76 -320h0m-96 183h0m-98 -123h0m117 38h0m17 9h0m-75 29h0m189 69h0m-252 -188h0m170 36h0m-64 268h0m150 -212h0m-139 25h0m-139 -77h0m242 128h0m-34 70h0m-116 -61h0m59 -94h0m-91 89h0m12 -216h0m-85 276h0m150 -38h0m-43 103h0m-95 -296h0m138 -22h0m-126 10h0m-37 194h0m6 -10h0m173 -30h0m23 -45h0m-167 -104h0m123 177h0m-2 -75h0m31 -132h0m53 78h0m-117 75h0m-129 73h0m23 -199h0m175 125h0m-189 79h0m75 -209h0m219 203h0m-218 -189h0m42 278h0m-150 -188h0m223 80h0m-219 -60h0m317 12h0m-286 121h0m-5 -213h0m287 48h0m-145 94h0m-131 -136h0m163 82h0m-63 157h0m-14 -120h0m-58 109h0m176 -27h0m57 -136h0m-79 -130h0m-97 226h0m-17 -13h0m187 57h0m-156 -130h0m77 77h0m-22 -62h0m-42 -16h0m-12 -28h0m-131 -5h0m184 187h0m-50 -292h0m47 8h0m27 287h0m112 -80h0m-263 -149h0m12 -13h0m57 160h0m138 42h0m-39 -130h0m25 -58h0m65 122h0m-270 -103h0m252 177h0m-114 33h0m-146 -218h0m103 -70h0m136 31h0m-181 91h0m74 -33h0m-115 -62h0m161 -38h0m8 305h0m81 -20h0m-118 -181h0m-70 40h0m102 167h0m-50 -285h0m-37 -25h0m57 100h0m22 229h0m-77 -187h0m49 85h0m-120 -187h0m120 -23h0m-166 124h0m197 -150h0m-175 48h0m63 151h0m117 -179h0m-200 171h0m176 37h0m-64 107h0m-98 -290h0m280 111h0m-29 125h0m38 -156h0m-189 189h0m-142 -104h0m185 2h0m-38 -217h0m-29 45h0m-107 133h0m110 -20h0m-40 128h0m-50 -149h0m185 87h0m-101 -14h0m114 -65h0m-176 49h0m274 -39h0m-108 -119h0m67 47h0m-65 134h0m14 -71h0m-40 -104h0m-53 114h0m191 71h0m-149 103h0m13 12h0m-124 -278h0m108 234h0m156 -64h0m-225 104h0m83 -25h0m28 21h0m-86 -207h0m-106 84h0m229 -138h0m21 57h0m41 58h0m-14 -36h0m-137 -132h0m-56 29h0m25 299h0m168 -118h0m-14 -178h0m-204 -29h0m99 -5h0m-104 6h0m193 64h0m-61 145h0m115 -84h0m-307 3h0m80 174h0m29 -205h0m-61 172h0m25 -162h0m-95 103h0m173 109h0m97 -257h0m60 148h0m-175 78h0m-168 -84h0m17 -32h0m133 -31h0m188 41h0m-324 29h0m0 -30h0m-25 26h0m330 -110h0m-308 119h0m269 25h0m-152 -34h0m193 74h0m-246 -254h0m-34 10h0m128 66h0m-25 -118h0m-71 302h0m-22 -18h0m192 -68h0m-247 -78h0m127 -109h0m18 191h0m45 86h0m-144 -20h0m-6 -61h0m120 -98h0m155 8h0m-97 205h0m-163 -40h0m215 -6h0m-115 21h0m176 -122h0m-316 -76h0m268 -29h0m-85 -42h0m166 65h0m-119 -79h0m-47 308h0m-40 -224h0m159 27h0m-117 70h0m-158 53h0m321 -52h0m-278 77h0m135 -114h0m-160 119h0m-17 -26h0m101 35h0m35 -9h0m101 5h0m-203 -260h0m51 158h0m185 11h0m-115 -4h0m34 -170h0m-169 173h0m130 -72h0m5 -109h0m38 200h0m-6 -15h0m-6 82h0m-11 -72h0m134 -21h0m0 -75h0m-112 -115h0m-90 328h0m191 -155h0m-112 117h0m-51 -152h0m-128 -91h0m188 158h0m-153 46h0m-39 -152h0m75 223h0m35 -181h0m-25 174h0m182 -120h0m-178 -57h0m183 50h0m-6 12h0m20 -144h0m-261 194h0m78 -223h0m67 268h0m26 18h0m-148 -47h0m194 -12h0m-70 -77h0m92 102h0m-222 -20h0m-32 24h0m184 -159h0m-151 -70h0m115 63h0m105 -64h0m-152 -30h0m84 105h0m-33 184h0m-42 -108h0m45 -33h0m-203 -46h0m302 -12h0m-148 224h0m64 -10h0m-95 -129h0m78 -199h0m-38 198h0m180 -84h0m-73 158h0m-153 -142h0m-29 132h0m0 4h0m143 -93h0m46 120h0m-34 -297h0m-187 74h0m-44 40h0m292 148h0m-261 -188h0m8 -23h0m99 -25h0m197 187h0m-122 113h0m-91 -182h0m89 -150h0m-142 44h0m120 -21h0m95 231h0m-100 -248h0m89 241h0m-74 -248h0m96 70h0m3 7h0m-304 126h0m45 22h0m195 78h0m-8 -6h0m33 -27h0m39 -129h0m31 -20h0m-133 100h0m-56 -193h0m-3 307h0m21 0h0m-123 -218h0m80 94h0m-85 -5h0m147 -86h0m-100 161h0m-37 -134h0m147 3h0m76 156h0m-252 -193h0m-24 95h0m132 20h0m65 -107h0m-175 23h0m200 85h0m97 -116h0m-164 81h0m71 -160h0m-225 100h0m230 79h0m1 20h0m-35 -21h0m127 -20h0m26 -72h0m-79 -56h0m-6 -13h0m-242 140h0m83 -168h0m-94 187h0m151 -72h0m-124 58h0m140 -7h0m45 -154h0m-89 -31h0m-22 140h0m158 138h0m-183 -28h0m229 -30h0m-13 -180h0m-116 106h0m-69 -20h0m-68 -75h0m146 75h0m-149 -63h0m286 121h0m-193 0h0m102 -195h0m-33 122h0m11 73h0m-143 114h0m33 -302h0m28 101h0m-16 226h0m199 -45h0m-201 -176h0m-43 -59h0m159 89h0m-19 48h0m90 -49h0m-171 13h0m101 53h0m17 -142h0m-138 146h0m69 5h0m12 -164h0m-155 148h0m151 -62h0m-104 -92h0m188 37h0m-39 -54h0m-106 281h0m-4 -159h0m84 81h0m68 39h0m-201 -215h0m209 -23h0m-138 1h0m165 194h0m-112 92h0m113 -201h0m-194 213h0m77 6h0m22 -147h0m-181 -70h0m158 -100h0m-35 317h0m64 -168h0m-13 21h0m-53 123h0m-19 26h0m213 -202h0m-205 -12h0m76 176h0m-85 2h0m-11 -80h0m67 -17h0m80 66h0m55 -111h0m-177 186h0m68 -42h0m50 -236h0m-126 244h0m164 -102h0m-107 -179h0m-179 167h0m188 -40h0m-13 180h0m-151 -199h0m-3 162h0m170 -184h0m-14 207h0m-84 -185h0m98 87h0m83 -177h0m-61 258h0m-195 -197h0m47 184h0m178 -252h0m-119 299h0m69 -32h0m-149 -263h0m241 89h0m-282 58h0m-16 -73h0m18 75h0m176 -1h0m-161 11h0m184 -18h0m84 -62h0m-305 85h0m46 -9h0m28 89h0m-71 -79h0m129 -17h0m-22 -188h0m82 121h0m-165 -11h0m309 18h0m-28 59h0m-194 141h0m115 -125h0m63 -156h0m-145 259h0m60 -87h0m-60 -24h0m44 16h0m-193 -91h0m119 91h0m209 -106h0m-95 29h0m99 9h0m-257 152h0m54 -181h0m162 145h0m-260 -63h0m191 -162h0m81 193h0m-114 -43h0m-54 -185h0m111 56h0m60 69h0m-256 179h0m-18 -165h0m88 200h0m103 -210h0m-122 211h0m113 -177h0m-95 -121h0m118 307h0m69 -133h0m-156 -92h0m47 189h0m-195 -125h0m124 3h0m145 107h0m-194 -19h0m183 -5h0m-23 -136h0m-1 -117h0m-97 95h0m-99 -49h0m233 -30h0m-47 162h0m-75 116h0m-22 -162h0m223 40h0m-206 -159h0m68 14h0m63 209h0m-127 -128h0m-15 156h0m53 62h0m14 -344h0m-182 187h0m308 -48h0m-116 79h0m-5 -222h0m88 72h0m-76 231h0m119 -187h0m-129 185h0m-57 -189h0m121 154h0m-24 61h0m-40 -33h0m-194 -59h0m176 96h0m0 -12h0m-178 -124h0m213 -35h0m119 72h0m-336 -86h0m43 121h0m180 71h0m-2 -7h0m-8 -330h0m72 41h0m-174 146h0m1 -60h0m39 77h0m-77 71h0m-48 -123h0m-16 -44h0m96 38h0m26 -111h0m54 -25h0m-161 97h0m11 158h0m37 23h0m32 -273h0m-49 248h0m-3 -223h0m158 102h0m80 76h0m-80 -22h0m116 -2h0m-134 -151h0m1 262h0m122 -155h0m8 -59h0m-169 60h0m58 68h0m-133 -171h0m152 -45h0m-172 37h0m48 152h0m-85 28h0m115 -71h0m71 -116h0m-110 -22h0m93 331h0m-132 -270h0m55 148h0m100 -216h0m-159 296h0m181 10h0m-211 -117h0m10 1h0m267 -89h0m-118 115h0m-61 -223h0m71 190h0m103 -49h0m-60 -75h0m-206 114h0m99 -144h0m93 285h0m-217 -131h0m128 -135h0m43 154h0m164 1h0m-24 -17h0m-2 -80h0m-320 11h0m140 28h0m67 79h0m19 -21h0m102 -105h0m-34 113h0m6 -108h0m-7 -46h0m-177 -56h0m-73 264h0m-13 -155h0m116 88h0m-24 -12h0m-64 117h0m64 -125h0m59 0h0m-143 -133h0m3 178h0m94 -178h0m55 301h0m-134 -90h0m160 43h0m-91 -144h0m205 34h0m-184 105h0m65 -4h0m-176 -231h0m85 90h0m-12 -31h0m-72 97h0m166 118h0m22 -194h0m-116 184h0m79 -190h0m-9 0h0m155 75h0m-22 -27h0m-132 22h0m-72 97h0m42 -286h0m-41 -2h0m91 131h0m-173 -33h0m121 -92h0m-36 -17h0m228 116h0m-273 -76h0m150 151h0m-93 -10h0m129 -128h0m-179 225h0m113 -84h0m31 103h0m-66 -188h0m-52 -86h0m194 238h0m-228 -192h0m85 51h0m70 9h0m66 -65h0m-156 235h0m87 -113h0m91 4h0m-29 100h0m-243 -237h0m104 270h0m0 2h0m163 -272h0m-300 165h0m60 -180h0m241 77h0m-169 100h0m196 -87h0m-117 -14h0m-33 94h0m-38 2h0m-118 9h0m101 -236h0m-86 80h0m252 127h0m-221 -129h0m38 269h0m88 -29h0m-165 -254h0m256 -10h0m-83 -3h0m127 86h0m-27 19h0m-91 161h0m37 -262h0m47 23h0m-91 155h0m-184 -119h0m30 194h0m81 2h0m14 15h0m-3 -286h0m-109 262h0m268 -148h0m-161 -152h0m0 205h0m54 -8h0m-54 30h0m-67 -171h0m0 244h0m69 -254h0m39 -13h0m-72 279h0m-104 -106h0m95 102h0m92 -270h0m116 207h0m-46 -154h0m-126 -73h0m-109 178h0m174 -6h0m-172 -26h0m-55 -52h0m243 35h0m-210 91h0m291 58h0m-91 -56h0m-71 66h0m119 -219h0m39 25h0m-293 123h0m-11 -105h0m303 99h0m-74 85h0m-99 -2h0m78 -268h0m-87 167h0m32 -181h0m34 187h0m-122 -131h0m159 131h0m-121 121h0m-100 -129h0m18 -52h0m118 85h0m-119 -40h0m268 73h0m-140 52h0m70 -129h0m93 13h0m-180 98h0m91 -305h0m90 192h0m-192 144h0m-5 -195h0m-94 -23h0m105 222h0m106 -310h0m-101 197h0m-10 -91h0m11 44h0m21 17h0m-23 -73h0m-114 112h0m-9 -102h0m199 53h0m8 -140h0m1 113h0m-93 -39h0m96 -81h0m-163 45h0m-67 114h0m157 -82h0m60 -78h0m127 147h0m-217 -60h0m90 37h0m-85 54h0m84 -105h0m-89 50h0m121 -150h0m66 45h0m11 182h0m-89 74h0m47 -232h0m55 30h0m-121 10h0m-125 -69h0m7 233h0m224 -23h0m-151 -48h0m-54 115h0m85 -140h0m-53 -145h0m-94 247h0m1 -79h0m76 -173h0m-44 10h0m-30 9h0m151 -36h0m120 98h0m-321 22h0m199 196h0m-130 -30h0m140 -66h0m125 -82h0m-153 72h0m133 -88h0m-39 164h0m-210 -38h0m274 -146h0m-231 209h0m181 -242h0m-230 63h0m231 -119h0m15 92h0m-38 -49h0m-218 191h0m72 -49h0m84 115h0m-148 -36h0m81 -257h0m-85 34h0m-45 143h0m37 -61h0m47 100h0m107 -130h0m-125 -25h0m197 -41h0m-161 -46h0m134 25h0m-210 27h0m98 51h0m168 -64h0m-141 283h0m183 -95h0m-190 -197h0m-101 2h0m27 30h0m230 53h0m-162 218h0m4 -184h0m-100 105h0m228 -218h0m-87 82h0m80 -44h0m32 192h0m-32 9h0m-123 -61h0m121 35h0m-158 -239h0m109 16h0m-76 71h0m-127 120h0m-5 -10h0m106 -194h0m216 206h0m-273 16h0m146 -239h0m-181 233h0m181 69h0m65 -242h0m-188 210h0m186 -11h0m-141 -267h0m-25 280h0m10 -271h0m80 11h0m20 88h0m-150 -62h0m195 -7h0m-43 258h0m-37 -306h0m-119 46h0m177 -16h0m-227 117h0m115 165h0m-117 -162h0m314 11h0m-196 28h0m183 21h0m-43 -121h0m-137 112h0m66 -75h0m-105 166h0m22 27h0m16 -276h0m-53 43h0m51 71h0m28 190h0m64 -113h0m-180 -85h0m42 -90h0m-37 91h0m300 -14h0m-119 -121h0m-173 245h0m143 -124h0m39 16h0m-78 173h0m133 -278h0m64 184h0m-208 12h0m81 -227h0m-171 34h0m6 36h0m272 32h0m-211 -68h0m29 272h0m73 -10h0m5 -4h0m112 -70h0m4 -102h0m-199 110h0m16 -36h0m-126 -86h0m238 185h0m-39 -161h0m-69 78h0m-126 -18h0m186 141h0m-67 -165h0m-26 13h0m60 -170h0m29 211h0m102 -121h0m-202 -110h0m198 152h0m-195 -117h0m146 249h0m2 -14h0m-7 18h0m-255 -69h0m216 2h0m-25 12h0m-171 0h0m282 -86h0m-157 -108h0m-110 249h0m263 -64h0m-116 -84h0m-29 81h0m-8 89h0m-87 -211h0m234 -32h0m0 218h0m-186 -254h0m237 102h0m-61 167h0m38 -72h0m-162 -104h0m-14 -91h0m157 21h0m-74 277h0m-193 -134h0m54 111h0m-97 -198h0m311 -72h0m-238 259h0m62 -141h0m172 -17h0m-293 6h0m55 -62h0m59 -44h0m-15 278h0m-57 -270h0m273 182h0m-137 -109h0m-69 99h0m21 5h0m-111 -162h0m240 205h0m-227 -117h0m94 93h0m84 117h0m84 -168h0m-155 -68h0m120 -88h0m54 158h0m13 12h0m-31 -83h0m-90 -85h0m-171 -4h0m67 5h0m80 -27h0m87 27h0m-129 268h0m-136 -148h0m121 147h0m168 -172h0m-104 223h0m27 -49h0m-161 -8h0m276 -94h0m-109 -158h0m-105 -9h0m94 111h0m-19 12h0m10 184h0m95 -263h0m26 151h0m-184 -14h0m181 10h0m-147 -78h0m-147 -6h0m81 -10h0m17 -17h0m70 44h0m-87 -128h0m122 0h0m-128 -17h0m84 201h0m-92 110h0m112 -24h0m-185 -147h0m86 -146h0m221 189h0m-141 134h0m-74 -210h0m217 15h0m-59 -95h0m-62 78h0m105 30h0m-204 67h0m170 38h0m-282 -112h0m138 3h0m85 -17h0m45 -90h0m0 217h0m-121 -243h0m-119 295h0m87 -184h0m94 26h0m-18 179h0m-119 -67h0m53 -148h0m150 194h0m20 -270h0m-311 82h0m357 21h0m-313 84h0m156 -112h0m113 154h0m-178 -50h0m-64 -18h0m43 -192h0m54 315h0m-151 -103h0m292 -169h0m-73 104h0m-106 45h0m129 88h0m-19 -271h0m-207 215h0m317 -13h0m-316 -73h0m159 177h0m-66 -312h0m-10 310h0m92 -29h0m64 2h0m3 -3h0m-231 -168h0m12 -81h0m55 -16h0m106 134h0m-69 147h0m74 -7h0m-91 -293h0m166 126h0m-22 143h0m71 -147h0m-219 14h0m147 105h0m62 -56h0m-104 -158h0m107 192h0m-301 -78h0m8 -37h0m42 179h0m-77 -62h0m294 -96h0m-160 206h0m-10 -146h0m-70 111h0m289 -116h0m-37 -33h0m-88 181h0m64 -32h0m-141 -262h0m172 136h0m-265 -102h0m83 148h0m70 -218h0m-169 102h0m-27 40h0m6 81h0m137 -14h0m121 -166h0m-41 290h0m23 -292h0m72 143h0m-126 43h0m-74 -85h0m128 124h0m-25 -263h0m-35 14h0m-53 164h0m-30 -65h0m-25 -62h0m208 -12h0m-170 104h0m-118 52h0m335 -64h0m-110 -28h0m-226 93h0m190 11h0m-132 -170h0m90 300h0m-38 -338h0m186 197h0m-12 53h0m-101 -134h0m33 25h0m0 69h0m-195 -72h0m296 -30h0m-121 4h0m18 221h0m-107 -147h0m-97 -78h0m177 200h0m107 -176h0m-280 52h0m105 -157h0m7 195h0m-59 -182h0m223 211h0m-70 -109h0m-101 4h0m161 103h0m-135 -241h0m158 272h0m-185 -251h0m-75 42h0m3 169h0m98 -138h0m-118 -13h0m192 208h0m39 -27h0m57 -82h0m-45 69h0m-238 -44h0m18 -139h0m89 -44h0m133 45h0m6 -38h0m-105 102h0m167 67h0m-112 -62h0m-39 38h0m-151 -127h0m241 204h0m-224 -225h0m96 161h0m78 10h0m-167 47h0m275 -137h0m-309 -7h0m201 93h0m79 -106h0m-235 191h0m-63 -104h0m105 31h0m-9 -13h0m-40 87h0m79 -63h0m152 56h0m-97 -225h0m48 211h0m89 -163h0m-304 96h0m62 117h0m-46 -24h0m24 -48h0m39 64h0m-99 -206h0m110 113h0m212 7h0m-148 -70h0m37 47h0m-78 10h0m120 -131h0m7 10h0m-3 -50h0m-5 222h0m48 -153h0m-175 -110h0m85 128h0m-78 -128h0m-33 206h0m-105 -22h0m328 -46h0m-33 -4h0m-100 -21h0m-46 194h0m-154 -196h0m-3 2h0m352 117h0m-207 111h0m85 -6h0m77 -218h0m-34 145h0m-73 68h0m108 -214h0m-171 176h0m-136 -150h0m192 174h0m40 16h0m-50 -326h0m-51 109h0m125 142h0m-38 74h0m70 -299h0m-279 81h0m104 211h0m99 -208h0m-22 108h0m20 -224h0m-22 204h0m-77 22h0m192 -97h0m-288 106h0m100 95h0m-70 -119h0m152 -213h0m-2 101h0m-152 173h0m90 -162h0m-65 -16h0m261 57h0m-65 117h0m-134 -234h0m-55 274h0m178 -37h0m-152 58h0m136 -188h0m-229 20h0m327 -48h0m-112 46h0m73 137h0m24 -150h0m-141 41h0m42 20h0m-178 61h0m-39 -79h0m297 -148h0m-298 157h0m222 -175h0m-84 288h0m148 -20h0m-84 48h0m-132 -37h0m-42 -78h0m94 -173h0m-82 155h0m27 89h0m152 -92h0m-88 -42h0m52 156h0m-124 -239h0m229 169h0m-256 30h0m33 -233h0m190 226h0m-147 -48h0m111 -196h0m70 235h0m-104 60h0m7 -218h0m-61 -65h0m63 144h0m-43 23h0m-101 -114h0m-13 0h0m153 -76h0m-138 25h0m83 77h0m149 5h0m16 4h0m-196 10h0m-27 -85h0m21 279h0m16 -27h0m7 -267h0m101 179h0m-32 83h0m9 42h0m-96 -336h0m187 64h0m-259 198h0m101 -43h0m-9 -120h0m175 162h0m-152 -43h0m155 -37h0m-76 29h0m61 45h0m5 6h0m-259 -144h0m254 -47h0m-30 198h0m-46 -85h0m-61 -175h0m164 180h0m-65 -146h0m50 -4h0m12 146h0m-265 -153h0m136 -23h0m32 20h0m112 107h0m-104 -12h0m-22 55h0m-145 80h0m44 -159h0m18 113h0m-48 -175h0m-31 23h0m104 77h0m78 67h0m39 -150h0m-74 52h0m-38 25h0m-96 157h0m153 -74h0m-97 -7h0m197 -30h0m-168 -153h0m-28 279h0m-114 -87h0m135 -105h0m195 -8h0m-198 79h0m-134 28h0m231 85h0m-191 -247h0m236 -10h0m22 -10h0m-7 44h0m-153 270h0m197 -202h0m-38 -98h0m-72 94h0m7 -138h0m-97 296h0m211 -164h0m-284 125h0m72 -40h0m77 113h0m94 -144h0m-109 -35h0m15 188h0m-139 -305h0m149 79h0m-99 53h0m145 99h0m70 -69h0m-211 -54h0m4 -111h0m-95 163h0m206 108h0m60 -11h0m5 -20h0m-258 -15h0m183 50h0m-19 -7h0m-76 43h0m-56 -294h0m147 80h0m-11 205h0m-71 -179h0m-101 68h0m151 -18h0m54 -209h0m-37 168h0m-12 53h0m120 -28h0m-207 16h0m210 -58h0m18 -23h0m-113 181h0m-72 -169h0m-79 -64h0m-2 185h0m234 -124h0m-318 -6h0m38 -24h0m25 155h0m63 -43h0m84 -189h0m-1 -25h0m72 287h0m-89 -91h0m-66 -178h0m-105 116h0m30 -75h0m300 164h0m5 -81h0m-287 157h0m96 16h0m-18 -158h0m-86 -119h0m-13 93h0m189 177h0m-151 -272h0m167 -38h0m-130 327h0m214 -218h0m-116 64h0m-174 29h0m161 -192h0m-88 218h0m42 -95h0m115 159h0m-115 -151h0m-117 -33h0m98 -107h0m132 47h0m-68 95h0m-196 -19h0m105 199h0m95 -31h0m-71 -3h0m93 -143h0m-170 112h0m238 -218h0m-175 165h0m-97 17h0m46 -190h0m66 269h0m109 -234h0m-116 114h0m10 -4h0m7 7h0m-84 -144h0m56 -17h0m194 202h0m-158 -106h0m6 -7h0m182 23h0m-242 139h0m21 -267h0m213 179h0m-65 67h0m-221 -134h0m-33 101h0m181 -98h0m124 57h0m-34 -139h0m-198 28h0m184 191h0m26 7h0m-155 -154h0m183 79h0m8 0h0m-31 93h0m-232 12h0m-58 -83h0m63 41h0m-61 -56h0m249 99h0m-111 11h0m197 -166h0m-233 4h0m229 71h0m-36 63h0m-305 -71h0m118 120h0m229 -207h0m-120 184h0m-77 -18h0m139 -28h0m24 -69h0m-293 -87h0m179 209h0m23 -26h0m-18 -296h0m6 6h0m109 148h0m-154 62h0m-73 -197h0m29 162h0m124 -156h0m-237 106h0m-10 16h0m200 -18h0m-76 6h0m64 194h0m36 -174h0m-80 42h0m154 -145h0m-94 183h0m-51 -223h0m151 275h0m-112 -80h0m-31 113h0m-79 -259h0m59 169h0m-23 -73h0m7 -10h0m191 45h0m-96 -87h0m84 89h0m-157 40h0m-5 -119h0m121 149h0m-80 -123h0m-112 162h0m159 -271h0m-106 189h0m-14 92h0m136 -11h0m-127 27h0m123 -300h0m-171 2h0m162 -23h0m-120 129h0m44 10h0m172 89h0m-325 -81h0m36 56h0m97 -46h0m-140 -20h0m79 -64h0m232 199h0m-175 -166h0m163 -70h0m-22 35h0m-136 231h0m-105 -154h0m176 40h0m95 -137h0m-8 250h0m-279 -160h0m210 61h0m5 -74h0m-224 96h0m313 -112h0m-96 221h0m43 -269h0m-193 190h0m258 -151h0m-293 -49h0m110 255h0m184 -202h0m0 7h0m-255 -66h0m233 93h0m-255 119h0m16 -15h0m14 -194h0m135 175h0m70 -195h0m-62 166h0m-85 29h0m83 -225h0m-27 232h0m-87 -224h0m177 142h0m-81 -3h0m-200 -39h0m112 20h0m111 -111h0m-167 59h0m153 -39h0m-216 166h0m149 -183h0m88 -42h0m-5 138h0m92 -10h0m-99 29h0m-79 -128h0m-100 43h0m92 132h0m-60 -137h0m30 286h0m85 -131h0m103 60h0m-253 -62h0m222 -138h0m-245 88h0m171 -34h0m16 70h0m23 19h0m-154 -154h0m135 -55h0m-28 132h0m-34 186h0m141 -22h0m6 -35h0m-119 -122h0m13 171h0m-42 -267h0m-100 176h0m-9 -82h0m263 18h0m-192 182h0m213 -105h0m-91 -213h0m-109 204h0m33 -59h0m145 -96h0m0 144h0m-23 87h0m59 -74h0m-12 -77h0m-201 -104h0m-99 70h0m-15 34h0m68 -63h0m-46 24h0m314 26h0m-161 -117h0m-56 324h0m30 -14h0m51 -24h0m2 3h0m88 -187h0m-134 -94h0m-89 243h0m28 -220h0m-16 229h0m37 -161h0m-37 171h0m215 -223h0m0 76h0m9 59h0m27 5h0m-210 -97h0m214 86h0m-14 56h0m-291 -121h0m156 205h0m-77 -197h0m183 -84h0m-73 67h0m-31 -3h0m34 9h0m122 7h0m-229 89h0m204 6h0m-173 -190h0m-153 173h0m117 -213h0m75 144h0m-60 -26h0m202 27h0m-298 -104h0m247 261h0m-212 -34h0m234 -203h0m-291 125h0m137 14h0m0 8h0m-116 -84h0m259 -4h0m-104 0h0m-46 -113h0m55 153h0m-129 -112h0m36 135h0m195 103h0m-165 19h0m81 -85h0m85 44h0m-111 -229h0m121 83h0m-202 -98h0m161 273h0m-271 -106h0m255 -119h0m54 12h0m-276 143h0m294 -65h0m-213 44h0m38 -71h0m197 84h0m-116 -78h0m-1 160h0m-21 -2h0m-65 32h0m45 -112h0m-49 -24h0m75 -71h0m-17 -81h0m-86 283h0m49 -187h0m146 54h0m-32 72h0m-161 -262h0m188 133h0m-73 -118h0m-11 321h0m62 -37h0m-203 -25h0m200 -188h0m-206 208h0m109 -282h0m48 307h0m-15 19h0m75 -288h0m56 92h0m-127 -138h0m-218 187h0m110 -37h0m-73 -4h0m302 60h0m-45 -157h0m-183 281h0m-72 -273h0m11 73h0m233 -57h0m-148 227h0m186 -154h0m-205 209h0m-101 -173h0m-6 -43h0m180 172h0m-41 -281h0m116 243h0m-241 -120h0m273 115h0m-108 -241h0m94 13h0m-251 113h0m7 -17h0m192 160h0m-3 -268h0m-17 269h0m7 -181h0m-142 -35h0m-73 119h0m218 -163h0m-165 36h0m141 44h0m-76 104h0m-80 -163h0m252 146h0m-231 107h0m154 28h0m-158 -44h0m153 -7h0m-79 -115h0m10 -131h0m79 -38h0m-141 72h0m230 -23h0m-11 219h0m-1 -229h0m-80 290h0m110 -187h0m9 63h0m-148 -188h0m153 101h0m-291 180h0m2 -6h0m65 33h0m150 -284h0m0 1h0m-21 240h0m-171 -28h0m187 11h0m-249 -75h0m133 20h0m142 86h0m-132 -93h0m-151 10h0m117 -68h0m-111 73h0m115 -38h0m81 -184h0m90 284h0m-182 -101h0m143 81h0m-141 -235h0m-80 179h0m266 -13h0m-113 -74h0m121 73h0m-20 96h0m10 -146h0m-302 64h0m149 -47h0m-89 141h0m293 -178h0m-151 102h0m-48 -98h0m61 159h0m-110 -92h0m41 -76h0m-111 10h0m166 -97h0m-19 171h0m79 103h0m-153 13h0m104 -201h0m65 141h0m28 -79h0m-272 89h0m182 -77h0m-212 -97h0m203 -58h0m-55 293h0m113 -268h0m-252 160h0m139 -98h0m149 102h0m-225 67h0m260 -109h0m-188 136h0m-107 -261h0m114 263h0m-127 -92h0m210 -206h0m-238 177h0m220 142h0m-91 -346h0m142 23h0m73 103h0m-97 21h0m-98 -2h0m-116 0h0m168 157h0m106 -101h0m-3 23h0m-157 -181h0m-86 47h0m280 127h0m-293 -8h0m8 -176h0m184 178h0m-205 -89h0m267 101h0m-146 88h0m-22 -194h0m165 -63h0m-178 140h0m212 28h0m-144 -23h0m-183 -3h0m108 -173h0m76 286h0m-163 -62h0m269 39h0m-83 -131h0m-52 -127h0m-51 111h0m191 -84h0m-88 58h0m81 154h0m17 -189h0m-85 -74h0m-79 14h0m-106 206h0m-38 -21h0m118 99h0m90 -137h0m-7 -126h0m-194 115h0m43 -107h0m80 110h0m1 33h0m-22 30h0m199 17h0m-114 -226h0m-147 292h0m23 -251h0m-23 209h0m151 -38h0m92 -194h0m8 230h0m-104 -112h0m2 -47h0m-160 -33h0m182 75h0m0 -141h0m-198 160h0m57 124h0m134 -60h0m-103 -228h0m90 124h0m-6 99h0m11 -104h0m96 20h0m-187 79h0m-90 64h0m264 -234h0m-173 308h0m15 -303h0m-15 252h0m28 -122h0m154 -52h0m-102 203h0m-162 -129h0m168 87h0m18 -90h0m11 4h0m35 81h0m-156 54h0m-105 -150h0m210 -198h0m-69 234h0m-67 76h0m-34 -231h0m284 46h0m-30 -67h0m42 83h0m-323 100h0m269 -147h0m-280 39h0m204 -12h0m57 191h0m-223 -42h0m154 -256h0m33 24h0m13 273h0m-101 -271h0m-28 287h0m64 -289h0m113 15h0m-69 -6h0m-94 307h0m210 -202h0m-222 75h0m4 -90h0m-87 147h0m187 -155h0m-31 0h0m6 -113h0m-80 -2h0m185 183h0m-176 1h0m-102 43h0m241 53h0m-52 -165h0m-94 95h0m-115 -4h0m205 -30h0m-10 -62h0m-74 -70h0m40 83h0m-145 15h0m259 157h0m-52 -279h0m-30 98h0m33 19h0m-14 -81h0m-198 53h0m104 2h0m212 26h0m-270 155h0m273 -80h0m-127 85h0m-91 -114h0m105 -158h0m69 21h0m-113 78h0m-110 -49h0m216 188h0m45 -151h0m-133 225h0m-31 -148h0m61 -59h0m-212 61h0m286 -69h0m-235 -50h0m232 199h0m-223 6h0m147 -154h0m-193 104h0m93 104h0m-116 -115h0m259 -164h0m-144 40h0m148 202h0m66 -72h0m-253 73h0m62 18h0m157 -36h0m-6 -173h0m-181 200h0m-33 -18h0m66 -302h0m7 340h0m76 -29h0m79 -151h0m1 -3h0m2 -87h0m-263 22h0m259 68h0m-286 -72h0m325 125h0m-294 -70h0m139 -14h0m-167 -4h0m11 91h0m187 32h0m-70 -102h0m10 -6h0m-44 205h0m175 -262h0m54 55h0m-131 -121h0m-184 213h0m265 74h0m21 -58h0m-67 89h0m-211 -192h0m-5 -4h0m155 183h0m117 -86h0m-254 76h0m-40 -125h0m67 101h0m111 73h0m87 -83h0m-157 -231h0m-54 9h0m222 221h0m-92 76h0m-158 -79h0m88 -217h0m67 267h0m34 -189h0m74 68h0m-207 98h0m226 -61h0m-55 -161h0m-32 154h0m-22 -67h0m-83 -118h0m48 108h0m-7 -11h0m161 90h0m-150 -218h0m38 137h0m-64 60h0m-48 138h0m158 -271h0m-73 -64h0m-45 -2h0m183 146h0m-97 -27h0m-15 178h0m62 -255h0m11 34h0m-176 38h0m-57 27h0m45 179h0m198 -114h0m25 -95h0m-215 86h0m183 67h0m-132 -125h0m-115 118h0m265 -103h0m-298 -8h0m139 43h0m-17 146h0m-113 -233h0m270 184h0m-164 49h0m98 -207h0m-114 6h0m169 -61h0m22 113h0m-4 104h0m-121 -162h0m41 -6h0m-181 25h0m278 -39h0m-202 93h0m154 50h0m-226 18h0m220 -207h0m-76 137h0m-189 -61h0m115 -123h0m-82 203h0m293 -37h0m-211 -159h0m-36 24h0m109 85h0m-110 163h0m-33 -113h0m291 12h0m-142 -171h0m31 188h0m-11 89h0m89 -36h0m-110 -138h0m-72 -119h0m-88 52h0m268 201h0m8 -31h0m-276 -122h0m273 92h0m27 -54h0m-125 90h0m130 -79h0m-74 129h0m-284 -163h0m65 169h0m85 8h0m66 -108h0m18 31h0m122 -105h0m-301 23h0m-13 51h0m165 -52h0m-50 166h0m13 21h0m109 -57h0m-102 -127h0m185 58h0m-156 6h0m-42 82h0m163 -21h0m42 -81h0m-140 -150h0m57 264h0m-28 -89h0m-17 -15h0m-4 145h0m3 -336h0m-9 183h0m46 100h0m-108 -66h0m-78 -180h0m156 -9h0m88 117h0m-101 188h0m-188 -235h0m97 234h0m84 -151h0m23 -168h0m-27 289h0m130 -82h0m-202 -43h0m95 152h0m-202 -142h0m-11 -81h0m176 206h0m111 -30h0m2 -193h0m-159 96h0m-103 107h0m69 -275h0m-82 208h0m201 90h0m-34 -169h0m-128 150h0m211 -2h0m-159 -166h0m39 -5h0m74 47h0m53 123h0m-71 -184h0m74 182h0m-8 -255h0m-163 165h0m59 -192h0m-121 241h0m168 77h0m74 -256h0m-167 221h0m16 39h0m180 -232h0m18 13h0m-87 -67h0m-181 18h0m210 -32h0m-133 158h0m135 110h0m-145 -76h0m-71 -152h0m70 221h0m5 -175h0m-75 180h0m233 -224h0m-190 115h0m87 -33h0m-161 -97h0m4 217h0m182 32h0m-82 -285h0m4 189h0m-89 -176h0m77 -4h0m-6 300h0m160 -258h0m-68 42h0m-224 13h0m67 -99h0m280 107h0m-120 84h0m-180 -169h0m257 230h0m-306 -90h0m354 -1h0m-166 25h0m-126 31h0m-47 -27h0m136 0h0m9 112h0m179 -111h0m-225 91h0m-47 -240h0m214 -3h0m-259 23h0m141 -86h0m142 122h0m-222 161h0m113 27h0m104 -281h0m-105 268h0m28 33h0m-151 -296h0m235 -1h0m-90 293h0m88 -59h0m-222 25h0m-39 -40h0m174 37h0m-179 -80h0m119 -2h0m39 116h0m-42 -189h0m6 166h0m41 -10h0m112 -19h0m-44 -10h0m25 -7h0m-87 -231h0m140 85h0m-256 161h0m-54 -5h0m158 -67h0m120 -65h0m-25 166h0m51 -175h0m-48 59h0m-248 -52h0m161 -44h0m87 -54h0m-65 110h0m-81 158h0m-8 -318h0m184 112h0m-178 237h0m72 -305h0m4 263h0m65 -218h0m-25 -50h0m-190 284h0m-19 -197h0m-17 39h0m-15 31h0m180 -192h0m-118 54h0m104 81h0m-140 -55h0m278 76h0m-14 43h0m31 -61h0m-219 4h0m-7 -126h0m215 134h0m-19 -27h0m-161 -100h0m51 174h0m-61 -8h0m140 -145h0m-93 101h0m-38 -110h0m-1 269h0m118 -37h0m-40 41h0m-69 -161h0m-39 51h0m115 120h0m-183 -247h0m187 112h0m-83 -40h0m-58 127h0m-56 -140h0m70 14h0m38 51h0m-117 4h0m13 90h0m61 -267h0m30 158h0m96 -145h0m-229 118h0m177 -103h0m41 -12h0m89 195h0m-197 89h0m237 -106h0m-112 -198h0m-115 326h0m-73 -130h0m147 -12h0m15 137h0m4 -333h0m-18 184h0m13 163h0m36 -32h0m-9 -130h0m-220 49h0m250 -189h0m23 212h0m-159 -147h0m132 160h0m43 -220h0m-83 280h0m80 -65h0m-219 10h0m-35 -134h0m217 144h0m-146 -257h0m9 197h0m172 -32h0m-247 -120h0m4 222h0m181 23h0m61 -52h0m-255 -155h0m150 16h0m-136 176h0m85 -187h0m8 196h0m4 -116h0m-26 -18h0m42 9h0m46 -191h0m85 127h0m-171 64h0m149 68h0m-273 -57h0m180 -4h0m144 45h0m-193 -126h0m48 96h0m4 -28h0m16 -77h0m29 26h0m-6 174h0m-4 -174h0m63 165h0m-140 -266h0m-14 3h0m65 88h0m96 38h0m-64 -148h0m89 178h0m-164 -44h0m-127 79h0m262 -184h0m-255 221h0m121 -125h0m-38 78h0m-69 -166h0m-9 108h0m67 -152h0m196 194h0m-40 57h0m-216 36h0m260 -222h0m-171 115h0m184 -39h0m-276 -77h0m113 273h0m38 -236h0m149 119h0m-129 -234h0m-108 208h0m208 -7h0m-10 87h0m29 -161h0m-195 -79h0m-20 88h0m-14 201h0m44 -110h0m-19 -218h0m150 305h0m-263 -161h0m125 -104h0m6 274h0m59 -129h0m-172 -34h0m132 178h0m-125 -222h0m100 10h0m-25 -110h0m31 209h0m-42 126h0m115 -195h0m-182 -104h0m-26 182h0m138 -40h0m-36 -57h0m-66 -8h0m186 218h0m-202 -118h0m181 -177h0m54 230h0m-151 -251h0m94 -24h0m-7 107h0m-94 3h0m121 222h0m27 -60h0m-173 -219h0m73 172h0m-17 -193h0m40 305h0m8 -179h0m30 -163h0m7 230h0m-11 75h0m11 -165h0m-159 132h0m14 -217h0m203 27h0m-236 215h0m167 -246h0m-3 305h0m-155 -305h0m-18 29h0m278 186h0m-40 -223h0m-14 37h0m60 71h0m-178 76h0m-10 -182h0m-5 146h0m-13 -57h0m20 62h0m-114 -78h0m136 207h0m72 -284h0m-28 152h0m25 -162h0m-154 45h0m-45 -34h0m33 223h0m237 -127h0m-109 -119h0m107 263h0m-94 -91h0m25 -65h0m34 153h0m11 -8h0m-215 -182h0m54 217h0m16 -76h0m-14 105h0m-79 -190h0m46 -85h0m32 147h0m45 134h0m-145 -102h0m187 -9h0m-17 119h0m-169 -191h0m159 62h0m124 75h0m31 -94h0m-282 75h0m66 -264h0m227 128h0m-22 52h0m-178 36h0m-85 -179h0m-31 191h0m17 48h0m163 -249h0m139 195h0m-229 -210h0m103 216h0m91 60h0m-82 -166h0m-179 78h0m258 0h0m-8 54h0m-222 -209h0m54 65h0m185 31h0m-132 -9h0m119 131h0m-72 -149h0m-3 -76h0m-94 14h0m48 119h0m-148 115h0m20 -221h0m88 234h0m201 -98h0m-147 116h0m-110 -271h0m108 105h0m-3 -32h0m-30 -3h0m63 75h0m-93 -193h0m23 319h0m73 -189h0m9 66h0m-33 -6h0m-9 109h0m-48 -114h0m-61 77h0m192 -190h0m48 111h0m-299 -72h0m97 107h0m24 122h0m58 -154h0m99 13h0m-231 -130h0m61 38h0m97 -96h0m96 215h0m-131 -99h0m114 16h0m-91 -36h0m-5 114h0m74 -140h0m-164 256h0m90 -109h0m-72 -199h0m-61 9h0m134 -46h0m89 57h0m-230 214h0m-23 28h0m164 -295h0m-18 18h0m-117 31h0m152 -52h0m75 63h0m-162 130h0m54 28h0m-141 80h0m148 7h0m-13 -143h0m-144 120h0m71 -58h0m-55 -147h0m141 86h0m25 -21h0m121 -19h0m2 7h0m-334 14h0m129 77h0m-142 -83h0m62 122h0m-13 6h0m238 -9h0m-85 90h0m-13 -40h0m29 0h0m78 -95h0m-149 87h0m-30 46h0m183 -225h0m-171 -7h0m-24 -106h0m212 223h0m-319 -72h0m348 54h0m-321 -21h0m111 112h0m128 -26h0m-115 -257h0m-36 295h0m-74 -192h0m-4 87h0m165 -58h0m-60 -115h0m4 72h0m149 9h0m-260 122h0m182 -15h0m121 -87h0m-224 -117h0m-81 180h0m79 140h0m-31 -286h0m-48 55h0m9 188h0m73 -264h0m28 307h0m83 -306h0m-76 -26h0m13 189h0m-153 -46h0m38 -81h0m180 242h0m-41 -282h0m-134 230h0m140 -135h0m-73 -119h0m140 280h0m-121 -168h0m79 54h0m82 27h0m-24 -157h0m-81 282h0m-203 -202h0m51 92h0m51 69h0m132 39h0m-182 -26h0m96 -111h0m167 8h0m-69 -188h0m-236 217h0m219 -43h0m87 -36h0m10 33h0m9 19h0m-186 25h0m-95 -18h0m252 -69h0m-103 13h0m26 -16h0m-37 82h0m-129 -136h0m229 18h0m30 51h0m-122 -23h0m6 -74h0m128 144h0m-206 7h0m205 39h0m-59 -170h0m70 160h0m-263 -191h0m44 101h0m2 3h0m99 49h0m-4 -35h0m85 -34h0m-244 174h0m66 -79h0m-85 79h0m-19 -58h0m262 21h0m-228 -225h0m102 -27h0m73 31h0m-214 77h0m-8 87h0m35 -130h0m304 31h0m-333 42h0m32 -2h0m4 131h0m-43 -73h0m174 -57h0m17 -131h0m-150 267h0m17 -183h0m181 46h0m-97 -117h0m-108 108h0m190 63h0m-154 71h0m134 -152h0m-125 172h0m137 -136h0m49 149h0m-33 -166h0m-122 4h0m33 -115h0m-116 87h0m198 86h0m-114 -73h0m75 82h0m-43 -178h0m50 9h0m-72 255h0m140 -3h0m22 8h0m-252 -15h0m127 -145h0m101 -87h0m73 72h0m-52 178h0m-56 30h0m-78 -202h0m-114 -69h0m100 -23h0m66 78h0m-52 27h0m-36 83h0m188 60h0m-175 52h0m77 -219h0m-130 -94h0m-67 201h0m49 71h0m96 17h0m144 -247h0m-98 53h0m10 33h0m-2 71h0m-93 -83h0m4 44h0m213 -40h0m-211 165h0m93 -191h0m58 148h0m-195 -221h0m115 151h0m-87 -72h0m206 69h0m-43 -130h0m77 149h0m-336 7h0m16 -104h0m-33 26h0m52 124h0m278 -34h0m-180 -1h0m199 -124h0m-331 92h0m56 57h0m94 -109h0m24 178h0m-27 4h0m-118 -197h0m183 173h0m-16 32h0m-5 -105h0m-145 -208h0m72 12h0m-71 229h0m59 52h0m-57 -54h0m-39 -34h0m14 -168h0m90 -18h0m72 -30h0m-147 32h0m294 181h0m-124 -51h0m-187 54h0m237 -172h0m-202 242h0m137 -110h0m-183 -78h0m208 41h0m-149 -102h0m219 77h0m-79 -92h0m-80 258h0m89 -82h0m-160 -168h0m144 258h0m-14 32h0m129 -223h0m-108 110h0m-105 110h0m-46 -34h0m164 -88h0m-216 -102h0m137 -88h0m110 262h0m-145 -144h0m82 47h0m105 -34h0m11 43h0m35 -68h0m-324 -13h0m116 -100h0m165 46h0m-165 244h0m120 -252h0m-135 69h0m-84 -63h0m-61 144h0m31 32h0m208 -15h0m-80 13h0m177 -113h0m-195 32h0m-42 133h0m227 -220h0m-153 260h0m-111 -184h0m-54 76h0m215 15h0m-8 86h0m49 -25h0m-116 -291h0m62 221h0m141 -72h0m-290 137h0m106 -51h0m-38 -208h0m-34 36h0m144 240h0m-70 -168h0m76 -110h0m-188 38h0m163 163h0m137 -99h0m-20 -20h0m-93 109h0m-98 -223h0m-124 220h0m62 101h0m47 27h0m158 -266h0m57 122h0m-118 -198h0m1 304h0m96 -91h0m-109 77h0m-122 -215h0m193 200h0m-137 75h0m85 -226h0m-19 -7h0m-125 -35h0m58 34h0m205 113h0m-40 -169h0m-82 -58h0m-9 37h0m-10 120h0m-143 153h0m278 -84h0m-214 -73h0m76 -147h0m-8 126h0m155 95h0m-267 40h0m-6 41h0m52 -188h0m217 79h0m-6 -80h0m-128 106h0m-15 90h0m-111 -271h0m-63 189h0m295 -166h0m31 165h0m-2 -115h0m-219 18h0m148 133h0m-117 65h0m143 -206h0m-60 14h0m-208 45h0m166 -161h0m-109 29h0m265 89h0m-228 -20h0m109 -93h0m-46 199h0m-168 5h0m274 -147h0m-134 232h0m187 -117h0m-29 -11h0m-296 38h0m185 3h0m-80 -101h0m124 -116h0m-130 8h0m80 120h0m96 -43h0m-274 89h0m137 143h0m-143 -213h0m-7 94h0m56 -126h0m74 222h0m51 -295h0m116 26h0m-185 157h0m224 -61h0m-299 150h0m148 -73h0m102 -3h0m-276 -16h0m-8 -76h0m294 -57h0m-224 13h0m-72 90h0m58 -82h0m7 216h0m234 -231h0m-146 143h0m123 -180h0m-156 -28h0m179 272h0m-152 -40h0m61 -51h0m-4 55h0m-206 -9h0m216 -7h0m150 -89h0m-142 65h0m-174 11h0m28 -177h0m-74 196h0m192 -198h0m-64 -25h0m-90 61h0m111 73h0m69 -16h0m71 -45h0m-174 60h0m-45 156h0m219 -172h0m-143 -99h0m-11 281h0m164 -159h0m-31 126h0m68 -71h0m-152 122h0m8 -8h0m24 -4h0m0 -85h0m-105 104h0m61 -24h0m170 -180h0m-76 -81h0m-66 304h0m64 -304h0m-206 260h0m236 -16h0m-98 -173h0m13 192h0m54 -253h0m-211 214h0m164 -75h0m-24 117h0m150 -186h0m-227 92h0m7 -167h0m-4 96h0m-93 56h0m288 -93h0m-286 -56h0m158 103h0m-38 -13h0m-13 47h0m-63 97h0m38 -156h0m93 -123h0m1 35h0m14 146h0m55 116h0m-130 -177h0m69 176h0m-169 -35h0m-4 -135h0m2 135h0m101 66h0m-37 -304h0m35 -19h0m-5 217h0m-7 -110h0m-65 180h0m63 -143h0m14 -42h0m-14 -110h0m130 68h0m-58 163h0m13 -6h0m-199 -35h0m198 146h0m18 -232h0m82 -5h0" stroke="#3a3520" stroke-width="6.6" stroke-linecap="round" fill="none"/><g fill="#ffe566"><circle cx="2373.3" cy="829.9" r="18.8"/><circle cx="2301.1" cy="829.9" r="18.8"/><circle cx="2301.1" cy="902.1" r="18.8"/><circle cx="2373.3" cy="902.1" r="18.8"/><circle cx="2487.9" cy="825.6" r="18.8"/><circle cx="2447.5" cy="755.7" r="18.8"/><circle cx="2377.6" cy="715.3" r="18.8"/><circle cx="2296.8" cy="715.3" r="18.8"/><circle cx="2226.9" cy="755.7" r="18.8"/><circle cx="2186.5" cy="825.6" r="18.8"/><circle cx="2186.5" cy="906.4" r="18.8"/><circle cx="2226.9" cy="976.3" r="18.8"/><circle cx="2296.8" cy="1016.7" r="18.8"/><circle cx="2377.6" cy="1016.7" r="18.8"/><circle cx="2447.5" cy="976.3" r="18.8"/><circle cx="2487.9" cy="906.4" r="18.8"/></g><path d="M2225 956h0m16 0h0m-45 -214h0m94 74h0m209 23h0m-233 -61h0m-50 168h0m94 -63h0m4 9h0m-42 -64h0m84 195h0m-143 -186h0m-39 80h0m40 67h0m249 -78h0m-101 -199h0m-72 180h0m95 6h0m-37 -59h0m97 -60h0m54 31h0m-229 -77h0m42 -6h0m123 11h0m57 191h0m-125 108h0m100 -122h0m-3 -4h0m-152 -54h0m142 -111h0m-11 -2h0m20 260h0m-165 -4h0m-100 -104h0m-5 -44h0m311 86h0m-75 35h0m-195 22h0m151 -261h0m91 200h0m-6 -12h0m-73 -27h0m-2 -52h0m-122 -114h0m244 88h0m-213 221h0m94 -17h0m-23 18h0m1 -148h0m-5 -40h0m3 40h0m-164 86h0m188 -250h0m71 18h0m-156 174h0m193 -35h0m-333 35h0m61 -140h0m227 -31h0m-299 171h0m311 -8h0m-39 -160h0m-147 287h0m42 -134h0m46 -206h0m-149 258h0m163 -223h0m-14 130h0m143 -16h0m-124 -124h0m-222 99h0m300 175h0m-39 -39h0m-155 -111h0m195 87h0m-306 -8h0m261 54h0m-5 0h0m-64 -79h0m104 -125h0m-89 116h0m-8 -160h0m-4 89h0m-206 84h0m123 -7h0m48 -48h0m-114 125h0m170 -121h0m122 42h0m-223 108h0m106 -104h0m-111 116h0m-2 -107h0m23 -54h0m-72 -79h0m252 206h0m5 -94h0m-120 35h0m-71 -73h0m136 143h0m-186 -241h0m-84 74h0m149 -90h0m80 268h0m68 -7h0m-242 -6h0m3 -70h0m138 -5h0m115 -80h0m-261 149h0m257 -7h0m-44 -223h0m-107 164h0m89 94h0m-117 -277h0m-64 280h0m83 -139h0m176 19h0m-317 -73h0m50 131h0m32 -201h0m-86 185h0m152 63h0m-131 -104h0m25 119h0m173 -149h0m-71 143h0m1 -5h0m-72 -219h0m42 110h0m152 -143h0m-189 31h0m230 37h0m-218 171h0m-50 -77h0m283 24h0m-171 -211h0m-35 113h0m94 154h0m-80 -290h0m53 206h0m42 -1h0m-104 74h0m194 -219h0m-173 240h0m167 -160h0m-128 66h0m44 100h0m53 -271h0m27 37h0m-4 -24h0m-103 140h0m-4 -184h0m126 184h0m-212 131h0m211 -92h0m-197 -89h0m182 -19h0m-255 30h0m215 117h0m44 -139h0m-82 197h0m-27 -181h0m-120 123h0m227 -61h0m4 -58h0m-215 167h0m20 14h0m-76 -119h0m185 -211h0m-2 332h0m-31 -120h0m33 -218h0m-94 6h0m-96 198h0m120 114h0m142 -209h0m-108 -87h0m111 261h0m-262 -122h0m253 -81h0m-149 -87h0m-99 59h0m151 91h0m-174 -35h0m107 16h0m-92 64h0m115 148h0m-72 -49h0m152 -149h0m-2 -124h0m-33 132h0m12 -81h0m92 203h0m-184 -129h0m-30 148h0m114 -65h0m-5 -98h0m122 24h0m-100 79h0m-178 -160h0m183 155h0m-82 -28h0m68 0h0m-161 -53h0m143 178h0m-136 -50h0m-25 -216h0m99 -46h0m86 294h0m126 -85h0m-108 113h0m36 -255h0m-257 82h0m282 -71h0m-168 -47h0m98 91h0m-13 63h0m77 -162h0m-165 107h0m215 90h0m-290 59h0m178 57h0m-1 -117h0m56 -147h0m-139 259h0m-103 -137h0m3 -52h0m107 -115h0m-8 305h0m-103 -273h0m77 143h0m7 101h0m9 -150h0m107 202h0m33 -72h0m22 -211h0m-70 117h0m49 81h0m-155 -232h0m178 33h0m-264 116h0m111 -39h0m-93 -96h0m152 -44h0m-75 101h0m-100 33h0m131 -130h0m70 198h0m-187 -24h0m65 -167h0m31 167h0m2 163h0m67 -126h0m-181 -115h0m327 26h0m-129 82h0m-166 77h0m296 -78h0m-32 8h0m-116 -36h0m23 24h0m-87 -95h0m-100 25h0m155 3h0m-47 189h0m-10 2h0m169 -195h0m-73 65h0m-18 -92h0m135 94h0m-191 -16h0m-159 14h0m270 -170h0m-202 262h0m12 -262h0m229 78h0m17 -12h0m-31 188h0m-297 -78h0m273 -145h0m-147 -65h0m210 229h0m-310 -124h0m169 27h0m-84 -106h0m96 -27h0m-37 203h0m-135 60h0m82 60h0m-31 -264h0m-20 199h0m75 94h0m95 -324h0m91 164h0m-40 -151h0m-241 57h0m83 46h0m67 52h0m-196 -52h0m132 -32h0m-11 -3h0m-78 90h0m161 107h0m95 -17h0m1 8h0m-71 30h0m43 -41h0m-27 -259h0m-53 288h0m-149 -26h0m83 -253h0m163 225h0m-66 80h0m-26 -327h0m-148 178h0m-38 -71h0m258 -71h0m-225 16h0m185 -29h0m-75 103h0m49 -94h0m-3 280h0m34 -200h0m-150 125h0m114 -27h0m-193 -93h0m122 -140h0m74 29h0m78 235h0m-137 -151h0m61 43h0m0 73h0m89 -9h0m-93 -196h0m-118 248h0m187 25h0m-115 30h0m-23 -323h0m67 149h0m-122 -64h0m-52 149h0m20 -18h0m-4 -22h0m241 66h0m-8 30h0m-32 -161h0m-42 1h0m-188 68h0m321 37h0m-4 -4h0m-167 -102h0m85 167h0m-220 -65h0m208 79h0m74 -181h0m-155 -112h0m-3 291h0m68 32h0m-181 -150h0m40 -154h0m220 233h0m-253 -206h0m267 81h0m-81 -133h0m-8 175h0m-34 117h0m-60 32h0m36 -115h0m-19 84h0m164 -99h0m-18 56h0m-285 -128h0m129 -12h0m152 -95h0m-270 117h0m186 159h0m144 -90h0m-292 -120h0m250 -33h0m-148 74h0m149 74h0m-262 -140h0m-31 133h0m7 -55h0m215 -21h0m-33 74h0m29 10h0m91 -11h0m-185 -17h0m-97 98h0m114 -81h0m163 34h0m-258 34h0m176 -274h0m-92 168h0m-65 81h0m206 18h0m-17 31h0m10 -240h0m-154 -13h0m191 260h0m-192 -255h0m183 29h0m-154 81h0m-55 140h0m57 -99h0m55 -184h0m144 226h0m-330 -122h0m169 -103h0m-65 213h0m-56 37h0m160 74h0m-70 -140h0m-108 -122h0m100 148h0m-103 64h0m63 -246h0m207 158h0m-197 -187h0m222 119h0m-4 27h0m-133 27h0m-65 6h0m5 -2h0m-21 -181h0m-9 208h0m82 -182h0m-179 202h0m148 -18h0m-21 -61h0m195 -15h0m-51 -107h0m-146 161h0m-92 121h0m185 6h0m-37 -295h0m-206 169h0m229 35h0m-182 -2h0m173 -190h0m-170 203h0m72 -34h0m227 11h0m-51 97h0m-174 -7h0m1 -116h0m47 -80h0m130 -14h0m-44 224h0m-130 -194h0m189 17h0m-265 -95h0m-6 106h0m253 114h0m-80 -162h0m104 127h0m-294 11h0m52 51h0m-15 -212h0m236 -9h0m-253 39h0m313 13h0m-347 100h0m26 -115h0m27 -69h0m182 304h0m-45 -198h0m149 -23h0m-227 193h0m-2 -193h0m110 20h0m-94 -140h0m3 102h0m-127 98h0m146 -180h0m-111 228h0m254 -204h0m12 172h0m-190 127h0m158 -51h0m-145 -103h0m94 12h0m-208 21h0m88 54h0m22 -98h0m-100 -119h0m116 54h0m44 98h0m-35 -197h0m3 121h0m-12 50h0m-23 47h0m162 -195h0m-131 183h0m83 93h0m3 -315h0m-235 198h0m76 -116h0m47 68h0m70 -144h0m-138 77h0m70 -49h0m14 308h0m154 -259h0m-258 71h0m76 -152h0m15 149h0m-70 110h0m282 -131h0m-213 -96h0m-121 77h0m301 174h0m-88 -91h0m77 78h0m-203 -238h0m-71 79h0m154 88h0m41 138h0m-8 -39h0m-177 -159h0m93 86h0m18 -190h0m32 293h0m13 -310h0m94 280h0m-159 -103h0m80 -163h0m67 9h0m-73 269h0m-7 -164h0m119 -4h0m-195 -140h0m107 295h0m-135 -255h0m-98 164h0m48 86h0m86 -73h0m-87 -104h0m184 -75h0m-185 67h0m233 162h0m-67 -285h0m130 207h0m-173 -78h0m42 195h0m149 -91h0m-326 -108h0m213 103h0m-113 -72h0m160 -65h0m42 117h0m-17 18h0m-164 -214h0m-63 291h0m44 -297h0m-77 53h0m168 -10h0m-26 103h0m2 22h0m31 19h0m-91 5h0m-50 96h0m-74 -78h0m325 22h0m-222 -18h0m-91 -99h0m180 115h0m-43 -86h0m-156 -6h0m256 -74h0m-214 -15h0m45 245h0m124 -100h0m-10 -184h0m-59 222h0m-19 -103h0m159 -79h0m-172 -23h0m204 88h0m-273 -56h0m117 91h0m-111 -73h0m92 88h0m51 167h0m-169 -133h0m20 108h0m-3 -175h0m156 192h0m-139 -16h0m211 -14h0m-190 -32h0m12 -188h0m-54 48h0m-13 -2h0m175 76h0m30 -60h0m105 14h0m-219 -102h0m127 285h0m-217 -180h0m220 175h0m-21 -147h0m-14 -64h0m-124 -54h0m193 20h0m-197 -7h0m-5 220h0m234 -161h0m-15 95h0m26 -114h0m-133 -79h0m-112 41h0m133 -18h0m-55 -45h0m154 57h0m-232 18h0m121 23h0m83 190h0m-279 -194h0m220 21h0m-64 6h0m-147 58h0m293 -58h0m-101 94h0m7 -234h0m-171 214h0m285 -16h0m-308 41h0m177 -41h0m169 -71h0m-278 165h0m0 -15h0m30 -229h0m78 166h0m10 126h0m7 -296h0m-71 -38h0m63 160h0m135 -9h0m-296 62h0m171 -218h0m-60 200h0m85 13h0m-32 98h0m-85 37h0m164 -251h0m-269 16h0m276 -27h0m-111 238h0m-66 32h0m91 -14h0m-188 -99h0m226 -48h0m55 -107h0m-248 -17h0m157 170h0m96 61h0m-168 -108h0m80 37h0m20 -216h0m-191 122h0m-35 86h0m174 5h0m-133 2h0m171 -219h0m-194 192h0m296 -4h0m-301 40h0m282 51h0m-150 -243h0m180 156h0m2 40h0m-219 -12h0m190 -3h0m-75 120h0m102 -81h0m-41 -2h0m-99 -50h0m-115 -154h0m-73 78h0m309 100h0m-169 -231h0m159 195h0m-1 -155h0m-240 42h0m198 -17h0m-107 259h0m42 6h0m-204 -175h0m231 -29h0m-163 -80h0m97 119h0m110 131h0m-87 54h0m33 -127h0m-64 -217h0m8 308h0m-164 -107h0m217 133h0m-151 -300h0m-43 187h0m330 -24h0m-233 -184h0m-72 203h0m253 42h0m-259 -117h0m167 47h0m-132 -149h0m248 102h0m-176 -28h0m79 103h0m-182 -144h0m160 276h0m136 -210h0m-168 -131h0m31 14h0m73 251h0m-132 -96h0m182 12h0m-166 -70h0m169 73h0m24 -49h0m-273 164h0m131 -155h0m-54 -40h0m75 87h0m-125 -186h0m-75 209h0m92 -111h0m-74 36h0m112 -135h0m-160 102h0m12 18h0m206 -132h0m-137 69h0m-49 158h0m294 -84h0m-122 -145h0m29 236h0m-83 -47h0m-62 95h0m144 -108h0m-72 46h0m72 -85h0m-121 63h0m-84 -89h0m212 -79h0m-166 0h0m12 272h0m240 -153h0m-17 -107h0m-98 140h0m105 -42h0m-254 -68h0m-25 70h0m179 -145h0m-157 81h0m104 122h0m70 20h0m-27 -197h0m-116 276h0m-43 -169h0m183 14h0m-149 -59h0m223 -22h0m9 -6h0m-282 133h0m193 110h0m-96 -104h0m-112 -57h0m109 -114h0m151 233h0m-143 -139h0m173 89h0m-77 -172h0m124 170h0m-44 61h0m-165 -232h0m-22 89h0m187 1h0m-193 180h0m235 -169h0m-224 -12h0m221 94h0m-144 104h0m14 -100h0m116 -120h0m-289 118h0m243 34h0m-44 76h0m-26 -291h0m-24 301h0m44 -178h0m-158 99h0m78 -256h0m120 300h0m-193 -248h0m230 82h0m-260 126h0m152 -42h0m101 -8h0m-298 -83h0m136 168h0m-20 35h0m60 -152h0m35 -147h0m81 224h0m23 -36h0m-18 -31h0m-55 118h0m-98 18h0m-49 -288h0m-78 190h0m190 -236h0m35 53h0m-175 39h0m113 121h0m113 -140h0m-175 55h0m19 179h0m-147 -175h0m120 172h0m188 -139h0m-35 -119h0m-120 66h0m-81 185h0m-56 -104h0m190 -155h0m-156 11h0m228 38h0m-151 -57h0m28 89h0m112 -63h0m23 203h0m-107 -141h0m53 205h0m-39 -311h0m8 19h0m-127 229h0m270 -129h0m-307 -77h0m-27 164h0m218 -1h0m-62 4h0m178 -95h0m-136 67h0m-17 -44h0m-10 169h0m-56 -119h0m-7 -193h0m-83 220h0m-28 -20h0m145 110h0m35 -275h0m29 11h0m54 225h0m32 -216h0m11 178h0m-265 47h0m-24 -178h0m17 -47h0m193 255h0m77 -181h0m-267 -65h0m28 195h0m-67 -133h0m56 176h0m171 -280h0m100 168h0m-272 -114h0m10 223h0m233 -40h0m-261 -55h0m197 -195h0m-115 327h0m171 -299h0m-19 37h0m27 67h0m-113 -19h0m6 98h0m19 113h0m99 -112h0m-15 -177h0m-97 131h0m-61 -62h0m61 35h0m-195 -19h0m295 -59h0m-83 76h0m83 -24h0m-105 87h0m65 77h0m-170 -225h0m135 145h0m-69 -2h0m-33 136h0m234 -216h0m-153 -97h0m3 192h0m113 -42h0m-26 -96h0m-209 216h0m-5 -11h0m229 -84h0m-192 -194h0m206 101h0m-166 183h0m-39 -73h0m-5 -193h0m81 295h0m-43 -295h0m-110 102h0m39 -65h0m63 161h0m-147 -18h0m280 88h0m62 -163h0m-54 -47h0m19 142h0m-172 -226h0m176 97h0m-80 108h0m73 98h0m-98 -314h0m-98 39h0m-77 194h0m47 37h0m123 -75h0m-35 -62h0m34 69h0m-72 141h0m-77 -304h0m294 205h0m-15 -10h0m10 -106h0m-311 -7h0m172 83h0m-7 -56h0m-45 86h0m185 -72h0m-129 73h0m-6 -195h0m-149 175h0m-6 76h0m-1 -150h0m88 95h0m-10 -110h0m-68 90h0m264 -21h0m-272 15h0m99 -49h0m66 -38h0m-169 86h0m1 -171h0m150 -3h0m-148 92h0m158 198h0m-184 -91h0m300 -30h0m-87 -193h0m-12 181h0m-65 115h0m-77 -228h0m214 183h0m-140 75h0m122 -56h0m-49 -56h0m2 89h0m-6 -268h0m75 257h0m-249 -81h0m110 91h0m-38 6h0m112 23h0m-79 -293h0m76 -4h0m-74 275h0m-108 -175h0m77 -141h0m91 152h0m-87 -140h0m74 321h0m-62 8h0m-84 -289h0m259 69h0m-274 24h0m79 -10h0m210 -23h0m-92 42h0m-73 -6h0m54 -95h0m38 -38h0m-58 131h0m-62 -141h0m186 195h0m-100 -193h0m98 235h0m-257 -157h0m248 156h0m-8 51h0m-100 -173h0m-147 20h0m290 102h0m1 -116h0m-224 -92h0m107 178h0m-198 26h0m95 70h0m192 -75h0m-81 -26h0m-86 107h0m27 -95h0m-21 0h0m-107 1h0m176 -90h0m74 -52h0m-145 151h0m85 -102h0m65 140h0m-182 -38h0m-59 39h0m138 -243h0m-196 193h0m301 -145h0m-80 59h0m77 -48h0m-29 211h0m-54 -256h0m86 257h0m-35 -241h0m-227 239h0m81 43h0m-2 -25h0m77 -312h0m84 47h0m-91 168h0m5 102h0m147 -205h0m-219 20h0m-50 -85h0m72 106h0m6 46h0m-118 -12h0m300 41h0m-29 -13h0m-102 77h0m9 -139h0m-124 128h0m117 -245h0m-46 123h0m-120 41h0m82 -162h0m-43 262h0m114 15h0m149 -191h0m-183 197h0m66 -10h0m-73 -186h0m-26 -13h0m14 234h0m112 -136h0m-115 130h0m79 -186h0m-87 77h0m155 85h0m-140 -7h0m-141 -148h0m89 -102h0m137 -50h0m-145 266h0m206 24h0m-64 -140h0m-180 60h0m107 2h0m191 -24h0m-225 5h0m82 -90h0m30 76h0m-23 152h0m-190 -224h0m257 -69h0m-265 96h0m258 -88h0m-1 237h0m-50 -172h0m15 220h0m113 -199h0m-317 11h0m167 60h0m110 -78h0m-292 56h0m110 -40h0m-99 80h0m321 -91h0m-304 -11h0m42 -62h0m131 -62h0m-145 304h0m209 9h0m-123 -159h0m-140 32h0m124 -7h0m-20 -42h0m109 196h0m-20 -142h0m58 -118h0m-31 244h0m-129 -185h0m45 20h0m-85 -73h0m59 64h0m-70 -109h0m139 88h0m-177 113h0m138 -9h0m-102 -176h0m147 269h0m-134 -63h0m169 74h0m80 -219h0m20 -1h0m-177 41h0m-18 1h0m10 178h0m18 -298h0m24 270h0m-76 -87h0m135 54h0m-113 -233h0m-69 200h0m52 91h0m148 -43h0m-34 -146h0m-208 8h0m204 -127h0m-90 265h0m-9 -43h0m24 74h0m134 -14h0m-135 -179h0m189 22h0m-212 45h0m-2 2h0m80 -187h0m1 35h0m107 153h0m-229 -131h0m222 67h0m-156 79h0m-29 15h0m109 103h0m-152 -22h0m60 -75h0m-123 -69h0m210 -19h0m105 85h0m-332 -85h0m75 127h0m147 -29h0m82 -118h0m-167 152h0m-93 -207h0m112 52h0m151 88h0m-34 53h0m-135 -70h0m175 -40h0m-128 43h0m109 -41h0m-216 -102h0m204 35h0m32 110h0m-91 6h0m-70 -6h0m131 104h0m-72 -75h0m99 -107h0m-8 2h0m23 112h0m-274 -90h0m24 133h0m85 -139h0m-29 18h0m20 38h0m-135 40h0m252 36h0m-204 -9h0m54 -85h0m-119 -52h0m312 0h0m-45 157h0m75 -58h0m-28 8h0m-183 112h0m3 -106h0m10 -229h0m-61 283h0m38 -166h0m-116 19h0m110 58h0m-79 27h0m273 -120h0m30 108h0m-148 -1h0m-174 21h0m309 -122h0m-317 6h0m201 105h0m12 -100h0m123 82h0m-287 -114h0m-27 141h0m265 58h0m-291 -87h0m342 34h0m-117 -201h0m75 179h0m-78 -89h0m-4 11h0m12 195h0m-209 -48h0m4 0h0m274 -86h0m-187 -6h0m-10 139h0m94 -170h0m-46 52h0m-153 -39h0m144 -140h0m-112 188h0m113 -101h0m-7 216h0m-81 -39h0m240 -212h0m-87 65h0m0 200h0m-80 -44h0m-60 -267h0m50 90h0m-24 83h0m50 111h0m-120 -167h0m37 143h0m91 -181h0m-158 106h0m224 -9h0m-158 -132h0m215 177h0m-222 -123h0m106 43h0m168 -35h0m-37 -26h0m-19 -44h0m-127 -62h0m113 289h0m46 -183h0m-109 -93h0m-158 174h0m104 110h0m145 -190h0m-281 84h0m137 -37h0m-102 -32h0m298 17h0m-294 -28h0m24 -77h0m76 -29h0m-125 131h0m283 68h0m-93 -108h0m-67 183h0m-29 -263h0m106 305h0m21 -130h0m26 -173h0m-189 264h0m-71 -11h0m304 -98h0m-198 -168h0m-11 314h0m-95 -108h0m212 -31h0m92 -80h0m-119 15h0m16 31h0m-92 45h0m157 93h0m17 -3h0m-168 -147h0m31 37h0m-99 -142h0m137 -8h0m-171 158h0m316 -46h0m-218 71h0m189 -155h0m-309 80h0m298 -10h0m-70 2h0m-95 209h0m2 -153h0m72 160h0m15 -5h0m-99 -155h0m71 -72h0m111 104h0m-282 -108h0m189 191h0m-70 -79h0m55 -39h0m-106 -127h0m103 162h0m18 132h0m-8 -354h0m68 300h0m-269 -101h0m117 7h0m24 17h0m-132 2h0m49 80h0m89 -109h0m-30 136h0m-114 -202h0m297 -82h0m-8 23h0m-160 233h0m27 -106h0m-42 -190h0m151 31h0m50 153h0m-204 22h0m23 -177h0m185 148h0m-246 90h0m225 -75h0m-240 103h0m283 -163h0m-38 8h0m35 78h0m-122 -188h0m-22 304h0m-9 -139h0m-68 -168h0m128 222h0m51 14h0m-2 -136h0m-222 150h0m125 -136h0m-23 -25h0m90 -72h0m-227 159h0m-37 -87h0m293 153h0m-146 -78h0m175 -89h0m-76 -39h0m-168 -27h0m93 150h0m90 94h0m-58 19h0m2 -1h0m-216 -95h0m50 51h0m75 -67h0m87 145h0m-151 -35h0m96 7h0m79 -5h0m-146 -11h0m118 -141h0m-98 143h0m-63 -160h0m178 -103h0m-133 23h0m128 -23h0m-65 188h0m-113 -198h0m41 240h0m148 -106h0m93 35h0m-124 25h0m-44 -25h0m-87 69h0m211 32h0m-248 -183h0m163 38h0m-156 37h0m84 37h0m12 -105h0m-80 -46h0m250 222h0m-183 40h0m5 -37h0m187 -71h0m-182 78h0m-75 -4h0m170 -105h0m-97 -83h0m182 182h0m-223 -229h0m109 87h0m45 181h0m-54 -298h0m73 263h0m-69 -280h0m112 260h0m-282 -164h0m176 98h0m-172 -106h0m94 223h0m-58 -249h0m88 272h0m-69 -76h0m59 -52h0m-98 49h0m81 -237h0m-83 203h0m-16 -129h0m97 -105h0m-136 219h0m154 -105h0m-4 33h0m-118 74h0m326 -15h0m-217 -66h0m-120 3h0m45 -14h0m75 80h0m190 9h0m-32 -148h0m-181 -4h0m93 -68h0m103 35h0m-66 272h0m-163 -267h0m82 271h0m-68 -252h0m-44 137h0m44 80h0m-73 -155h0m199 175h0m-75 -148h0m86 -42h0m-101 204h0m171 -231h0m-249 -38h0m256 -2h0m-79 -7h0m-174 197h0m287 -120h0m-124 6h0m31 218h0m-233 -119h0m33 81h0m273 -96h0m-37 64h0m-82 -113h0m-124 152h0m49 -260h0m-99 197h0m186 58h0m-5 -156h0m122 83h0m-295 -2h0m41 72h0m12 -22h0m1 32h0m90 -82h0m169 -6h0m-66 70h0m-162 -281h0m100 298h0m86 -173h0m-179 -115h0m185 61h0m-218 -26h0m-54 125h0m11 -112h0m99 49h0m201 120h0m-19 -88h0m-202 50h0m73 19h0m72 -164h0m-1 227h0m-17 -1h0m57 -141h0m-269 55h0m240 73h0m32 -116h0m-82 -6h0m-197 -29h0m295 117h0m-97 -12h0m-111 -202h0m38 181h0m38 -57h0m87 -66h0m-238 66h0m188 68h0m117 17h0m-202 75h0m-109 -160h0m196 189h0m-185 -119h0m-43 -88h0m63 173h0m-22 -31h0m-4 -213h0m186 96h0m-66 73h0m32 -214h0m-39 26h0m193 160h0m-331 -45h0m221 -127h0m-119 192h0m118 -24h0m-165 69h0m160 50h0m-211 -84h0m326 -85h0m-329 88h0m261 -193h0m-149 185h0m197 -105h0m-133 -87h0m16 278h0m-143 -42h0m124 -72h0m-43 -76h0m63 38h0m-10 150h0m22 -298h0m-99 204h0m7 13h0m4 -223h0m-49 56h0m61 -23h0m10 -2h0m50 310h0m-201 -137h0m322 -46h0m-280 127h0m103 54h0m2 -316h0m-141 179h0m105 105h0m105 -188h0m-81 233h0m20 -221h0m79 10h0m109 3h0m-145 -104h0m2 148h0m-178 42h0m122 102h0m73 18h0m60 -309h0m-10 24h0m-271 67h0m208 99h0m-128 60h0m76 -78h0m74 -208h0m-114 329h0m41 -127h0m-144 -66h0m39 62h0m144 -70h0m34 183h0m4 -291h0m-40 179h0m-44 131h0m169 -221h0m23 97h0m-66 44h0m31 -175h0m-173 -80h0m-13 140h0m35 17h0m-37 187h0m108 -12h0m34 -265h0m-46 124h0m-165 69h0m-49 -47h0m49 9h0m-43 -120h0m5 7h0m187 79h0m-136 117h0m138 -182h0m-152 160h0m164 -284h0m-7 222h0m63 -175h0m-48 141h0m114 12h0m-198 -40h0m25 -30h0m-57 -102h0m243 87h0m-336 34h0m288 -105h0m-55 77h0m-19 215h0m-103 -193h0m-10 -103h0m45 286h0m136 -31h0m29 -179h0m-4 0h0m-168 34h0m117 126h0m51 -125h0m19 44h0m-245 96h0m192 -25h0m18 -117h0m-93 78h0m142 -15h0m-307 -150h0m189 159h0m-65 103h0m30 -302h0m1 132h0m34 176h0m-200 -265h0m271 64h0m-30 138h0m-212 -5h0m123 -30h0m-46 -77h0m76 152h0m20 -106h0m-37 138h0m-42 -213h0m-34 182h0m-90 -162h0m190 -104h0m-76 293h0m-15 -185h0m-50 -76h0m-37 59h0m2 156h0m8 -166h0m154 185h0m-130 -2h0m147 -297h0m-51 202h0m-14 -97h0m50 70h0m-51 -145h0m73 -24h0m-191 199h0m261 -134h0m-82 -75h0m-99 203h0m83 -216h0m-87 34h0m82 9h0m-52 303h0m-36 -15h0m-88 -136h0m247 -114h0m-152 -57h0m-85 271h0m228 -12h0m22 23h0m-62 11h0m-19 -127h0m-46 17h0m68 -50h0m-223 -21h0m43 -73h0m-27 139h0m104 23h0m26 6h0m-139 -12h0m214 -213h0m-95 158h0m83 -151h0m-62 147h0m-25 -18h0m190 136h0m-120 -135h0m-139 54h0m174 34h0m-10 -72h0m-139 -93h0m130 -12h0m-131 248h0m232 -76h0m-264 -6h0m171 -26h0m-209 30h0m288 83h0m33 -72h0m-97 95h0m-217 -208h0m180 104h0m-116 -148h0m126 154h0m-21 -205h0m33 139h0m-81 144h0m8 -121h0m6 148h0m195 -114h0m-191 -5h0m138 45h0m-229 43h0m-22 -87h0m243 52h0m-243 -63h0m4 71h0m264 -152h0m-258 6h0m-45 10h0m131 16h0m14 -123h0m-23 -21h0m91 180h0m-206 44h0m54 -148h0m90 -60h0m77 305h0m80 -152h0m-45 109h0m-42 29h0m-78 17h0m96 -314h0m84 211h0m-184 -1h0m78 -186h0m-141 34h0m-39 158h0m51 -180h0m176 217h0m-86 -233h0m-145 190h0m22 83h0m98 8h0m-72 -256h0m185 234h0m-143 45h0m139 -39h0m-256 -184h0m258 159h0m-138 -241h0m55 297h0m120 -287h0m22 118h0m-13 71h0m31 -114h0m-134 -3h0m-75 233h0m63 -319h0m25 169h0m-100 -195h0m27 137h0m80 -22h0m-198 1h0m178 185h0m30 -151h0m-212 -46h0m89 48h0m26 -56h0m188 55h0m-249 114h0m36 -58h0m173 97h0m-80 -10h0m51 -253h0m74 95h0m-208 163h0m210 -182h0m-122 215h0m80 -100h0m-24 -161h0m25 -9h0m18 162h0m-11 -82h0m-286 28h0m62 -121h0m-80 162h0m47 -162h0m70 258h0m108 -76h0m5 101h0m-224 -112h0m183 -173h0m-63 69h0m-85 8h0m160 -17h0m85 -36h0m-89 238h0m15 -203h0m62 152h0m-45 -243h0m-79 200h0m-107 -168h0m-13 190h0m199 -129h0m-178 180h0m64 41h0m-35 -262h0m220 -23h0m-266 -3h0m115 -24h0m-73 59h0m252 67h0m-113 157h0m-149 -226h0m80 -67h0m-5 176h0m194 -64h0m-141 -10h0m6 40h0m75 -124h0m-197 19h0m-18 33h0m265 30h0m-278 117h0m67 98h0m145 -85h0m71 -92h0m-178 190h0m71 -307h0m-2 -36h0m17 208h0m69 -69h0m-175 205h0m-17 -19h0m194 -125h0m-102 -11h0m-72 -28h0m193 73h0m-202 -5h0m-112 2h0m23 -103h0m-31 1h0m41 -52h0m-34 41h0m207 -70h0m74 254h0m-150 14h0m67 -15h0m-106 -168h0m40 -126h0m41 328h0m-147 -202h0m172 -85h0m-212 177h0m290 92h0m-176 0h0m115 -112h0m0 126h0m-131 -292h0m95 174h0m-162 17h0m270 -176h0m-26 28h0m-86 248h0m-31 -8h0m116 -57h0m1 -175h0m-48 116h0m-93 19h0m-99 -105h0m201 -104h0m-9 183h0m-34 -52h0m-76 59h0m-106 23h0m217 -103h0m-185 13h0m-2 -8h0m42 138h0m83 -243h0m-45 125h0m107 -147h0m-186 44h0m93 -41h0m-115 85h0m37 207h0m94 -259h0m-19 -35h0m46 305h0m55 18h0m86 -89h0m-296 0h0m185 -193h0m28 170h0m-87 -191h0m-107 41h0m36 -4h0m168 -33h0m-227 170h0m135 20h0m-139 -30h0m95 -50h0m239 -4h0m-159 56h0m15 52h0m-68 -193h0m-89 -3h0m68 298h0m-62 -259h0m143 -59h0m30 18h0m43 251h0m-130 -178h0m83 103h0m-106 107h0m-48 -289h0m272 99h0m-90 182h0m-133 -306h0m117 193h0m-201 23h0m5 -30h0m267 -173h0m-305 92h0m197 211h0m-75 -18h0m-43 -44h0m227 -146h0m-272 85h0m114 -184h0m89 317h0m-6 -206h0m46 166h0m29 -166h0m-159 -131h0m77 344h0m-101 -342h0m-63 260h0m150 79h0m-197 -116h0m209 -6h0m-146 -158h0m118 157h0m34 -191h0m-18 315h0m-172 -134h0m309 -2h0m-266 85h0m158 50h0m-11 -315h0m-209 86h0m300 51h0m-13 50h0m-306 -4h0m346 -97h0m-236 -94h0m-52 241h0m206 -196h0m58 175h0m-318 -111h0m134 33h0m-134 60h0m137 -182h0m-68 227h0m62 73h0m10 -148h0m-114 47h0m185 62h0m-88 -253h0m151 269h0m-138 -157h0m142 -80h0m-93 -38h0m-42 86h0m-73 -86h0m-47 156h0m260 -151h0m-149 -50h0m4 13h0m60 146h0m-9 -33h0m-153 184h0m219 -44h0m-244 -34h0m125 -1h0m196 -3h0m-124 5h0m-188 -118h0m250 -68h0m-155 -33h0m-95 219h0m98 -111h0m172 -41h0m-84 -78h0m113 198h0m-220 145h0m22 -224h0m103 97h0m-111 87h0m23 -118h0m90 -171h0m62 249h0m-249 -40h0m224 -152h0m-65 122h0m-49 -85h0m73 -93h0m-4 29h0m128 89h0m3 13h0m-46 -37h0m-105 10h0m-161 -67h0m-2 77h0m260 -80h0m-179 263h0m42 -77h0m-87 54h0m-40 -168h0m188 26h0m-106 -19h0m67 10h0m-107 -83h0m259 63h0m-186 -95h0m152 43h0m-253 -31h0m246 246h0m21 -167h0m-169 37h0m-130 -1h0m133 -132h0m188 195h0m-50 -107h0m-213 -34h0m215 5h0m-171 235h0m106 -120h0m-221 -60h0m228 190h0m72 -198h0m-274 -12h0m285 118h0m-17 52h0m10 -48h0m-113 -218h0m-180 98h0m25 6h0m96 -113h0m-20 195h0m29 -50h0m-100 118h0m159 -91h0m-156 -100h0m291 54h0m-147 -110h0m4 292h0m143 -100h0m-206 93h0m145 -262h0m-5 1h0m-83 -21h0m-38 133h0m-8 10h0m-137 -66h0m182 134h0m5 -88h0m135 49h0m20 23h0m-237 -19h0m25 -90h0m172 31h0m-83 -33h0m-232 113h0m329 32h0m-284 -141h0m106 37h0m201 66h0m-300 46h0m113 -266h0m73 3h0m-204 234h0m168 -112h0m-200 4h0m301 157h0m-136 -254h0m-54 7h0m-92 192h0m70 60h0m57 22h0m134 -263h0m16 222h0m-208 -8h0m63 83h0m-111 -228h0m2 38h0m-20 75h0m254 31h0m-151 -59h0m-9 9h0m105 127h0m-105 -21h0m9 -169h0m184 -13h0m-308 -3h0m126 17h0m-12 -11h0m135 126h0m-229 -68h0m172 -39h0m-181 -6h0m183 167h0m-83 -203h0m-2 87h0m-67 29h0m5 -164h0m78 99h0m108 -119h0m-185 228h0m173 23h0m123 -156h0m-287 158h0m194 34h0m-127 -294h0m111 295h0m-49 -135h0m-25 126h0m-43 -211h0m-37 -53h0m243 169h0m-318 -21h0m118 -59h0m157 -106h0m-272 179h0m24 -32h0m91 9h0m19 -161h0m4 304h0m135 -259h0m-163 255h0m-80 -208h0m112 198h0m76 -102h0m-154 68h0m134 -294h0m14 300h0m-171 -228h0m251 58h0m-246 168h0m-52 -166h0m324 -21h0m-1 36h0m-192 -108h0m166 164h0m6 0h0m-263 31h0m175 104h0m-140 -261h0m-66 37h0m298 188h0m-82 -160h0m-208 96h0m58 -186h0m142 66h0m31 174h0m58 -168h0m-20 -85h0m-214 37h0m-36 -13h0m199 -51h0m-113 183h0m-91 36h0m46 -166h0m-28 237h0m196 12h0m-81 -192h0m-128 -50h0m11 -30h0m75 301h0m174 -203h0m-86 160h0m-64 -155h0m-29 153h0m-75 -30h0m7 -196h0m-27 120h0m0 -46h0m303 88h0m-18 -110h0m-302 100h0m115 -8h0m95 -25h0m-100 7h0m108 -56h0m-9 -24h0m18 178h0m-129 -75h0m254 -87h0m-328 106h0m180 -202h0m-45 268h0m102 -257h0m33 256h0m49 -89h0m-13 8h0m-75 55h0m-244 -130h0m209 -106h0m-18 71h0m-16 48h0m141 -7h0m-296 30h0m37 -136h0m-13 217h0m60 -65h0m-115 14h0m32 35h0m269 -134h0m-98 -76h0m80 261h0m-155 -142h0m59 -15h0m-148 -67h0m88 151h0m-14 -198h0m-57 9h0m55 170h0m35 -93h0m-108 -60h0m100 60h0m-19 190h0m31 -105h0m-18 -14h0m70 4h0m69 76h0m-112 -40h0m-127 -117h0m126 -106h0m154 227h0m-325 -26h0m136 101h0m93 -153h0m99 42h0m-79 142h0m-197 -75h0m-17 -67h0m179 -32h0m105 -50h0m3 37h0m-79 178h0m-86 -6h0m-25 -315h0m-89 209h0m237 84h0m-153 34h0m-126 -119h0m35 -64h0m47 -87h0m-6 258h0m237 -187h0m-202 10h0m162 143h0m-178 5h0m110 -250h0m-61 298h0m-17 2h0m-11 -319h0m-99 92h0m114 -109h0m24 2h0m-2 18h0m129 12h0m-47 96h0m-102 166h0m20 -110h0m-17 157h0m16 -27h0m75 -119h0m130 -49h0m-168 64h0m-139 -64h0m76 66h0m30 125h0m185 -141h0m-251 -150h0m36 -45h0m10 111h0m151 134h0m50 -138h0m-38 147h0m-71 -69h0m-106 99h0m165 -255h0m-264 160h0m175 14h0m-82 -173h0m86 187h0m-81 -8h0m107 -94h0m8 219h0m79 -103h0m24 -97h0m-27 65h0m-51 -158h0m39 23h0m-196 221h0m251 -144h0m-51 -14h0m-151 167h0m88 -84h0m-71 -30h0m31 -44h0m-47 -124h0m50 278h0m-63 -108h0m21 119h0m186 -85h0m-297 74h0m312 -147h0m-334 -47h0m193 17h0m-94 79h0m6 141h0m92 -333h0m102 187h0m-246 -127h0m48 130h0m10 -24h0m-100 28h0m106 143h0m48 -206h0m-56 45h0m174 -78h0m1 166h0m-99 -160h0m-89 87h0m147 -147h0m-204 29h0m-19 -13h0m148 71h0m-72 81h0m150 -168h0m-79 -6h0m-195 143h0m116 134h0m35 -136h0m84 24h0m-170 87h0m258 -105h0m-217 -55h0m43 -22h0m195 5h0m-79 163h0m-237 -97h0m205 5h0m79 -69h0m-267 -54h0m229 -18h0m-82 260h0m-78 28h0m-101 -222h0m36 -55h0m177 -53h0m-29 194h0m13 44h0m14 101h0m-146 -53h0m41 -284h0m150 38h0m-37 132h0m-67 -26h0m137 43h0m-94 -8h0m-12 8h0m-147 89h0m289 -140h0m-296 -18h0m232 145h0m-130 62h0m-38 -208h0m11 -109h0m218 95h0m-111 192h0m-168 -56h0m139 -53h0m9 107h0m-197 -159h0m26 52h0m298 48h0m-340 -120h0m216 61h0m-93 -80h0m97 -53h0m109 184h0m-129 -81h0m1 -29h0m95 139h0m-164 -69h0m141 120h0m-111 -164h0m44 0h0m-170 82h0m130 105h0m-37 -198h0m150 -80h0m-2 236h0m60 -142h0m-60 127h0m-138 -55h0m-121 -15h0m80 -142h0m108 69h0m-82 181h0m-25 -251h0m232 47h0m-212 200h0m94 -305h0m-5 295h0m-56 -117h0m-128 -71h0m257 154h0m-222 -206h0m114 -44h0m137 33h0m-9 -15h0m52 72h0m-195 82h0m-21 -38h0m110 -135h0m-6 317h0m8 -290h0m51 257h0m-55 -162h0m-81 188h0m42 -330h0m-33 145h0m57 158h0m-95 -183h0m113 22h0m-135 -111h0m212 210h0m-93 -93h0m-87 9h0m-92 -43h0m194 -106h0m-211 92h0m180 233h0m-10 -207h0m-79 -84h0m15 -40h0m-16 332h0m-84 -191h0m-3 89h0m34 25h0m220 -215h0m-202 249h0m-20 -252h0m103 278h0m56 -11h0m-77 -151h0m-107 -36h0m168 -12h0m-1 205h0m67 -257h0m-243 140h0m196 -45h0m-132 136h0m136 -70h0m-179 -157h0m96 89h0m58 86h0m36 -206h0m-108 191h0m28 -207h0m65 -19h0m-137 282h0m-55 -86h0m172 -31h0m-202 -6h0m203 -1h0m131 39h0m-262 -144h0m272 76h0m-5 100h0m-138 83h0m-6 28h0m-72 -115h0m89 4h0m-179 -129h0m9 30h0m177 -120h0m12 13h0m-67 119h0m-10 76h0m70 93h0m77 -156h0m-96 74h0m-90 -72h0m72 -26h0m-19 90h0m176 -84h0m-163 -122h0m90 285h0m-197 -221h0m65 233h0m-114 -70h0m126 -13h0m36 85h0m57 4h0m-59 -106h0m43 -174h0m-167 51h0m283 144h0m-82 -163h0m-37 -24h0m82 91h0m-97 175h0m4 -146h0m-208 42h0m203 -210h0m98 92h0m-147 139h0m124 -135h0m-92 65h0m110 119h0m19 -75h0m-303 37h0m134 -33h0m1 -84h0m115 187h0m-37 9h0m-123 -106h0m38 -86h0m186 32h0m-20 -34h0m-164 -92h0m135 274h0m-41 39h0m-48 -137h0m-38 -52h0m3 -22h0m85 86h0m-22 20h0m-3 70h0m-214 -160h0m2 -28h0m197 116h0m-55 -217h0m-103 249h0m75 -117h0m-1 4h0m179 -73h0m-276 104h0m26 -110h0m-51 74h0m5 45h0m256 102h0m-62 -169h0m56 162h0m-170 -242h0m63 261h0m67 -193h0m-141 -39h0m54 51h0m12 61h0m169 -123h0m-159 -37h0m-21 14h0m11 190h0m116 -19h0m11 -159h0m-60 61h0m-46 96h0m71 104h0m28 -37h0m-119 29h0m-129 -112h0m210 28h0m-110 -176h0m-37 -1h0m-11 -6h0m273 187h0m-203 -32h0m166 19h0m-96 -176h0m-56 -29h0m-25 24h0m-71 22h0m101 269h0m-142 -167h0m304 35h0m-312 -56h0m183 89h0m147 -118h0m-327 115h0m33 3h0m155 98h0m75 -30h0m-212 -29h0m-12 -172h0m226 157h0m-68 -57h0m-79 114h0m121 20h0m-133 -178h0m-32 116h0m-34 -139h0m5 -52h0m110 138h0m64 9h0m-21 85h0m-84 -280h0m78 104h0m-117 -60h0m119 153h0m-110 -165h0m125 -12h0m-204 104h0m-3 77h0m195 -184h0m-64 79h0m-19 -92h0m81 204h0m-183 -3h0m218 -219h0m-70 211h0m-54 91h0m38 -282h0m-7 -31h0m-63 74h0m246 123h0m-103 -197h0m84 121h0m-290 80h0m27 24h0m242 -182h0m-94 158h0m-155 -79h0m16 147h0m-14 9h0m-24 -85h0m294 -68h0m-295 74h0m192 -85h0m65 143h0m-42 -108h0m79 83h0m-112 -210h0m35 -8h0m-19 38h0m-75 178h0m4 -1h0m-104 6h0m10 -91h0m239 -57h0m-163 121h0m107 102h0m-109 -122h0m78 -157h0m95 48h0m-62 -71h0m-29 323h0m-82 7h0m-88 -107h0m310 -9h0m-168 -36h0m61 -170h0m-107 133h0m216 -17h0m-335 10h0m121 8h0m177 -30h0m-190 197h0m80 -121h0m41 35h0m46 -184h0m-53 257h0m-215 -116h0m178 41h0m-122 88h0m44 -299h0m194 91h0m-273 41h0m293 47h0m-179 -178h0m-67 258h0m-1 -213h0m-83 73h0m199 83h0m-117 74h0m35 -285h0m-67 43h0m302 72h0m-260 173h0m186 -221h0m44 116h0m-268 -118h0m290 122h0m-263 70h0m113 -236h0m-45 289h0m66 -11h0m89 -100h0m-149 -82h0m153 173h0m-88 -104h0m-82 -2h0m57 -187h0m35 305h0m-18 -2h0m-215 -165h0m270 -82h0m-103 124h0m48 -146h0m10 -34h0m-179 128h0m99 20h0m-69 114h0m213 -222h0m20 241h0m26 -91h0m-60 75h0m-75 67h0m-117 -88h0m-69 -28h0m187 -93h0m-136 171h0m88 -58h0m-3 93h0m-95 -39h0m147 -67h0m24 1h0m-20 -189h0m26 -30h0m41 270h0m-221 -17h0m165 34h0m5 -260h0m-175 74h0m157 -95h0m-205 102h0m240 203h0m-8 -194h0m-76 -21h0m-10 84h0m14 -63h0m-24 -86h0m71 183h0m12 118h0m-17 -310h0m116 122h0m-6 -41h0m-231 -41h0m196 239h0m-119 -163h0m0 194h0m-23 -340h0m112 296h0m-121 -263h0m15 306h0m59 -138h0m94 103h0m-177 -290h0m-36 34h0m119 250h0m126 -198h0m-270 193h0m-12 -169h0m182 221h0m-105 -26h0m-9 -300h0m3 6h0m-55 270h0m212 -204h0m73 21h0m-226 -66h0m193 91h0m24 12h0m-31 141h0m-164 -245h0m-106 13h0m241 232h0m-92 -79h0m172 -85h0m-42 28h0m-179 -112h0m-98 147h0m274 27h0m-22 -71h0m-58 -20h0m-175 91h0m-22 -107h0m198 103h0m80 69h0m-224 -213h0m167 11h0m-210 -12h0m179 153h0m124 0h0m-50 -184h0m2 96h0m-183 197h0m41 -186h0m-119 -27h0m87 18h0m138 -67h0m-178 223h0m208 -248h0m35 111h0m-168 51h0m127 56h0m-218 38h0m59 -100h0m-41 79h0m-65 -170h0m249 172h0m-61 18h0m95 -87h0m-76 -14h0m-143 87h0m-38 -173h0m258 183h0m-74 -158h0m-135 163h0m139 14h0m-14 -6h0m86 -243h0m-261 -18h0m272 99h0m-271 145h0m292 -64h0m-256 55h0m-34 -129h0m224 106h0m-251 -23h0m139 108h0m-79 -278h0m254 165h0m-285 -177h0m284 126h0m-197 -177h0m148 82h0m34 30h0m-250 -34h0m-43 16h0m17 189h0m100 -95h0m70 147h0m-7 -219h0m-6 208h0m28 -15h0m-108 -280h0m111 299h0m-237 -102h0m240 -209h0m-87 206h0m11 -101h0m135 -48h0m-239 191h0m173 -106h0m-102 39h0m147 -133h0m-253 159h0m103 66h0m-84 -194h0m197 33h0m25 154h0m-25 -264h0m45 247h0m-74 69h0m101 -200h0m-150 55h0m-36 -192h0m75 209h0m-76 107h0m146 -36h0m-35 -71h0m-167 -180h0m73 210h0m-89 -186h0m88 247h0m78 -65h0m-145 -158h0m-18 116h0m253 -107h0m-178 -50h0m212 150h0m-52 76h0m-187 28h0m-36 -252h0m206 265h0m-238 -196h0m43 191h0m88 -263h0m-162 86h0m147 101h0m-61 -165h0m137 55h0m-58 116h0m31 -98h0m-39 203h0m-18 -176h0m-4 186h0m-92 -122h0m181 -99h0m120 10h0m-112 -104h0m-111 297h0m17 -173h0m142 145h0m-84 -82h0m-148 1h0m101 -181h0m-23 7h0m116 -31h0m-84 122h0m149 -17h0m-109 32h0m37 54h0m-179 -4h0m91 -188h0m76 231h0m124 -91h0m-151 -137h0m-72 -6h0m154 261h0m-221 -231h0m-44 104h0m221 66h0m56 -162h0m-75 304h0m-217 -131h0m209 -102h0m-42 91h0m-123 -80h0m105 96h0m-102 67h0m288 -178h0m-24 26h0m-3 87h0m-80 -193h0m-99 -41h0m144 305h0m-196 -217h0m-69 59h0m21 92h0m180 -192h0m117 158h0m-287 66h0m113 36h0m-10 -75h0m63 -223h0m-52 324h0m134 -25h0m-207 -254h0m221 2h0m-235 43h0m-50 85h0m118 -182h0m210 140h0m-36 64h0m23 -13h0m-95 -137h0m-210 146h0m101 25h0m-100 -69h0m176 -29h0m95 -46h0m-273 39h0m205 -109h0m-86 115h0m65 224h0m-163 -53h0m-51 -175h0m247 -117h0m68 129h0m-185 209h0m224 -141h0m-287 -117h0m133 242h0m8 -297h0m0 11h0m-60 5h0m-23 291h0m99 -164h0m59 140h0m-180 -243h0m109 -60h0m105 279h0m-273 -135h0m273 58h0m-36 64h0m-133 -233h0m-90 236h0m135 49h0m95 -235h0m-135 250h0m-87 -261h0m253 61h0m-76 -107h0m-85 297h0m83 -207h0m-77 75h0m-138 -39h0m-9 -20h0m291 84h0m-150 88h0m-33 34h0m171 -265h0m-208 198h0m-71 -158h0m68 156h0m-35 -137h0m91 -23h0m-92 99h0m194 112h0m-227 -191h0m302 11h0m-237 151h0m92 -105h0m-11 -71h0m152 -5h0m-173 -114h0m-32 204h0m93 8h0m131 -47h0m-309 -17h0m329 -37h0m-214 -124h0m-73 93h0m162 -75h0m123 226h0m-221 64h0m181 -247h0m-130 149h0m164 3h0m-193 -201h0m62 34h0m-72 6h0m187 69h0m-123 110h0m89 48h0m-208 5h0m225 -165h0m-79 43h0m-114 -160h0m-74 210h0m270 13h0m20 -37h0m-102 174h0m-83 -183h0m48 -47h0m138 28h0m-121 160h0m-4 -186h0m3 221h0m-70 -119h0m47 -72h0m103 -107h0m17 261h0m-91 50h0m-42 -28h0m136 -24h0m-9 -178h0m-169 37h0m-4 145h0m26 -151h0m-59 -74h0m260 155h0m-292 -6h0m77 -39h0m-8 147h0m-55 -262h0m47 -67h0m-33 267h0m131 -163h0m11 109h0m-116 -90h0m-37 163h0m133 -111h0m0 45h0m-209 -6h0m130 65h0m171 2h0m-7 -216h0m-4 17h0m-211 -13h0m62 261h0m1 -151h0m158 109h0m-252 -7h0m-31 -145h0m24 -43h0m282 6h0m-244 -37h0m240 42h0m-271 99h0m120 -87h0m142 98h0m-129 -7h0m-154 -26h0m18 -114h0m182 140h0m74 62h0m-210 -202h0m146 237h0m-29 -264h0m-97 147h0m54 -179h0m-104 28h0m207 249h0m-257 -74h0m5 7h0m21 -162h0m86 282h0m-15 -318h0m202 192h0m-158 -35h0m-30 -69h0m-2 -85h0m124 71h0m-162 -32h0m78 51h0m146 68h0m-150 -167h0m-145 174h0m40 -124h0m288 154h0m-289 -171h0m119 151h0m52 97h0m-216 -100h0m150 108h0m-103 -237h0m-18 123h0m161 -183h0m-79 -7h0m-2 105h0m-67 106h0m88 -62h0m-126 26h0m277 -104h0m-236 195h0m193 -250h0m-21 313h0m-99 -34h0m228 -168h0m-334 12h0m98 -115h0m32 190h0m170 -117h0m8 57h0m-319 -10h0m237 158h0m66 -109h0m-313 -78h0m225 110h0m-160 27h0m171 -102h0m65 -72h0m-11 174h0m-13 10h0m-44 -132h0m-72 62h0m-15 25h0m77 82h0m-83 -200h0m170 176h0m-169 -59h0m-127 -10h0m107 106h0m120 18h0m105 -215h0m-257 150h0m256 -48h0m-112 84h0m-10 -128h0m-26 25h0m-110 -142h0m253 172h0m-182 -223h0m-9 139h0m84 -25h0m-119 -5h0m-62 159h0m298 -174h0m-185 50h0m-118 138h0m281 -108h0m-185 158h0m91 -336h0m-106 152h0m184 -30h0m-245 135h0m165 -255h0m-78 5h0m169 216h0m-264 17h0m9 15h0m-33 -116h0m93 -16h0m25 62h0m127 -148h0m-50 111h0m-106 191h0m14 -157h0m-57 -147h0m208 219h0m-208 40h0m121 3h0m-137 -4h0m171 19h0m-1 -120h0m-6 -74h0m-89 212h0m94 -325h0m-218 209h0m141 0h0m-13 71h0m64 -178h0m17 7h0m-216 15h0m-11 -15h0m326 170h0m-293 -179h0m238 -35h0m73 31h0m-250 -35h0m38 71h0m79 3h0m69 146h0m-72 12h0m93 -39h0m13 3h0m-106 -122h0m71 -101h0m-50 7h0m125 138h0m-84 -148h0m-72 160h0m-132 101h0m147 -74h0m-25 -16h0m-25 -186h0m52 -29h0m-8 325h0m-184 -131h0m284 -146h0m-112 152h0m116 92h0m-152 -70h0m-30 -95h0m-114 76h0m144 123h0m187 -203h0m-4 18h0m-247 -81h0m28 169h0m-88 -39h0m107 33h0m152 -184h0m-163 87h0m-111 -10h0m42 177h0m-49 -165h0m127 60h0m180 34h0m-101 1h0m-155 -192h0m154 156h0m-81 -185h0m-91 132h0m101 28h0m203 -26h0m-35 171h0m-85 -183h0m-182 81h0m225 68h0m74 -57h0m-135 -99h0m-173 35h0m119 168h0m179 -172h0m-198 73h0m59 -77h0m150 74h0m-63 -174h0m-200 32h0m-35 151h0m234 -149h0m11 221h0m-95 16h0m-107 -271h0m69 76h0m138 -74h0m-161 259h0m-94 -192h0m166 -126h0m66 85h0m-138 -73h0m52 225h0m168 -80h0m-345 68h0m304 -66h0m-108 -113h0m-87 104h0m43 189h0m68 -290h0m74 47h0m-262 120h0m318 -73h0m-346 -11h0m293 17h0m-270 -93h0m234 216h0m69 -62h0m-206 148h0m62 -322h0m-46 123h0m-145 -7h0m288 -93h0m-23 9h0m-153 269h0m181 -94h0m51 -36h0m-272 -148h0m-29 172h0m233 47h0m-57 -79h0m75 74h0m-176 -249h0m112 -15h0m57 265h0m-79 -148h0m-138 -70h0m230 227h0m-245 24h0m62 -268h0m114 9h0m-219 194h0m31 4h0m299 -102h0m-31 179h0m-90 -94h0m-190 -69h0m195 165h0m72 -208h0m-163 82h0m203 6h0m-300 21h0m181 -18h0m-115 136h0m-69 -136h0m173 -86h0m10 37h0m-1 -33h0m-59 -109h0m58 116h0m-110 -1h0m193 155h0m-263 -116h0m166 -161h0m108 240h0m-303 -30h0m289 89h0m-268 -50h0m193 -100h0m53 -110h0m-11 252h0m73 -98h0m-119 -187h0m-175 270h0m253 27h0m-99 -85h0m-39 -68h0m-87 -51h0m223 166h0m-188 -49h0m82 -70h0m-182 -21h0m1 -6h0m289 175h0m-148 -175h0m88 209h0m-197 -288h0m120 156h0m-125 6h0m122 -64h0m-19 52h0m74 -70h0m-87 -82h0m71 6h0m-73 -37h0m-74 292h0m-10 -163h0m80 -120h0m195 102h0m-11 158h0m-72 -225h0m-38 72h0m-55 36h0m-72 -115h0m225 46h0m-236 -44h0m100 -37h0m102 49h0m-141 263h0m32 -17h0m3 -155h0m144 -98h0m-155 104h0m95 -32h0m-82 27h0m-3 13h0m-4 -8h0m50 66h0m35 -205h0m-111 112h0m224 84h0m-294 -4h0m97 -91h0m-32 38h0m32 -33h0m61 66h0m-68 -199h0m165 138h0m-184 173h0m154 -258h0m38 184h0m-271 60h0m105 -170h0m-83 -74h0m164 163h0m-169 56h0m173 37h0m-15 9h0m-84 -113h0m-70 -153h0m267 107h0m-125 6h0m-73 -151h0m-9 144h0m7 -109h0m-1 309h0m98 -215h0m-226 76h0m91 -149h0m30 135h0m-11 122h0m200 -116h0m-40 98h0m-62 -180h0m70 183h0m70 -170h0m-82 166h0m-32 -288h0m-162 38h0m37 162h0m92 -85h0m-80 -83h0m72 287h0m-80 -204h0m-65 0h0m151 191h0m10 -311h0m26 -8h0m-77 137h0m72 8h0m-64 -23h0m59 11h0m-180 17h0m246 2h0m20 -30h0m-90 219h0m7 -323h0m-7 -7h0m-2 111h0m-17 183h0m-1 -269h0m-67 85h0m19 -105h0m-26 332h0m24 -191h0m55 184h0m81 -247h0m8 105h0m-37 -143h0m-230 176h0m16 56h0m171 -165h0m-186 35h0m98 -34h0m102 90h0m92 -94h0m-192 108h0m199 -48h0m-25 -52h0m-108 224h0m-149 -216h0m160 165h0m-62 -262h0m66 199h0m-17 -92h0m27 46h0m-149 117h0m57 -153h0m-54 97h0m-41 -104h0m12 -84h0m255 196h0m-150 -37h0m149 48h0m-214 17h0m38 53h0m219 -136h0m-28 -93h0m-197 -91h0m-40 277h0m-65 -94h0m190 -194h0m87 71h0m-9 7h0m21 -21h0m-285 170h0m213 -97h0m-77 -109h0m124 241h0m-70 79h0m-202 -144h0m40 92h0m178 -299h0m-27 163h0m42 -14h0m105 63h0m-301 -151h0m25 208h0m-20 -120h0m71 3h0m24 -35h0m53 87h0m75 -115h0m-17 229h0m33 -278h0m-60 187h0m-218 -4h0m299 -8h0m8 -153h0m-5 96h0m-164 190h0m6 -329h0m15 195h0m-43 -69h0m-115 -6h0m290 157h0m44 -86h0m-285 58h0m-39 -35h0m-3 -80h0m133 -126h0m183 176h0m-19 -9h0m-300 37h0m36 45h0m31 12h0m158 -259h0m-212 206h0m279 40h0m-209 -204h0m-57 207h0m10 -64h0m-12 -24h0m242 -140h0m-208 219h0m-70 -58h0m149 -190h0m83 305h0m-197 -204h0m103 -112h0m89 133h0m-116 69h0m-75 -68h0m303 -20h0m-117 97h0m-182 -115h0m89 -66h0m-85 37h0m156 230h0m-122 -227h0m116 41h0m-2 -92h0m24 -25h0m-145 79h0m237 -56h0m41 94h0m-224 -112h0m66 310h0m-163 -245h0m31 -23h0m-25 101h0m118 44h0m-71 -124h0m42 60h0m186 0h0m-43 158h0m-47 20h0m-5 -133h0m17 169h0m98 -229h0m-249 -57h0m146 146h0m-101 104h0m75 -185h0m-2 -97h0m36 93h0m-157 -77h0m194 231h0m-209 -228h0m236 27h0m-64 -74h0m-4 326h0m-110 -107h0m-6 -213h0m24 149h0m93 143h0m35 -31h0m-225 -127h0m39 165h0m194 -31h0m-134 -232h0m10 114h0m-140 49h0m221 104h0m-10 -150h0m-85 69h0m95 -202h0m-29 209h0m-39 98h0m-39 -113h0m61 -16h0m-151 74h0m289 -158h0m-288 116h0m63 -213h0m19 194h0m33 104h0m41 -194h0m104 10h0m-149 179h0m-140 -191h0m280 181h0m-281 -103h0m1 8h0m165 3h0m-137 -59h0m-2 -5h0m-10 46h0m175 -68h0m108 -54h0m-307 45h0m286 150h0m-129 -138h0m71 -119h0m-107 -5h0m87 39h0m-77 261h0m-142 -105h0m48 -80h0m122 93h0m-78 -144h0m58 169h0m162 -96h0m-72 -103h0m45 232h0m7 -236h0m-50 90h0m-106 -81h0m183 114h0m-7 118h0m-143 -134h0m67 58h0m38 -148h0m-266 136h0m198 -42h0m-55 -108h0m-17 155h0m-7 -2h0m182 82h0m-65 39h0m14 -291h0m23 44h0m-122 132h0m-17 -156h0m-20 293h0m92 -221h0m-120 157h0m-92 -137h0m308 -27h0m-279 90h0m24 -8h0m107 -147h0m147 226h0m-273 -75h0m-34 20h0m231 128h0m-137 -286h0m8 235h0m22 45h0m-34 -280h0m145 101h0m42 -83h0m41 74h0m-151 182h0m-6 -305h0m16 123h0m47 79h0m-53 -92h0m-122 -3h0m103 23h0m-15 -114h0m-59 229h0m216 -223h0m-226 185h0m99 -216h0m122 29h0m30 80h0m-83 84h0m-185 -138h0m253 6h0m-250 200h0m-26 -46h0m195 -184h0m55 17h0m-107 258h0m12 -304h0m-34 96h0m-3 79h0m-29 104h0m230 -174h0m-76 157h0m90 -146h0m-208 21h0m8 -126h0m52 279h0m-4 -18h0m-115 11h0m121 -262h0m-3 157h0m-82 -177h0m82 25h0m-78 -33h0m-67 38h0m268 183h0m-106 79h0m-199 -159h0m102 9h0m193 42h0m-170 -86h0m-57 166h0m-18 -12h0m64 -150h0m-131 82h0m130 139h0m174 -245h0m-94 131h0m127 -4h0m-34 -109h0m-171 229h0m-45 -257h0m114 254h0m-58 -216h0m181 35h0m-179 153h0m-101 -265h0m273 151h0m-134 16h0m2 124h0m43 -5h0m-177 -28h0m88 -67h0m199 -45h0m-211 37h0m-6 -103h0m109 199h0m86 -209h0m-273 19h0m298 88h0m-261 46h0m227 -41h0m-36 -143h0m-61 -79h0m-99 141h0m-105 75h0m296 -83h0m-217 131h0m196 -179h0m-131 -77h0m180 135h0m-67 -116h0m-118 -24h0m7 12h0m-78 55h0m-3 189h0m163 67h0m-233 -116h0m202 130h0m-103 -27h0m105 -128h0m-92 -53h0m13 -132h0m111 123h0m25 -81h0m-75 -4h0m-156 144h0m150 38h0m87 71h0m-264 -97h0m138 -166h0m85 291h0m-111 -13h0m10 -134h0m100 142h0m-110 14h0m181 -47h0m-64 -134h0m-226 3h0m279 152h0m-262 -145h0m320 -30h0m-220 211h0m151 -258h0m5 -50h0m-126 176h0m74 -190h0m22 49h0m56 135h0m-172 99h0m185 -196h0m-37 -63h0m-201 -2h0m-5 24h0m212 201h0m22 -38h0m-251 35h0m3 -224h0m12 234h0m64 -43h0m79 -58h0m-96 -173h0m184 200h0m-196 135h0m47 -309h0m186 102h0m-149 105h0m72 -154h0m35 28h0m-223 -34h0m102 278h0m11 -215h0m4 179h0m-63 -121h0m73 -87h0m104 112h0m-269 9h0m273 -4h0m-228 53h0m61 -239h0m46 99h0m-153 -73h0m-1 129h0m175 -190h0m-14 9h0m112 212h0m-114 102h0m82 -25h0m-274 -174h0m61 180h0m85 -297h0m-140 188h0m93 -199h0m193 45h0m-89 302h0m-196 -236h0m193 193h0m-123 -3h0m119 -75h0m-54 0h0m31 -203h0m-138 277h0m230 -33h0m-34 -248h0m-86 128h0m-145 -26h0m197 221h0m-141 -75h0m-68 -39h0m273 68h0m-133 -259h0m-70 43h0m58 -47h0m208 159h0m-234 86h0m-90 -70h0m25 -42h0m17 125h0m237 9h0m-99 -259h0m120 98h0m-2 -63h0m-289 118h0m164 3h0m82 -145h0m-104 127h0m-113 50h0m168 -44h0m-87 9h0m-83 -110h0m188 -60h0m92 215h0m-126 -39h0m12 -12h0m53 -132h0m36 -8h0m38 97h0m-141 -21h0m-56 184h0m14 18h0m61 -138h0m-3 118h0m67 -6h0m-74 -294h0m18 190h0m111 -76h0m-321 105h0m253 76h0m-70 -89h0m70 -170h0m37 62h0m-205 230h0m145 -8h0m-41 -202h0m-7 68h0m2 -178h0m81 30h0m-124 93h0m61 22h0m-60 -18h0m-64 125h0m253 -52h0m-326 -20h0m291 -125h0m-89 55h0m-111 -100h0m-43 62h0m152 256h0m74 -76h0m-280 -120h0m123 -26h0m178 33h0m-18 101h0m-281 -62h0m101 134h0m-94 -171h0m327 58h0m-190 -6h0m-29 -167h0m199 116h0m-116 191h0m-212 -134h0m198 -190h0m108 284h0m-106 -53h0m144 -131h0m-129 185h0m59 -35h0m-195 -204h0m259 154h0m-28 -69h0m-264 -20h0m154 176h0m-137 -269h0m-47 189h0m290 62h0m-98 -172h0m-64 70h0m-97 -144h0m261 28h0m-192 73h0m23 198h0m56 -96h0m-156 43h0m169 -284h0m-59 292h0m163 -105h0m0 9h0m-124 8h0m-70 -92h0m43 23h0m39 49h0m-10 12h0m41 10h0m-103 -176h0m-7 -29h0m28 109h0m79 96h0m20 -154h0m96 51h0m-304 131h0m97 -84h0m169 126h0m-156 31h0m10 -3h0m37 -159h0m137 44h0m-293 -67h0m233 140h0m73 -120h0m-328 -39h0m281 94h0m-108 0h0m-171 -103h0m268 166h0m-169 -68h0m69 -176h0m-172 93h0m205 114h0m15 -198h0m-84 283h0m-99 -242h0m175 60h0m-22 215h0m113 -111h0m-136 -102h0m50 64h0m-5 -66h0m-178 64h0m-12 23h0m293 -22h0m-322 -54h0m187 -25h0m114 -58h0m-10 151h0m-256 -166h0m90 -3h0m69 294h0m-3 -27h0m13 -189h0m4 -7h0m101 63h0m-54 91h0m-135 -43h0m83 11h0m-15 -36h0m-77 103h0m-10 -180h0m-77 22h0m299 81h0m-291 -20h0m99 -170h0m149 7h0m-142 244h0m-1 -94h0m167 -90h0m-5 117h0m2 -37h0m-64 109h0m13 -244h0m55 184h0m-159 -15h0m153 59h0m-74 51h0m-12 -38h0m120 -90h0m-145 -77h0m-199 93h0m292 -170h0m-137 81h0m83 204h0m-109 -32h0m-121 -182h0m151 -109h0m-124 225h0m36 29h0m206 -218h0m35 191h0m-157 -52h0m-68 -114h0m196 13h0m11 -1h0m-19 190h0m-85 -65h0m-149 22h0m152 -207h0m-102 252h0m217 -200h0m-160 259h0m161 -115h0m-289 -70h0m273 -103h0m-209 273h0m52 -206h0m130 -53h0m-146 264h0m151 -63h0m-120 -139h0m-146 1h0m209 -74h0m108 189h0m-35 64h0m-24 -227h0m-254 63h0m311 21h0m-91 37h0m-83 -155h0m-22 296h0m200 -181h0m-9 -10h0m4 -33h0m-165 34h0m162 147h0m-162 -258h0m156 93h0m-116 -107h0m150 200h0m-329 8h0m283 -190h0m-100 176h0m-77 111h0m108 -119h0m-89 -200h0m92 130h0m-35 193h0m106 -62h0m-163 -111h0m-72 149h0m148 40h0m-65 -223h0m149 -27h0m-68 224h0m100 -163h0m-288 -37h0m257 171h0m-156 -64h0m159 61h0m14 -137h0m-177 39h0m51 28h0m91 89h0m-174 -303h0m121 121h0m112 80h0m-229 -79h0m76 25h0m9 -21h0m-163 66h0m87 42h0m218 -5h0m-69 -164h0m-263 136h0m294 8h0m8 -81h0m4 94h0m-45 46h0m-118 -251h0m112 38h0m-54 130h0m-48 135h0m-143 -124h0m251 -124h0m38 63h0m-24 -51h0m20 178h0m-11 36h0m-9 4h0m-225 -38h0m-4 -222h0m55 88h0m236 90h0m-69 46h0m65 -62h0m-124 22h0m-88 -37h0m-6 -49h0m-10 193h0m-65 -118h0m41 76h0m-37 -241h0m70 143h0m12 -151h0m12 68h0m67 -2h0m-132 202h0m109 -114h0m-103 -144h0m221 201h0m-75 -223h0m48 231h0m-51 -226h0m-181 10h0m108 174h0m-14 87h0m52 -289h0m21 289h0m-103 -84h0m18 84h0m32 -186h0m132 -74h0m-118 85h0m13 204h0m-162 -222h0m4 -19h0m99 22h0m96 84h0m118 -65h0m-230 192h0m155 -45h0m-225 -144h0m93 154h0m92 12h0m-104 -89h0m177 -59h0m-4 -42h0m48 95h0m-79 80h0m-62 -288h0m-166 79h0m42 -20h0m-73 152h0m136 -179h0m39 180h0m12 -66h0m118 37h0m11 -28h0m-207 170h0m157 -252h0m33 -30h0m-12 189h0m-140 -226h0m42 110h0m36 88h0m-225 -63h0m0 51h0m203 -76h0m4 179h0m-81 -134h0m102 -120h0m-36 69h0m124 75h0m-273 -120h0m140 56h0m5 -112h0m9 -9h0m-13 307h0m-73 -280h0m-39 19h0m155 79h0m-108 -86h0m107 -27h0m-133 44h0m15 252h0m177 -271h0m-84 -37h0m-100 262h0m122 -111h0m75 -14h0m-84 -102h0m-84 54h0m-106 69h0m72 -115h0m8 157h0m169 -126h0m-232 -8h0m145 271h0m124 -144h0m-249 108h0m123 -100h0m92 -158h0m34 134h0m14 62h0m-172 -108h0m-126 19h0m-21 -35h0m212 98h0m-206 -106h0m106 20h0m108 -116h0m-239 132h0m267 -71h0m-253 114h0m285 113h0m-91 -119h0m-57 122h0m-117 -152h0m19 -91h0m87 92h0m101 35h0m-227 36h0m2 -101h0m323 26h0m-194 155h0m93 -86h0m-47 -95h0m-100 142h0m141 -147h0m-105 212h0m56 -204h0m-19 -6h0m43 75h0m-154 -144h0m72 80h0m36 197h0m69 -323h0m76 34h0m-17 258h0m-75 8h0m-49 -92h0m64 -178h0m-61 178h0m150 -54h0m-170 183h0m162 -286h0m-182 241h0m3 -167h0m100 11h0m-30 178h0m43 -168h0m-101 74h0m13 -224h0m46 193h0m86 -154h0m-58 -5h0m-74 -50h0m120 296h0m-69 -56h0m14 -173h0m15 95h0m93 12h0m-23 143h0m-106 -184h0m-34 35h0m179 75h0m-331 -84h0m262 -58h0m-256 105h0m219 -179h0m-155 285h0m190 -11h0m-86 -77h0m-69 -12h0m153 -132h0m22 12h0m19 76h0m-11 140h0m-64 -274h0m-122 23h0m162 257h0m91 -168h0m-179 169h0m128 -144h0m-163 38h0m35 -80h0m40 104h0m45 -145h0m-118 144h0m-85 83h0m84 -113h0m-20 -185h0m78 117h0m134 94h0m-183 -8h0m153 -90h0m-243 182h0m193 0h0m-100 33h0m137 -262h0m-246 -29h0m64 269h0m85 -278h0m124 117h0m-63 -88h0m-124 58h0m-111 32h0m123 44h0m186 -90h0m-185 15h0m96 76h0m-13 122h0m85 -169h0m-106 6h0m-29 72h0m5 86h0m-73 -285h0m203 162h0m-173 143h0m157 -272h0m38 63h0m-218 30h0m-91 -45h0m206 -86h0m-143 29h0m138 -21h0m-135 252h0m181 -201h0m-145 259h0m-123 -199h0m145 212h0m34 -42h0m-152 -103h0m190 -195h0m-182 37h0m264 184h0m-313 -93h0m246 88h0m-176 33h0m265 -36h0m-139 -220h0m0 112h0m-75 85h0m-121 -57h0m10 -42h0m41 97h0m80 -14h0m-26 141h0m144 -181h0m-129 -22h0m-40 165h0m-21 -248h0m234 168h0m-168 3h0m11 131h0m203 -227h0m-175 4h0m36 28h0m114 4h0m-292 86h0m201 -15h0m109 -75h0m-105 48h0m73 -117h0m-273 153h0m188 -6h0m77 40h0m-249 -144h0m188 193h0m121 -199h0m-271 155h0m221 6h0m-142 -261h0m38 -13h0m73 58h0m-116 -32h0m-21 81h0m189 85h0m-126 -75h0m-45 214h0m86 -16h0m-107 -314h0m215 189h0m-123 -79h0m-20 33h0m63 -75h0m-104 71h0m153 -74h0m-229 -6h0m220 49h0m-133 202h0m-120 -44h0m168 20h0m-205 -172h0m-5 97h0m305 -17h0m-114 118h0m146 -104h0m-224 -202h0m-93 180h0m3 -45h0m-18 92h0m325 -94h0m-298 -3h0m289 -29h0m-16 124h0m-16 -4h0m-71 -225h0m65 259h0m9 -45h0m57 -14h0m-133 99h0m-177 -13h0m14 -259h0m273 193h0m-287 -8h0m-6 9h0m-41 -21h0m44 -3h0m156 134h0m43 -127h0m-236 10h0m224 -191h0m42 266h0m-115 24h0m-18 -312h0m-140 106h0m111 -100h0m-109 193h0m131 141h0m173 -289h0m-287 99h0m190 148h0m-11 -87h0m105 44h0m-32 12h0m-222 -219h0m270 174h0m-49 47h0m-9 -228h0m-27 294h0m-216 -188h0m-13 78h0m11 2h0m202 -42h0m-81 -154h0m-130 52h0m123 253h0m-55 -80h0m124 -113h0m109 60h0m-197 128h0m87 -24h0m-77 -164h0m-9 -19h0m89 203h0m-117 -255h0m68 44h0m134 -45h0m-83 -29h0m84 247h0m-137 24h0m-130 -174h0m184 14h0m80 -120h0m54 186h0m-6 -116h0m-327 35h0m270 -63h0m-230 186h0m271 -197h0m-200 265h0m156 -265h0m-232 131h0m-27 20h0m34 -81h0m97 9h0m-13 -1h0m133 -85h0m40 59h0m-236 -46h0m70 -89h0m109 236h0m68 -79h0m-174 148h0m88 -266h0m-97 200h0m198 -46h0m-97 -29h0m-28 -35h0m63 -39h0m-236 118h0m84 19h0m190 82h0m-155 -137h0m-107 -116h0m104 -1h0m-90 41h0m93 223h0m-16 34h0m14 -323h0m-101 39h0m106 76h0m-84 173h0m228 -95h0m-276 -109h0m205 -69h0m-142 25h0m25 71h0m-67 106h0m-27 -79h0m204 62h0m-188 -105h0m306 115h0m-259 -177h0m-18 263h0m-1 -274h0m56 -22h0m-56 62h0m17 -34h0m36 96h0m193 80h0m-73 -201h0m81 268h0m-273 -244h0m269 184h0m-117 72h0m74 -26h0m-41 -236h0m-168 -2h0m60 276h0m-81 -200h0m-26 5h0m126 -1h0m2 -112h0m88 308h0m-216 -113h0m-6 14h0m284 -169h0m-137 -10h0m-103 217h0m220 16h0m-33 -260h0m-170 236h0m36 -223h0m236 100h0m-303 -1h0m18 193h0m248 -97h0m-93 16h0m-5 -68h0m-124 113h0m115 -154h0m29 33h0m-30 163h0m-36 -182h0m-3 198h0m-14 -218h0m137 184h0m-80 -282h0m144 106h0m-222 -81h0m-117 107h0m187 -33h0m21 0h0m-87 186h0m124 -268h0m-93 292h0m-42 -290h0m-71 97h0m183 167h0m77 -28h0m-149 -252h0m-4 127h0m149 119h0m-91 38h0m-158 -14h0m22 17h0m133 -200h0m12 234h0m27 -330h0m-33 -13h0m123 146h0m-93 -118h0m61 29h0m-252 164h0m151 101h0m-35 -114h0m-93 88h0m59 45h0m138 -47h0m-153 7h0m-55 -37h0m-44 -151h0m66 -39h0m260 58h0m-200 47h0m56 -35h0m83 121h0m-159 -44h0m20 -47h0m7 -59h0m84 -100h0m66 193h0m-257 -15h0m236 -119h0m-242 152h0m293 -79h0m18 39h0m-228 151h0m188 -292h0m-267 95h0m75 61h0m44 140h0m-151 -202h0m225 -119h0m-8 328h0m94 -292h0m-109 291h0m97 -220h0m-147 -123h0m186 110h0m-157 215h0m-57 -208h0m169 167h0m-99 -120h0m130 -12h0m-292 107h0m84 -254h0m-114 174h0m130 -181h0m24 150h0m148 -7h0m-33 120h0m16 -145h0m-87 31h0m2 9h0m-82 2h0m132 104h0m71 -39h0m-215 86h0m45 -88h0m-145 -36h0m107 -63h0m74 18h0m145 -11h0m-32 -6h0m-272 60h0m96 120h0m-58 -9h0m119 -86h0m109 -87h0m28 73h0m-272 -116h0m164 -49h0m-186 160h0m175 -199h0m-132 284h0m158 52h0m-12 -27h0m-232 -177h0m128 62h0m89 -198h0m-59 15h0m138 311h0m-288 -114h0m157 -58h0m-114 139h0m26 -23h0m136 -38h0m28 -197h0m-157 16h0m59 308h0m173 -63h0m-166 56h0m173 -114h0m13 -49h0m-293 115h0m224 -6h0m-140 -154h0m-74 162h0m100 -65h0m126 -154h0m-140 -30h0m-58 215h0m78 -243h0m164 166h0m-103 -34h0m94 57h0m-147 -2h0m181 -17h0m-23 43h0m-166 -19h0m-74 -155h0m255 167h0m-330 -113h0m134 123h0m-102 -115h0m1 162h0m9 -215h0m70 -37h0m-64 241h0m96 -275h0m-76 45h0m120 284h0m-38 -138h0m38 19h0m-46 17h0m60 4h0m-207 -95h0m191 206h0m135 -107h0m-133 81h0m-60 -192h0m-52 -41h0m277 56h0m-64 -62h0m-217 220h0m-76 -161h0m133 32h0m100 154h0m-88 -164h0m75 187h0m14 -205h0m-35 -137h0m104 277h0m-24 24h0m27 -30h0m-14 -16h0m10 -52h0m-244 96h0m146 47h0m135 -121h0m-228 -75h0m-117 -23h0m331 68h0m-52 -154h0m-41 -44h0m63 300h0m-228 -255h0m-28 11h0m33 -9h0m124 82h0m17 65h0m-62 -32h0m-107 -95h0m152 -45h0m50 203h0m-210 54h0m11 -228h0m169 141h0m9 -182h0m-75 29h0m171 76h0m-210 210h0m-72 -46h0m298 -76h0m-138 -206h0m-90 154h0m186 -97h0m-163 -47h0m88 146h0m34 175h0m-18 -6h0m-62 -114h0m137 -95h0m-233 -58h0m-2 211h0m58 -221h0m26 172h0m-104 45h0m87 93h0m-10 -312h0m-118 114h0m291 60h0m-158 -93h0m-68 -72h0m67 74h0m126 174h0m-149 -129h0m141 122h0m-134 -127h0m75 -9h0m-170 -30h0m117 -111h0m89 208h0m48 39h0m-96 -134h0m-10 8h0m10 81h0m-9 -11h0m-48 -45h0m-86 -68h0m82 247h0m62 -311h0m102 240h0m16 -39h0m-259 -150h0m-16 143h0m221 71h0m46 -216h0m-161 42h0m87 -94h0m5 115h0m-200 56h0m233 73h0m-121 -73h0m-87 -165h0m181 283h0m16 -259h0m39 18h0m-285 46h0m209 -75h0m45 39h0m-45 112h0m-23 120h0m11 -278h0m-10 268h0m-25 33h0m62 -21h0m-192 -191h0m39 171h0m61 -258h0m45 98h0m-182 65h0m190 131h0m-117 -40h0m72 -78h0m-73 65h0m-40 -59h0m17 83h0m92 -178h0m-25 28h0m-39 -92h0m-27 194h0m47 62h0m55 -285h0m52 124h0m46 -84h0m-130 152h0m95 84h0m99 -123h0m-94 -172h0m-154 35h0m43 168h0m40 -13h0m-103 99h0m143 -87h0m-54 88h0m-62 -28h0m153 -146h0m70 -61h0m-5 155h0m-94 -190h0m29 -24h0m65 256h0m-168 -215h0m-130 91h0m43 77h0m-36 -66h0m213 37h0m-62 29h0m-43 -186h0m154 232h0m-153 43h0m197 -157h0m-88 35h0m-150 65h0m44 -216h0m187 100h0m-85 16h0m-29 0h0m-142 146h0m180 -109h0m-220 14h0m123 -30h0m-88 -128h0m-8 164h0m76 -170h0m184 223h0m-76 -73h0m126 -72h0m-41 -56h0m-82 72h0m-181 96h0m11 17h0m278 -97h0m11 -33h0m-11 73h0m-248 -113h0m51 265h0m179 -139h0m-129 18h0m85 -141h0m-41 -70h0m-228 200h0m243 -138h0m55 -7h0m-65 83h0m-4 -108h0m-166 49h0m263 143h0m-107 77h0m-106 15h0m90 -284h0m-56 272h0m58 -148h0m-133 100h0m191 -184h0m-143 75h0m13 73h0m160 84h0m-142 -83h0m73 -36h0m-181 -63h0m97 -127h0m-104 220h0m167 12h0m-182 6h0m105 -241h0m-2 37h0m-56 43h0m222 -38h0m53 113h0m-217 -111h0m205 147h0m-288 71h0m73 -119h0m183 12h0m-131 -7h0m141 -29h0m-161 -100h0m49 -6h0m-164 221h0m301 -36h0m-144 9h0m132 -44h0m-134 -36h0m125 108h0m-241 -150h0m-14 220h0m283 -90h0m-82 -145h0m-215 -4h0m68 -36h0m82 193h0m37 -93h0m-119 -130h0m216 231h0m-275 38h0m181 -134h0m-129 186h0m71 -114h0m-24 -66h0m23 -2h0m-23 -111h0m11 111h0m-123 158h0m-1 -85h0m154 -53h0m-70 183h0m-17 -5h0m-85 -218h0m125 115h0m48 97h0m67 -243h0m70 142h0m-212 -26h0m84 -50h0m21 -110h0m80 171h0m7 83h0m-177 -3h0m171 -6h0m-230 -235h0m135 133h0m100 -64h0m-236 -46h0m267 140h0m-33 11h0m2 -145h0m-233 -10h0m223 -14h0m-185 82h0m-78 1h0m112 164h0m71 -152h0m-27 52h0m142 -2h0m-30 89h0m-35 9h0m84 -178h0m-140 35h0m-168 135h0m6 -23h0m95 -152h0m62 229h0m103 -199h0m-225 130h0m65 -61h0m-90 -124h0m85 -73h0m5 116h0m113 -76h0m-135 249h0m65 -132h0m147 34h0m-233 111h0m119 -188h0m-106 -83h0m88 106h0m-63 37h0m-18 152h0m-101 -230h0m310 20h0m-293 -82h0m175 -15h0m-94 -33h0m34 190h0m67 -48h0m5 79h0m28 -157h0m50 172h0m31 -94h0m-138 163h0m-61 -117h0m-70 61h0m147 -249h0m-8 44h0m-92 81h0m84 -10h0m6 61h0m-162 -51h0m143 -15h0m36 22h0m0 -15h0m-108 219h0m-71 -276h0m175 172h0m-214 -92h0m193 -111h0m-70 142h0m26 153h0m148 -267h0m-26 205h0m29 -32h0m-161 -228h0m-90 293h0m99 -101h0m-18 -8h0m-51 -107h0m206 185h0m41 -27h0m-37 -205h0m-139 94h0m152 67h0m-184 -77h0m-10 82h0m181 -15h0m-167 40h0m-67 -146h0m-39 164h0m177 56h0m105 -177h0m-195 198h0m118 -139h0m-110 173h0m26 -233h0m-36 -80h0m-61 178h0m-1 -167h0m275 142h0m-111 -195h0m62 268h0m63 -123h0m-103 -127h0m-37 107h0m-121 168h0m46 -293h0m186 133h0m-106 -44h0m6 76h0m-132 132h0m268 -176h0m-302 -71h0m239 199h0m38 -56h0m-107 -158h0m55 14h0m-223 4h0m102 -41h0m-103 35h0m71 -22h0m195 211h0m-94 -183h0m-61 -24h0m-65 45h0m135 -82h0m79 136h0m-254 139h0m101 56h0m174 -93h0m-214 -227h0m95 35h0m19 101h0m-83 19h0m23 -11h0m-104 -64h0m246 -16h0m-12 202h0m-7 -192h0m-141 -71h0m76 213h0m-160 86h0m-61 -96h0m75 98h0m156 -268h0m38 254h0m39 -61h0m-155 97h0m155 -131h0m-248 52h0m87 60h0m152 -84h0m-179 -87h0m-39 -74h0m225 177h0m-105 97h0m75 -260h0m67 46h0m-306 -7h0m266 101h0m-160 -31h0m-64 -151h0m50 73h0m-76 -23h0m171 61h0m-112 156h0m213 -116h0m-161 11h0m169 41h0m-207 -204h0m139 26h0m-46 57h0m-181 30h0m39 -93h0m-32 12h0m294 59h0m-115 -121h0m-200 184h0m123 -166h0m-38 123h0m83 65h0m-187 -93h0m110 104h0m-92 -112h0m261 -67h0m-207 253h0m259 -72h0m-294 -32h0m13 74h0m210 6h0m74 -55h0m-194 115h0m-80 -34h0m226 -61h0m-132 -99h0m150 -45h0m-85 92h0m-217 -70h0m192 190h0m-10 -85h0m45 -185h0m52 265h0m21 -36h0m-163 -145h0m-33 -116h0m116 -3h0m-190 132h0m288 13h0m14 72h0m-45 76h0m11 -168h0m-169 99h0m161 -179h0m-140 -29h0m188 172h0m-149 36h0m-7 -42h0m-34 -57h0m-41 4h0m-89 25h0m124 150h0m40 1h0m34 -166h0m113 -16h0m-117 67h0m-212 -70h0m151 32h0m55 -148h0m-91 34h0m-66 8h0m-9 130h0m176 -30h0m11 182h0m-150 -263h0m36 65h0m93 206h0m-201 -114h0m141 -213h0m166 151h0m-285 41h0m63 116h0m46 17h0m-85 -21h0m-31 -18h0m311 -162h0m-270 -53h0m10 -37h0m228 246h0m-292 -196h0m129 216h0m83 -302h0m54 294h0m-145 -266h0m103 -27h0m-204 188h0m167 139h0m-83 -3h0m79 -1h0m-199 -117h0m229 -67h0m-162 -63h0m63 105h0m-55 -108h0m140 21h0m-25 225h0m50 -345h0m-12 316h0m-22 -184h0m-6 1h0m-6 4h0m-87 201h0m98 -18h0m69 -2h0m9 -4h0m-8 -39h0m-231 -8h0m276 -19h0m-172 100h0m-79 -76h0m223 -220h0m30 117h0m-122 159h0m126 -84h0m-142 -22h0m-31 -61h0m2 -2h0m121 160h0m26 -38h0m2 -199h0m18 116h0m-297 12h0m271 78h0m30 -75h0m-18 -125h0m-194 -70h0m79 124h0m-70 98h0m113 87h0m93 -197h0m-35 186h0m8 -1h0m-213 -7h0m223 -96h0m-83 -170h0m39 237h0m-237 -35h0m235 -172h0m-157 174h0m-50 35h0m135 -69h0m-65 28h0m211 -105h0m-230 -77h0m-55 35h0m99 109h0m-14 -1h0m45 -59h0m-104 -61h0m224 157h0m3 -24h0m-193 -168h0m90 130h0m-178 -13h0m184 44h0m-197 1h0m140 7h0m-94 -103h0m280 120h0m-35 -145h0m-127 259h0m-177 -188h0m301 -54h0m-249 214h0m-49 -73h0m313 5h0m28 -45h0m-96 -119h0m-245 37h0m96 18h0m175 -76h0m14 28h0m-96 130h0m-38 -14h0m84 119h0m-8 26h0m-42 -207h0m-38 92h0m64 -57h0m123 -52h0m-17 -6h0m-117 117h0m71 -132h0m-190 184h0m144 -248h0m-82 -16h0m78 199h0m-61 -75h0m145 97h0m3 -3h0m14 -114h0m-94 84h0m-196 -15h0m261 27h0m-21 -137h0m35 206h0m-301 -92h0m104 131h0m14 -34h0m172 -223h0m-155 276h0m15 -191h0m-114 -79h0m96 51h0m165 89h0m-36 -122h0m69 56h0m-182 65h0m147 -87h0m-268 68h0m-24 -45h0m131 -143h0m-5 37h0m-93 254h0m258 9h0m-8 -254h0m-89 104h0m63 118h0m-40 -136h0m-108 203h0m17 -336h0m67 345h0m102 -224h0m-191 98h0m173 45h0m-152 81h0m20 -322h0m56 201h0m-115 -85h0m130 -131h0m-110 3h0m87 30h0m-64 78h0m101 2h0m70 103h0m-239 45h0m194 31h0m53 -150h0m-206 60h0m-14 -82h0m199 77h0m-4 51h0m-216 -206h0m45 258h0m-103 -197h0m-2 54h0m177 157h0m-59 -98h0m1 -175h0m180 179h0m-50 -149h0m-209 221h0m99 -150h0m-112 -81h0m64 151h0m-63 -155h0m86 241h0m6 34h0m58 -36h0m-83 -92h0m-77 4h0m270 -10h0m-164 -90h0m58 195h0m-74 -189h0m170 102h0m-25 -140h0m-87 66h0m-145 -2h0m169 195h0m-171 -222h0m168 219h0m76 -320h0m-96 183h0m-98 -123h0m117 38h0m17 9h0m-75 29h0m189 69h0m-252 -188h0m170 36h0m-64 268h0m150 -212h0m-139 25h0m-139 -77h0m242 128h0m-34 70h0m-116 -61h0m59 -94h0m-91 89h0m12 -216h0m-85 276h0m150 -38h0m-43 103h0m-95 -296h0m138 -22h0m-126 10h0m-37 194h0m6 -10h0m173 -30h0m23 -45h0m-167 -104h0m123 177h0m-2 -75h0m31 -132h0m53 78h0m-117 75h0m-129 73h0m23 -199h0m175 125h0m-189 79h0m75 -209h0m219 203h0m-218 -189h0m42 278h0m-150 -188h0m223 80h0m-219 -60h0m317 12h0m-286 121h0m-5 -213h0m287 48h0m-145 94h0m-131 -136h0m163 82h0m-63 157h0m-14 -120h0m-58 109h0m176 -27h0m57 -136h0m-79 -130h0m-97 226h0m-17 -13h0m187 57h0m-156 -130h0m77 77h0m-22 -62h0m-42 -16h0m-12 -28h0m-131 -5h0m184 187h0m-50 -292h0m47 8h0m27 287h0m112 -80h0m-263 -149h0m12 -13h0m57 160h0m138 42h0m-39 -130h0m25 -58h0m65 122h0m-270 -103h0m252 177h0m-114 33h0m-146 -218h0m103 -70h0m136 31h0m-181 91h0m74 -33h0m-115 -62h0m161 -38h0m8 305h0m81 -20h0m-118 -181h0m-70 40h0m102 167h0m-50 -285h0m-37 -25h0m57 100h0m22 229h0m-77 -187h0m49 85h0m-120 -187h0m120 -23h0m-166 124h0m197 -150h0m-175 48h0m63 151h0m117 -179h0m-200 171h0m176 37h0m-64 107h0m-98 -290h0m280 111h0m-29 125h0m38 -156h0m-189 189h0m-142 -104h0m185 2h0m-38 -217h0m-29 45h0m-107 133h0m110 -20h0m-40 128h0m-50 -149h0m185 87h0m-101 -14h0m114 -65h0m-176 49h0m274 -39h0m-108 -119h0m67 47h0m-65 134h0m14 -71h0m-40 -104h0m-53 114h0m191 71h0m-149 103h0m13 12h0m-124 -278h0m108 234h0m156 -64h0m-225 104h0m83 -25h0m28 21h0m-86 -207h0m-106 84h0m229 -138h0m21 57h0m41 58h0m-14 -36h0m-137 -132h0m-56 29h0m25 299h0m168 -118h0m-14 -178h0m-204 -29h0m99 -5h0m-104 6h0m193 64h0m-61 145h0m115 -84h0m-307 3h0m80 174h0m29 -205h0m-61 172h0m25 -162h0m-95 103h0m173 109h0m97 -257h0m60 148h0m-175 78h0m-168 -84h0m17 -32h0m133 -31h0m188 41h0m-324 29h0m0 -30h0m-25 26h0m330 -110h0m-308 119h0m269 25h0m-152 -34h0m193 74h0m-246 -254h0m-34 10h0m128 66h0m-25 -118h0m-71 302h0m-22 -18h0m192 -68h0m-247 -78h0m127 -109h0m18 191h0m45 86h0m-144 -20h0m-6 -61h0m120 -98h0m155 8h0m-97 205h0m-163 -40h0m215 -6h0m-115 21h0m176 -122h0m-316 -76h0m268 -29h0m-85 -42h0m166 65h0m-119 -79h0m-47 308h0m-40 -224h0m159 27h0m-117 70h0m-158 53h0m321 -52h0m-278 77h0m135 -114h0m-160 119h0m-17 -26h0m101 35h0m35 -9h0m101 5h0m-203 -260h0m51 158h0m185 11h0m-115 -4h0m34 -170h0m-169 173h0m130 -72h0m5 -109h0m38 200h0m-6 -15h0m-6 82h0m-11 -72h0m134 -21h0m0 -75h0m-112 -115h0m-90 328h0m191 -155h0m-112 117h0m-51 -152h0m-128 -91h0m188 158h0m-153 46h0m-39 -152h0m75 223h0m35 -181h0m-25 174h0m182 -120h0m-178 -57h0m183 50h0m-6 12h0m20 -144h0m-261 194h0m78 -223h0m67 268h0m26 18h0m-148 -47h0m194 -12h0m-70 -77h0m92 102h0m-222 -20h0m-32 24h0m184 -159h0m-151 -70h0m115 63h0m105 -64h0m-152 -30h0m84 105h0m-33 184h0m-42 -108h0m45 -33h0m-203 -46h0m302 -12h0m-148 224h0m64 -10h0m-95 -129h0m78 -199h0m-38 198h0m180 -84h0m-73 158h0m-153 -142h0m-29 132h0m0 4h0m143 -93h0m46 120h0m-34 -297h0m-187 74h0m-44 40h0m292 148h0m-261 -188h0m8 -23h0m99 -25h0m197 187h0m-122 113h0m-91 -182h0m89 -150h0m-142 44h0m120 -21h0m95 231h0m-100 -248h0m89 241h0m-74 -248h0m96 70h0m3 7h0m-304 126h0m45 22h0m195 78h0m-8 -6h0m33 -27h0m39 -129h0m31 -20h0m-133 100h0m-56 -193h0m-3 307h0m21 0h0m-123 -218h0m80 94h0m-85 -5h0m147 -86h0m-100 161h0m-37 -134h0m147 3h0m76 156h0m-252 -193h0m-24 95h0m132 20h0m65 -107h0m-175 23h0m200 85h0m97 -116h0m-164 81h0m71 -160h0m-225 100h0m230 79h0m1 20h0m-35 -21h0m127 -20h0m26 -72h0m-79 -56h0m-6 -13h0m-242 140h0m83 -168h0m-94 187h0m151 -72h0m-124 58h0m140 -7h0m45 -154h0m-89 -31h0m-22 140h0m158 138h0m-183 -28h0m229 -30h0m-13 -180h0m-116 106h0m-69 -20h0m-68 -75h0m146 75h0m-149 -63h0m286 121h0m-193 0h0m102 -195h0m-33 122h0m11 73h0m-143 114h0m33 -302h0m28 101h0m-16 226h0m199 -45h0m-201 -176h0m-43 -59h0m159 89h0m-19 48h0m90 -49h0m-171 13h0m101 53h0m17 -142h0m-138 146h0m69 5h0m12 -164h0m-155 148h0m151 -62h0m-104 -92h0m188 37h0m-39 -54h0m-106 281h0m-4 -159h0m84 81h0m68 39h0m-201 -215h0m209 -23h0m-138 1h0m165 194h0m-112 92h0m113 -201h0m-194 213h0m77 6h0m22 -147h0m-181 -70h0m158 -100h0m-35 317h0m64 -168h0m-13 21h0m-53 123h0m-19 26h0m213 -202h0m-205 -12h0m76 176h0m-85 2h0m-11 -80h0m67 -17h0m80 66h0m55 -111h0m-177 186h0m68 -42h0m50 -236h0m-126 244h0m164 -102h0m-107 -179h0m-179 167h0m188 -40h0m-13 180h0m-151 -199h0m-3 162h0m170 -184h0m-14 207h0m-84 -185h0m98 87h0m83 -177h0m-61 258h0m-195 -197h0m47 184h0m178 -252h0m-119 299h0m69 -32h0m-149 -263h0m241 89h0m-282 58h0m-16 -73h0m18 75h0m176 -1h0m-161 11h0m184 -18h0m84 -62h0m-305 85h0m46 -9h0m28 89h0m-71 -79h0m129 -17h0m-22 -188h0m82 121h0m-165 -11h0m309 18h0m-28 59h0m-194 141h0m115 -125h0m63 -156h0m-145 259h0m60 -87h0m-60 -24h0m44 16h0m-193 -91h0m119 91h0m209 -106h0m-95 29h0m99 9h0m-257 152h0m54 -181h0m162 145h0m-260 -63h0m191 -162h0m81 193h0m-114 -43h0m-54 -185h0m111 56h0m60 69h0m-256 179h0m-18 -165h0m88 200h0m103 -210h0m-122 211h0m113 -177h0m-95 -121h0m118 307h0m69 -133h0m-156 -92h0m47 189h0m-195 -125h0m124 3h0m145 107h0m-194 -19h0m183 -5h0m-23 -136h0m-1 -117h0m-97 95h0m-99 -49h0m233 -30h0m-47 162h0m-75 116h0m-22 -162h0m223 40h0m-206 -159h0m68 14h0m63 209h0m-127 -128h0m-15 156h0m53 62h0m14 -344h0m-182 187h0m308 -48h0m-116 79h0m-5 -222h0m88 72h0m-76 231h0m119 -187h0m-129 185h0m-57 -189h0m121 154h0m-24 61h0m-40 -33h0m-194 -59h0m176 96h0m0 -12h0m-178 -124h0m213 -35h0m119 72h0m-336 -86h0m43 121h0m180 71h0m-2 -7h0m-8 -330h0m72 41h0m-174 146h0m1 -60h0m39 77h0m-77 71h0m-48 -123h0m-16 -44h0m96 38h0m26 -111h0m54 -25h0m-161 97h0m11 158h0m37 23h0m32 -273h0m-49 248h0m-3 -223h0m158 102h0m80 76h0m-80 -22h0m116 -2h0m-134 -151h0m1 262h0m122 -155h0m8 -59h0m-169 60h0m58 68h0m-133 -171h0m152 -45h0m-172 37h0m48 152h0m-85 28h0m115 -71h0m71 -116h0m-110 -22h0m93 331h0m-132 -270h0m55 148h0m100 -216h0m-159 296h0m181 10h0m-211 -117h0m10 1h0m267 -89h0m-118 115h0m-61 -223h0m71 190h0m103 -49h0m-60 -75h0m-206 114h0m99 -144h0m93 285h0m-217 -131h0m128 -135h0m43 154h0m164 1h0m-24 -17h0m-2 -80h0m-320 11h0m140 28h0m67 79h0m19 -21h0m102 -105h0m-34 113h0m6 -108h0m-7 -46h0m-177 -56h0m-73 264h0m-13 -155h0m116 88h0m-24 -12h0m-64 117h0m64 -125h0m59 0h0m-143 -133h0m3 178h0m94 -178h0m55 301h0m-134 -90h0m160 43h0m-91 -144h0m205 34h0m-184 105h0m65 -4h0m-176 -231h0m85 90h0m-12 -31h0m-72 97h0m166 118h0m22 -194h0m-116 184h0m79 -190h0m-9 0h0m155 75h0m-22 -27h0m-132 22h0m-72 97h0m42 -286h0m-41 -2h0m91 131h0m-173 -33h0m121 -92h0m-36 -17h0m228 116h0m-273 -76h0m150 151h0m-93 -10h0m129 -128h0m-179 225h0m113 -84h0m31 103h0m-66 -188h0m-52 -86h0m194 238h0m-228 -192h0m85 51h0m70 9h0m66 -65h0m-156 235h0m87 -113h0m91 4h0m-29 100h0m-243 -237h0m104 270h0m0 2h0m163 -272h0m-300 165h0m60 -180h0m241 77h0m-169 100h0m196 -87h0m-117 -14h0m-33 94h0m-38 2h0m-118 9h0m101 -236h0m-86 80h0m252 127h0m-221 -129h0m38 269h0m88 -29h0m-165 -254h0m256 -10h0m-83 -3h0m127 86h0m-27 19h0m-91 161h0m37 -262h0m47 23h0m-91 155h0m-184 -119h0m30 194h0m81 2h0m14 15h0m-3 -286h0m-109 262h0m268 -148h0m-161 -152h0m0 205h0m54 -8h0m-54 30h0m-67 -171h0m0 244h0m69 -254h0m39 -13h0m-72 279h0m-104 -106h0m95 102h0m92 -270h0m116 207h0m-46 -154h0m-126 -73h0m-109 178h0m174 -6h0m-172 -26h0m-55 -52h0m243 35h0m-210 91h0m291 58h0m-91 -56h0m-71 66h0m119 -219h0m39 25h0m-293 123h0m-11 -105h0m303 99h0m-74 85h0m-99 -2h0m78 -268h0m-87 167h0m32 -181h0m34 187h0m-122 -131h0m159 131h0m-121 121h0m-100 -129h0m18 -52h0m118 85h0m-119 -40h0m268 73h0m-140 52h0m70 -129h0m93 13h0m-180 98h0m91 -305h0m90 192h0m-192 144h0m-5 -195h0m-94 -23h0m105 222h0m106 -310h0m-101 197h0m-10 -91h0m11 44h0m21 17h0m-23 -73h0m-114 112h0m-9 -102h0m199 53h0m8 -140h0m1 113h0m-93 -39h0m96 -81h0m-163 45h0m-67 114h0m157 -82h0m60 -78h0m127 147h0m-217 -60h0m90 37h0m-85 54h0m84 -105h0m-89 50h0m121 -150h0m66 45h0m11 182h0m-89 74h0m47 -232h0m55 30h0m-121 10h0m-125 -69h0m7 233h0m224 -23h0m-151 -48h0m-54 115h0m85 -140h0m-53 -145h0m-94 247h0m1 -79h0m76 -173h0m-44 10h0m-30 9h0m151 -36h0m120 98h0m-321 22h0m199 196h0m-130 -30h0m140 -66h0m125 -82h0m-153 72h0m133 -88h0m-39 164h0m-210 -38h0m274 -146h0m-231 209h0m181 -242h0m-230 63h0m231 -119h0m15 92h0m-38 -49h0m-218 191h0m72 -49h0m84 115h0m-148 -36h0m81 -257h0m-85 34h0m-45 143h0m37 -61h0m47 100h0m107 -130h0m-125 -25h0m197 -41h0m-161 -46h0m134 25h0m-210 27h0m98 51h0m168 -64h0m-141 283h0m183 -95h0m-190 -197h0m-101 2h0m27 30h0m230 53h0m-162 218h0m4 -184h0m-100 105h0m228 -218h0m-87 82h0m80 -44h0m32 192h0m-32 9h0m-123 -61h0m121 35h0m-158 -239h0m109 16h0m-76 71h0m-127 120h0m-5 -10h0m106 -194h0m216 206h0m-273 16h0m146 -239h0m-181 233h0m181 69h0m65 -242h0m-188 210h0m186 -11h0m-141 -267h0m-25 280h0m10 -271h0m80 11h0m20 88h0m-150 -62h0m195 -7h0m-43 258h0m-37 -306h0m-119 46h0m177 -16h0m-227 117h0m115 165h0m-117 -162h0m314 11h0m-196 28h0m183 21h0m-43 -121h0m-137 112h0m66 -75h0m-105 166h0m22 27h0m16 -276h0m-53 43h0m51 71h0m28 190h0m64 -113h0m-180 -85h0m42 -90h0m-37 91h0m300 -14h0m-119 -121h0m-173 245h0m143 -124h0m39 16h0m-78 173h0m133 -278h0m64 184h0m-208 12h0m81 -227h0m-171 34h0m6 36h0m272 32h0m-211 -68h0m29 272h0m73 -10h0m5 -4h0m112 -70h0m4 -102h0m-199 110h0m16 -36h0m-126 -86h0m238 185h0m-39 -161h0m-69 78h0m-126 -18h0m186 141h0m-67 -165h0m-26 13h0m60 -170h0m29 211h0m102 -121h0m-202 -110h0m198 152h0m-195 -117h0m146 249h0m2 -14h0m-7 18h0m-255 -69h0m216 2h0m-25 12h0m-171 0h0m282 -86h0m-157 -108h0m-110 249h0m263 -64h0m-116 -84h0m-29 81h0m-8 89h0m-87 -211h0m234 -32h0m0 218h0m-186 -254h0m237 102h0m-61 167h0m38 -72h0m-162 -104h0m-14 -91h0m157 21h0m-74 277h0m-193 -134h0m54 111h0m-97 -198h0m311 -72h0m-238 259h0m62 -141h0m172 -17h0m-293 6h0m55 -62h0m59 -44h0m-15 278h0m-57 -270h0m273 182h0m-137 -109h0m-69 99h0m21 5h0m-111 -162h0m240 205h0m-227 -117h0m94 93h0m84 117h0m84 -168h0m-155 -68h0m120 -88h0m54 158h0m13 12h0m-31 -83h0m-90 -85h0m-171 -4h0m67 5h0m80 -27h0m87 27h0m-129 268h0m-136 -148h0m121 147h0m168 -172h0m-104 223h0m27 -49h0m-161 -8h0m276 -94h0m-109 -158h0m-105 -9h0m94 111h0m-19 12h0m10 184h0m95 -263h0m26 151h0m-184 -14h0m181 10h0m-147 -78h0m-147 -6h0m81 -10h0m17 -17h0m70 44h0m-87 -128h0m122 0h0m-128 -17h0m84 201h0m-92 110h0m112 -24h0m-185 -147h0m86 -146h0m221 189h0m-141 134h0m-74 -210h0m217 15h0m-59 -95h0m-62 78h0m105 30h0m-204 67h0m170 38h0m-282 -112h0m138 3h0m85 -17h0m45 -90h0m0 217h0m-121 -243h0m-119 295h0m87 -184h0m94 26h0m-18 179h0m-119 -67h0m53 -148h0m150 194h0m20 -270h0m-311 82h0m357 21h0m-313 84h0m156 -112h0m113 154h0m-178 -50h0m-64 -18h0m43 -192h0m54 315h0m-151 -103h0m292 -169h0m-73 104h0m-106 45h0m129 88h0m-19 -271h0m-207 215h0m317 -13h0m-316 -73h0m159 177h0m-66 -312h0m-10 310h0m92 -29h0m64 2h0m3 -3h0m-231 -168h0m12 -81h0m55 -16h0m106 134h0m-69 147h0m74 -7h0m-91 -293h0m166 126h0m-22 143h0m71 -147h0m-219 14h0m147 105h0m62 -56h0m-104 -158h0m107 192h0m-301 -78h0m8 -37h0m42 179h0m-77 -62h0m294 -96h0m-160 206h0m-10 -146h0m-70 111h0m289 -116h0m-37 -33h0m-88 181h0m64 -32h0m-141 -262h0m172 136h0m-265 -102h0m83 148h0m70 -218h0m-169 102h0m-27 40h0m6 81h0m137 -14h0m121 -166h0m-41 290h0m23 -292h0m72 143h0m-126 43h0m-74 -85h0m128 124h0m-25 -263h0m-35 14h0m-53 164h0m-30 -65h0m-25 -62h0m208 -12h0m-170 104h0m-118 52h0m335 -64h0m-110 -28h0m-226 93h0m190 11h0m-132 -170h0m90 300h0m-38 -338h0m186 197h0m-12 53h0m-101 -134h0m33 25h0m0 69h0m-195 -72h0m296 -30h0m-121 4h0m18 221h0m-107 -147h0m-97 -78h0m177 200h0m107 -176h0m-280 52h0m105 -157h0m7 195h0m-59 -182h0m223 211h0m-70 -109h0m-101 4h0m161 103h0m-135 -241h0m158 272h0m-185 -251h0m-75 42h0m3 169h0m98 -138h0m-118 -13h0m192 208h0m39 -27h0m57 -82h0m-45 69h0m-238 -44h0m18 -139h0m89 -44h0m133 45h0m6 -38h0m-105 102h0m167 67h0m-112 -62h0m-39 38h0m-151 -127h0m241 204h0m-224 -225h0m96 161h0m78 10h0m-167 47h0m275 -137h0m-309 -7h0m201 93h0m79 -106h0m-235 191h0m-63 -104h0m105 31h0m-9 -13h0m-40 87h0m79 -63h0m152 56h0m-97 -225h0m48 211h0m89 -163h0m-304 96h0m62 117h0m-46 -24h0m24 -48h0m39 64h0m-99 -206h0m110 113h0m212 7h0m-148 -70h0m37 47h0m-78 10h0m120 -131h0m7 10h0m-3 -50h0m-5 222h0m48 -153h0m-175 -110h0m85 128h0m-78 -128h0m-33 206h0m-105 -22h0m328 -46h0m-33 -4h0m-100 -21h0m-46 194h0m-154 -196h0m-3 2h0m352 117h0m-207 111h0m85 -6h0m77 -218h0m-34 145h0m-73 68h0m108 -214h0m-171 176h0m-136 -150h0m192 174h0m40 16h0m-50 -326h0m-51 109h0m125 142h0m-38 74h0m70 -299h0m-279 81h0m104 211h0m99 -208h0m-22 108h0m20 -224h0m-22 204h0m-77 22h0m192 -97h0m-288 106h0m100 95h0m-70 -119h0m152 -213h0m-2 101h0m-152 173h0m90 -162h0m-65 -16h0m261 57h0m-65 117h0m-134 -234h0m-55 274h0m178 -37h0m-152 58h0m136 -188h0m-229 20h0m327 -48h0m-112 46h0m73 137h0m24 -150h0m-141 41h0m42 20h0m-178 61h0m-39 -79h0m297 -148h0m-298 157h0m222 -175h0m-84 288h0m148 -20h0m-84 48h0m-132 -37h0m-42 -78h0m94 -173h0m-82 155h0m27 89h0m152 -92h0m-88 -42h0m52 156h0m-124 -239h0m229 169h0m-256 30h0m33 -233h0m190 226h0m-147 -48h0m111 -196h0m70 235h0m-104 60h0m7 -218h0m-61 -65h0m63 144h0m-43 23h0m-101 -114h0m-13 0h0m153 -76h0m-138 25h0m83 77h0m149 5h0m16 4h0m-196 10h0m-27 -85h0m21 279h0m16 -27h0m7 -267h0m101 179h0m-32 83h0m9 42h0m-96 -336h0m187 64h0m-259 198h0m101 -43h0m-9 -120h0m175 162h0m-152 -43h0m155 -37h0m-76 29h0m61 45h0m5 6h0m-259 -144h0m254 -47h0m-30 198h0m-46 -85h0m-61 -175h0m164 180h0m-65 -146h0m50 -4h0m12 146h0m-265 -153h0m136 -23h0m32 20h0m112 107h0m-104 -12h0m-22 55h0m-145 80h0m44 -159h0m18 113h0m-48 -175h0m-31 23h0m104 77h0m78 67h0m39 -150h0m-74 52h0m-38 25h0m-96 157h0m153 -74h0m-97 -7h0m197 -30h0m-168 -153h0m-28 279h0m-114 -87h0m135 -105h0m195 -8h0m-198 79h0m-134 28h0m231 85h0m-191 -247h0m236 -10h0m22 -10h0m-7 44h0m-153 270h0m197 -202h0m-38 -98h0m-72 94h0m7 -138h0m-97 296h0m211 -164h0m-284 125h0m72 -40h0m77 113h0m94 -144h0m-109 -35h0m15 188h0m-139 -305h0m149 79h0m-99 53h0m145 99h0m70 -69h0m-211 -54h0m4 -111h0m-95 163h0m206 108h0m60 -11h0m5 -20h0m-258 -15h0m183 50h0m-19 -7h0m-76 43h0m-56 -294h0m147 80h0m-11 205h0m-71 -179h0m-101 68h0m151 -18h0m54 -209h0m-37 168h0m-12 53h0m120 -28h0m-207 16h0m210 -58h0m18 -23h0m-113 181h0m-72 -169h0m-79 -64h0m-2 185h0m234 -124h0m-318 -6h0m38 -24h0m25 155h0m63 -43h0m84 -189h0m-1 -25h0m72 287h0m-89 -91h0m-66 -178h0m-105 116h0m30 -75h0m300 164h0m5 -81h0m-287 157h0m96 16h0m-18 -158h0m-86 -119h0m-13 93h0m189 177h0m-151 -272h0m167 -38h0m-130 327h0m214 -218h0m-116 64h0m-174 29h0m161 -192h0m-88 218h0m42 -95h0m115 159h0m-115 -151h0m-117 -33h0m98 -107h0m132 47h0m-68 95h0m-196 -19h0m105 199h0m95 -31h0m-71 -3h0m93 -143h0m-170 112h0m238 -218h0m-175 165h0m-97 17h0m46 -190h0m66 269h0m109 -234h0m-116 114h0m10 -4h0m7 7h0m-84 -144h0m56 -17h0m194 202h0m-158 -106h0m6 -7h0m182 23h0m-242 139h0m21 -267h0m213 179h0m-65 67h0m-221 -134h0m-33 101h0m181 -98h0m124 57h0m-34 -139h0m-198 28h0m184 191h0m26 7h0m-155 -154h0m183 79h0m8 0h0m-31 93h0m-232 12h0m-58 -83h0m63 41h0m-61 -56h0m249 99h0m-111 11h0m197 -166h0m-233 4h0m229 71h0m-36 63h0m-305 -71h0m118 120h0m229 -207h0m-120 184h0m-77 -18h0m139 -28h0m24 -69h0m-293 -87h0m179 209h0m23 -26h0m-18 -296h0m6 6h0m109 148h0m-154 62h0m-73 -197h0m29 162h0m124 -156h0m-237 106h0m-10 16h0m200 -18h0m-76 6h0m64 194h0m36 -174h0m-80 42h0m154 -145h0m-94 183h0m-51 -223h0m151 275h0m-112 -80h0m-31 113h0m-79 -259h0m59 169h0m-23 -73h0m7 -10h0m191 45h0m-96 -87h0m84 89h0m-157 40h0m-5 -119h0m121 149h0m-80 -123h0m-112 162h0m159 -271h0m-106 189h0m-14 92h0m136 -11h0m-127 27h0m123 -300h0m-171 2h0m162 -23h0m-120 129h0m44 10h0m172 89h0m-325 -81h0m36 56h0m97 -46h0m-140 -20h0m79 -64h0m232 199h0m-175 -166h0m163 -70h0m-22 35h0m-136 231h0m-105 -154h0m176 40h0m95 -137h0m-8 250h0m-279 -160h0m210 61h0m5 -74h0m-224 96h0m313 -112h0m-96 221h0m43 -269h0m-193 190h0m258 -151h0m-293 -49h0m110 255h0m184 -202h0m0 7h0m-255 -66h0m233 93h0m-255 119h0m16 -15h0m14 -194h0m135 175h0m70 -195h0m-62 166h0m-85 29h0m83 -225h0m-27 232h0m-87 -224h0m177 142h0m-81 -3h0m-200 -39h0m112 20h0m111 -111h0m-167 59h0m153 -39h0m-216 166h0m149 -183h0m88 -42h0m-5 138h0m92 -10h0m-99 29h0m-79 -128h0m-100 43h0m92 132h0m-60 -137h0m30 286h0m85 -131h0m103 60h0m-253 -62h0m222 -138h0m-245 88h0m171 -34h0m16 70h0m23 19h0m-154 -154h0m135 -55h0m-28 132h0m-34 186h0m141 -22h0m6 -35h0m-119 -122h0m13 171h0m-42 -267h0m-100 176h0m-9 -82h0m263 18h0m-192 182h0m213 -105h0m-91 -213h0m-109 204h0m33 -59h0m145 -96h0m0 144h0m-23 87h0m59 -74h0m-12 -77h0m-201 -104h0m-99 70h0m-15 34h0m68 -63h0m-46 24h0m314 26h0m-161 -117h0m-56 324h0m30 -14h0m51 -24h0m2 3h0m88 -187h0m-134 -94h0m-89 243h0m28 -220h0m-16 229h0m37 -161h0m-37 171h0m215 -223h0m0 76h0m9 59h0m27 5h0m-210 -97h0m214 86h0m-14 56h0m-291 -121h0m156 205h0m-77 -197h0m183 -84h0m-73 67h0m-31 -3h0m34 9h0m122 7h0m-229 89h0m204 6h0m-173 -190h0m-153 173h0m117 -213h0m75 144h0m-60 -26h0m202 27h0m-298 -104h0m247 261h0m-212 -34h0m234 -203h0m-291 125h0m137 14h0m0 8h0m-116 -84h0m259 -4h0m-104 0h0m-46 -113h0m55 153h0m-129 -112h0m36 135h0m195 103h0m-165 19h0m81 -85h0m85 44h0m-111 -229h0m121 83h0m-202 -98h0m161 273h0m-271 -106h0m255 -119h0m54 12h0m-276 143h0m294 -65h0m-213 44h0m38 -71h0m197 84h0m-116 -78h0m-1 160h0m-21 -2h0m-65 32h0m45 -112h0m-49 -24h0m75 -71h0m-17 -81h0m-86 283h0m49 -187h0m146 54h0m-32 72h0m-161 -262h0m188 133h0m-73 -118h0m-11 321h0m62 -37h0m-203 -25h0m200 -188h0m-206 208h0m109 -282h0m48 307h0m-15 19h0m75 -288h0m56 92h0m-127 -138h0m-218 187h0m110 -37h0m-73 -4h0m302 60h0m-45 -157h0m-183 281h0m-72 -273h0m11 73h0m233 -57h0m-148 227h0m186 -154h0m-205 209h0m-101 -173h0m-6 -43h0m180 172h0m-41 -281h0m116 243h0m-241 -120h0m273 115h0m-108 -241h0m94 13h0m-251 113h0m7 -17h0m192 160h0m-3 -268h0m-17 269h0m7 -181h0m-142 -35h0m-73 119h0m218 -163h0m-165 36h0m141 44h0m-76 104h0m-80 -163h0m252 146h0m-231 107h0m154 28h0m-158 -44h0m153 -7h0m-79 -115h0m10 -131h0m79 -38h0m-141 72h0m230 -23h0m-11 219h0m-1 -229h0m-80 290h0m110 -187h0m9 63h0m-148 -188h0m153 101h0m-291 180h0m2 -6h0m65 33h0m150 -284h0m0 1h0m-21 240h0m-171 -28h0m187 11h0m-249 -75h0m133 20h0m142 86h0m-132 -93h0m-151 10h0m117 -68h0m-111 73h0m115 -38h0m81 -184h0m90 284h0m-182 -101h0m143 81h0m-141 -235h0m-80 179h0m266 -13h0m-113 -74h0m121 73h0m-20 96h0m10 -146h0m-302 64h0m149 -47h0m-89 141h0m293 -178h0m-151 102h0m-48 -98h0m61 159h0m-110 -92h0m41 -76h0m-111 10h0m166 -97h0m-19 171h0m79 103h0m-153 13h0m104 -201h0m65 141h0m28 -79h0m-272 89h0m182 -77h0m-212 -97h0m203 -58h0m-55 293h0m113 -268h0m-252 160h0m139 -98h0m149 102h0m-225 67h0m260 -109h0m-188 136h0m-107 -261h0m114 263h0m-127 -92h0m210 -206h0m-238 177h0m220 142h0m-91 -346h0m142 23h0m73 103h0m-97 21h0m-98 -2h0m-116 0h0m168 157h0m106 -101h0m-3 23h0m-157 -181h0m-86 47h0m280 127h0m-293 -8h0m8 -176h0m184 178h0m-205 -89h0m267 101h0m-146 88h0m-22 -194h0m165 -63h0m-178 140h0m212 28h0m-144 -23h0m-183 -3h0m108 -173h0m76 286h0m-163 -62h0m269 39h0m-83 -131h0m-52 -127h0m-51 111h0m191 -84h0m-88 58h0m81 154h0m17 -189h0m-85 -74h0m-79 14h0m-106 206h0m-38 -21h0m118 99h0m90 -137h0m-7 -126h0m-194 115h0m43 -107h0m80 110h0m1 33h0m-22 30h0m199 17h0m-114 -226h0m-147 292h0m23 -251h0m-23 209h0m151 -38h0m92 -194h0m8 230h0m-104 -112h0m2 -47h0m-160 -33h0m182 75h0m0 -141h0m-198 160h0m57 124h0m134 -60h0m-103 -228h0m90 124h0m-6 99h0m11 -104h0m96 20h0m-187 79h0m-90 64h0m264 -234h0m-173 308h0m15 -303h0m-15 252h0m28 -122h0m154 -52h0m-102 203h0m-162 -129h0m168 87h0m18 -90h0m11 4h0m35 81h0m-156 54h0m-105 -150h0m210 -198h0m-69 234h0m-67 76h0m-34 -231h0m284 46h0m-30 -67h0m42 83h0m-323 100h0m269 -147h0m-280 39h0m204 -12h0m57 191h0m-223 -42h0m154 -256h0m33 24h0m13 273h0m-101 -271h0m-28 287h0m64 -289h0m113 15h0m-69 -6h0m-94 307h0m210 -202h0m-222 75h0m4 -90h0m-87 147h0m187 -155h0m-31 0h0m6 -113h0m-80 -2h0m185 183h0m-176 1h0m-102 43h0m241 53h0m-52 -165h0m-94 95h0m-115 -4h0m205 -30h0m-10 -62h0m-74 -70h0m40 83h0m-145 15h0m259 157h0m-52 -279h0m-30 98h0m33 19h0m-14 -81h0m-198 53h0m104 2h0m212 26h0m-270 155h0m273 -80h0m-127 85h0m-91 -114h0m105 -158h0m69 21h0m-113 78h0m-110 -49h0m216 188h0m45 -151h0m-133 225h0m-31 -148h0m61 -59h0m-212 61h0m286 -69h0m-235 -50h0m232 199h0m-223 6h0m147 -154h0m-193 104h0m93 104h0m-116 -115h0m259 -164h0m-144 40h0m148 202h0m66 -72h0m-253 73h0m62 18h0m157 -36h0m-6 -173h0m-181 200h0m-33 -18h0m66 -302h0m7 340h0m76 -29h0m79 -151h0m1 -3h0m2 -87h0m-263 22h0m259 68h0m-286 -72h0m325 125h0m-294 -70h0m139 -14h0m-167 -4h0m11 91h0m187 32h0m-70 -102h0m10 -6h0m-44 205h0m175 -262h0m54 55h0m-131 -121h0m-184 213h0m265 74h0m21 -58h0m-67 89h0m-211 -192h0m-5 -4h0m155 183h0m117 -86h0m-254 76h0m-40 -125h0m67 101h0m111 73h0m87 -83h0m-157 -231h0m-54 9h0m222 221h0m-92 76h0m-158 -79h0m88 -217h0m67 267h0m34 -189h0m74 68h0m-207 98h0m226 -61h0m-55 -161h0m-32 154h0m-22 -67h0m-83 -118h0m48 108h0m-7 -11h0m161 90h0m-150 -218h0m38 137h0m-64 60h0m-48 138h0m158 -271h0m-73 -64h0m-45 -2h0m183 146h0m-97 -27h0m-15 178h0m62 -255h0m11 34h0m-176 38h0m-57 27h0m45 179h0m198 -114h0m25 -95h0m-215 86h0m183 67h0m-132 -125h0m-115 118h0m265 -103h0m-298 -8h0m139 43h0m-17 146h0m-113 -233h0m270 184h0m-164 49h0m98 -207h0m-114 6h0m169 -61h0m22 113h0m-4 104h0m-121 -162h0m41 -6h0m-181 25h0m278 -39h0m-202 93h0m154 50h0m-226 18h0m220 -207h0m-76 137h0m-189 -61h0m115 -123h0m-82 203h0m293 -37h0m-211 -159h0m-36 24h0m109 85h0m-110 163h0m-33 -113h0m291 12h0m-142 -171h0m31 188h0m-11 89h0m89 -36h0m-110 -138h0m-72 -119h0m-88 52h0m268 201h0m8 -31h0m-276 -122h0m273 92h0m27 -54h0m-125 90h0m130 -79h0m-74 129h0m-284 -163h0m65 169h0m85 8h0m66 -108h0m18 31h0m122 -105h0m-301 23h0m-13 51h0m165 -52h0m-50 166h0m13 21h0m109 -57h0m-102 -127h0m185 58h0m-156 6h0m-42 82h0m163 -21h0m42 -81h0m-140 -150h0m57 264h0m-28 -89h0m-17 -15h0m-4 145h0m3 -336h0m-9 183h0m46 100h0m-108 -66h0m-78 -180h0m156 -9h0m88 117h0m-101 188h0m-188 -235h0m97 234h0m84 -151h0m23 -168h0m-27 289h0m130 -82h0m-202 -43h0m95 152h0m-202 -142h0m-11 -81h0m176 206h0m111 -30h0m2 -193h0m-159 96h0m-103 107h0m69 -275h0m-82 208h0m201 90h0m-34 -169h0m-128 150h0m211 -2h0m-159 -166h0m39 -5h0m74 47h0m53 123h0m-71 -184h0m74 182h0m-8 -255h0m-163 165h0m59 -192h0m-121 241h0m168 77h0m74 -256h0m-167 221h0m16 39h0m180 -232h0m18 13h0m-87 -67h0m-181 18h0m210 -32h0m-133 158h0m135 110h0m-145 -76h0m-71 -152h0m70 221h0m5 -175h0m-75 180h0m233 -224h0m-190 115h0m87 -33h0m-161 -97h0m4 217h0m182 32h0m-82 -285h0m4 189h0m-89 -176h0m77 -4h0m-6 300h0m160 -258h0m-68 42h0m-224 13h0m67 -99h0m280 107h0m-120 84h0m-180 -169h0m257 230h0m-306 -90h0m354 -1h0m-166 25h0m-126 31h0m-47 -27h0m136 0h0m9 112h0m179 -111h0m-225 91h0m-47 -240h0m214 -3h0m-259 23h0m141 -86h0m142 122h0m-222 161h0m113 27h0m104 -281h0m-105 268h0m28 33h0m-151 -296h0m235 -1h0m-90 293h0m88 -59h0m-222 25h0m-39 -40h0m174 37h0m-179 -80h0m119 -2h0m39 116h0m-42 -189h0m6 166h0m41 -10h0m112 -19h0m-44 -10h0m25 -7h0m-87 -231h0m140 85h0m-256 161h0m-54 -5h0m158 -67h0m120 -65h0m-25 166h0m51 -175h0m-48 59h0m-248 -52h0m161 -44h0m87 -54h0m-65 110h0m-81 158h0m-8 -318h0m184 112h0m-178 237h0m72 -305h0m4 263h0m65 -218h0m-25 -50h0m-190 284h0m-19 -197h0m-17 39h0m-15 31h0m180 -192h0m-118 54h0m104 81h0m-140 -55h0m278 76h0m-14 43h0m31 -61h0m-219 4h0m-7 -126h0m215 134h0m-19 -27h0m-161 -100h0m51 174h0m-61 -8h0m140 -145h0m-93 101h0m-38 -110h0m-1 269h0m118 -37h0m-40 41h0m-69 -161h0m-39 51h0m115 120h0m-183 -247h0m187 112h0m-83 -40h0m-58 127h0m-56 -140h0m70 14h0m38 51h0m-117 4h0m13 90h0m61 -267h0m30 158h0m96 -145h0m-229 118h0m177 -103h0m41 -12h0m89 195h0m-197 89h0m237 -106h0m-112 -198h0m-115 326h0m-73 -130h0m147 -12h0m15 137h0m4 -333h0m-18 184h0m13 163h0m36 -32h0m-9 -130h0m-220 49h0m250 -189h0m23 212h0m-159 -147h0m132 160h0m43 -220h0m-83 280h0m80 -65h0m-219 10h0m-35 -134h0m217 144h0m-146 -257h0m9 197h0m172 -32h0m-247 -120h0m4 222h0m181 23h0m61 -52h0m-255 -155h0m150 16h0m-136 176h0m85 -187h0m8 196h0m4 -116h0m-26 -18h0m42 9h0m46 -191h0m85 127h0m-171 64h0m149 68h0m-273 -57h0m180 -4h0m144 45h0m-193 -126h0m48 96h0m4 -28h0m16 -77h0m29 26h0m-6 174h0m-4 -174h0m63 165h0m-140 -266h0m-14 3h0m65 88h0m96 38h0m-64 -148h0m89 178h0m-164 -44h0m-127 79h0m262 -184h0m-255 221h0m121 -125h0m-38 78h0m-69 -166h0m-9 108h0m67 -152h0m196 194h0m-40 57h0m-216 36h0m260 -222h0m-171 115h0m184 -39h0m-276 -77h0m113 273h0m38 -236h0m149 119h0m-129 -234h0m-108 208h0m208 -7h0m-10 87h0m29 -161h0m-195 -79h0m-20 88h0m-14 201h0m44 -110h0m-19 -218h0m150 305h0m-263 -161h0m125 -104h0m6 274h0m59 -129h0m-172 -34h0m132 178h0m-125 -222h0m100 10h0m-25 -110h0m31 209h0m-42 126h0m115 -195h0m-182 -104h0m-26 182h0m138 -40h0m-36 -57h0m-66 -8h0m186 218h0m-202 -118h0m181 -177h0m54 230h0m-151 -251h0m94 -24h0m-7 107h0m-94 3h0m121 222h0m27 -60h0m-173 -219h0m73 172h0m-17 -193h0m40 305h0m8 -179h0m30 -163h0m7 230h0m-11 75h0m11 -165h0m-159 132h0m14 -217h0m203 27h0m-236 215h0m167 -246h0m-3 305h0m-155 -305h0m-18 29h0m278 186h0m-40 -223h0m-14 37h0m60 71h0m-178 76h0m-10 -182h0m-5 146h0m-13 -57h0m20 62h0m-114 -78h0m136 207h0m72 -284h0m-28 152h0m25 -162h0m-154 45h0m-45 -34h0m33 223h0m237 -127h0m-109 -119h0m107 263h0m-94 -91h0m25 -65h0m34 153h0m11 -8h0m-215 -182h0m54 217h0m16 -76h0m-14 105h0m-79 -190h0m46 -85h0m32 147h0m45 134h0m-145 -102h0m187 -9h0m-17 119h0m-169 -191h0m159 62h0m124 75h0m31 -94h0m-282 75h0m66 -264h0m227 128h0m-22 52h0m-178 36h0m-85 -179h0m-31 191h0m17 48h0m163 -249h0m139 195h0m-229 -210h0m103 216h0m91 60h0m-82 -166h0m-179 78h0m258 0h0m-8 54h0m-222 -209h0m54 65h0m185 31h0m-132 -9h0m119 131h0m-72 -149h0m-3 -76h0m-94 14h0m48 119h0m-148 115h0m20 -221h0m88 234h0m201 -98h0m-147 116h0m-110 -271h0m108 105h0m-3 -32h0m-30 -3h0m63 75h0m-93 -193h0m23 319h0m73 -189h0m9 66h0m-33 -6h0m-9 109h0m-48 -114h0m-61 77h0m192 -190h0m48 111h0m-299 -72h0m97 107h0m24 122h0m58 -154h0m99 13h0m-231 -130h0m61 38h0m97 -96h0m96 215h0m-131 -99h0m114 16h0m-91 -36h0m-5 114h0m74 -140h0m-164 256h0m90 -109h0m-72 -199h0m-61 9h0m134 -46h0m89 57h0m-230 214h0m-23 28h0m164 -295h0m-18 18h0m-117 31h0m152 -52h0m75 63h0m-162 130h0m54 28h0m-141 80h0m148 7h0m-13 -143h0m-144 120h0m71 -58h0m-55 -147h0m141 86h0m25 -21h0m121 -19h0m2 7h0m-334 14h0m129 77h0m-142 -83h0m62 122h0m-13 6h0m238 -9h0m-85 90h0m-13 -40h0m29 0h0m78 -95h0m-149 87h0m-30 46h0m183 -225h0m-171 -7h0m-24 -106h0m212 223h0m-319 -72h0m348 54h0m-321 -21h0m111 112h0m128 -26h0m-115 -257h0m-36 295h0m-74 -192h0m-4 87h0m165 -58h0m-60 -115h0m4 72h0m149 9h0m-260 122h0m182 -15h0m121 -87h0m-224 -117h0m-81 180h0m79 140h0m-31 -286h0m-48 55h0m9 188h0m73 -264h0m28 307h0m83 -306h0m-76 -26h0m13 189h0m-153 -46h0m38 -81h0m180 242h0m-41 -282h0m-134 230h0m140 -135h0m-73 -119h0m140 280h0m-121 -168h0m79 54h0m82 27h0m-24 -157h0m-81 282h0m-203 -202h0m51 92h0m51 69h0m132 39h0m-182 -26h0m96 -111h0m167 8h0m-69 -188h0m-236 217h0m219 -43h0m87 -36h0m10 33h0m9 19h0m-186 25h0m-95 -18h0m252 -69h0m-103 13h0m26 -16h0m-37 82h0m-129 -136h0m229 18h0m30 51h0m-122 -23h0m6 -74h0m128 144h0m-206 7h0m205 39h0m-59 -170h0m70 160h0m-263 -191h0m44 101h0m2 3h0m99 49h0m-4 -35h0m85 -34h0m-244 174h0m66 -79h0m-85 79h0m-19 -58h0m262 21h0m-228 -225h0m102 -27h0m73 31h0m-214 77h0m-8 87h0m35 -130h0m304 31h0m-333 42h0m32 -2h0m4 131h0m-43 -73h0m174 -57h0m17 -131h0m-150 267h0m17 -183h0m181 46h0m-97 -117h0m-108 108h0m190 63h0m-154 71h0m134 -152h0m-125 172h0m137 -136h0m49 149h0m-33 -166h0m-122 4h0m33 -115h0m-116 87h0m198 86h0m-114 -73h0m75 82h0m-43 -178h0m50 9h0m-72 255h0m140 -3h0m22 8h0m-252 -15h0m127 -145h0m101 -87h0m73 72h0m-52 178h0m-56 30h0m-78 -202h0m-114 -69h0m100 -23h0m66 78h0m-52 27h0m-36 83h0m188 60h0m-175 52h0m77 -219h0m-130 -94h0m-67 201h0m49 71h0m96 17h0m144 -247h0m-98 53h0m10 33h0m-2 71h0m-93 -83h0m4 44h0m213 -40h0m-211 165h0m93 -191h0m58 148h0m-195 -221h0m115 151h0m-87 -72h0m206 69h0m-43 -130h0m77 149h0m-336 7h0m16 -104h0m-33 26h0m52 124h0m278 -34h0m-180 -1h0m199 -124h0m-331 92h0m56 57h0m94 -109h0m24 178h0m-27 4h0m-118 -197h0m183 173h0m-16 32h0m-5 -105h0m-145 -208h0m72 12h0m-71 229h0m59 52h0m-57 -54h0m-39 -34h0m14 -168h0m90 -18h0m72 -30h0m-147 32h0m294 181h0m-124 -51h0m-187 54h0m237 -172h0m-202 242h0m137 -110h0m-183 -78h0m208 41h0m-149 -102h0m219 77h0m-79 -92h0m-80 258h0m89 -82h0m-160 -168h0m144 258h0m-14 32h0m129 -223h0m-108 110h0m-105 110h0m-46 -34h0m164 -88h0m-216 -102h0m137 -88h0m110 262h0m-145 -144h0m82 47h0m105 -34h0m11 43h0m35 -68h0m-324 -13h0m116 -100h0m165 46h0m-165 244h0m120 -252h0m-135 69h0m-84 -63h0m-61 144h0m31 32h0m208 -15h0m-80 13h0m177 -113h0m-195 32h0m-42 133h0m227 -220h0m-153 260h0m-111 -184h0m-54 76h0m215 15h0m-8 86h0m49 -25h0m-116 -291h0m62 221h0m141 -72h0m-290 137h0m106 -51h0m-38 -208h0m-34 36h0m144 240h0m-70 -168h0m76 -110h0m-188 38h0m163 163h0m137 -99h0m-20 -20h0m-93 109h0m-98 -223h0m-124 220h0m62 101h0m47 27h0m158 -266h0m57 122h0m-118 -198h0m1 304h0m96 -91h0m-109 77h0m-122 -215h0m193 200h0m-137 75h0m85 -226h0m-19 -7h0m-125 -35h0m58 34h0m205 113h0m-40 -169h0m-82 -58h0m-9 37h0m-10 120h0m-143 153h0m278 -84h0m-214 -73h0m76 -147h0m-8 126h0m155 95h0m-267 40h0m-6 41h0m52 -188h0m217 79h0m-6 -80h0m-128 106h0m-15 90h0m-111 -271h0m-63 189h0m295 -166h0m31 165h0m-2 -115h0m-219 18h0m148 133h0m-117 65h0m143 -206h0m-60 14h0m-208 45h0m166 -161h0m-109 29h0m265 89h0m-228 -20h0m109 -93h0m-46 199h0m-168 5h0m274 -147h0m-134 232h0m187 -117h0m-29 -11h0m-296 38h0m185 3h0m-80 -101h0m124 -116h0m-130 8h0m80 120h0m96 -43h0m-274 89h0m137 143h0m-143 -213h0m-7 94h0m56 -126h0m74 222h0m51 -295h0m116 26h0m-185 157h0m224 -61h0m-299 150h0m148 -73h0m102 -3h0m-276 -16h0m-8 -76h0m294 -57h0m-224 13h0m-72 90h0m58 -82h0m7 216h0m234 -231h0m-146 143h0m123 -180h0m-156 -28h0m179 272h0m-152 -40h0m61 -51h0m-4 55h0m-206 -9h0m216 -7h0m150 -89h0m-142 65h0m-174 11h0m28 -177h0m-74 196h0m192 -198h0m-64 -25h0m-90 61h0m111 73h0m69 -16h0m71 -45h0m-174 60h0m-45 156h0m219 -172h0m-143 -99h0m-11 281h0m164 -159h0m-31 126h0m68 -71h0m-152 122h0m8 -8h0m24 -4h0m0 -85h0m-105 104h0m61 -24h0m170 -180h0m-76 -81h0m-66 304h0m64 -304h0m-206 260h0m236 -16h0m-98 -173h0m13 192h0m54 -253h0m-211 214h0m164 -75h0m-24 117h0m150 -186h0m-227 92h0m7 -167h0m-4 96h0m-93 56h0m288 -93h0m-286 -56h0m158 103h0m-38 -13h0m-13 47h0m-63 97h0m38 -156h0m93 -123h0m1 35h0m14 146h0m55 116h0m-130 -177h0m69 176h0m-169 -35h0m-4 -135h0m2 135h0m101 66h0m-37 -304h0m35 -19h0m-5 217h0m-7 -110h0m-65 180h0m63 -143h0m14 -42h0m-14 -110h0m130 68h0m-58 163h0m13 -6h0m-199 -35h0m198 146h0m18 -232h0m82 -5h0" stroke="#ffe566" stroke-width="5.0" stroke-linecap="round" fill="none"/><path d="M2052.7 1460.5 v-4.5 M2052.7 273.0 v4.5 M2109.6 1460.5 v-4.5 M2109.6 273.0 v4.5 M2166.5 1460.5 v-8 M2166.5 273.0 v8 M2223.4 1460.5 v-4.5 M2223.4 273.0 v4.5 M2280.3 1460.5 v-4.5 M2280.3 273.0 v4.5 M2337.2 1460.5 v-8 M2337.2 273.0 v8 M2394.1 1460.5 v-4.5 M2394.1 273.0 v4.5 M2451.0 1460.5 v-4.5 M2451.0 273.0 v4.5 M2507.9 1460.5 v-8 M2507.9 273.0 v8 M2564.8 1460.5 v-4.5 M2564.8 273.0 v4.5 M2621.7 1460.5 v-4.5 M2621.7 273.0 v4.5 M2012.0 1435.0 h8 M2661.5 1435.0 h-8 M2012.0 1406.6 h4.5 M2661.5 1406.6 h-4.5 M2012.0 1378.1 h8 M2661.5 1378.1 h-8 M2012.0 1349.7 h4.5 M2661.5 1349.7 h-4.5 M2012.0 1321.2 h8 M2661.5 1321.2 h-8 M2012.0 1292.8 h4.5 M2661.5 1292.8 h-4.5 M2012.0 1264.3 h8 M2661.5 1264.3 h-8 M2012.0 1235.8 h4.5 M2661.5 1235.8 h-4.5 M2012.0 1207.4 h8 M2661.5 1207.4 h-8 M2012.0 1179.0 h4.5 M2661.5 1179.0 h-4.5 M2012.0 1150.5 h8 M2661.5 1150.5 h-8 M2012.0 1122.0 h4.5 M2661.5 1122.0 h-4.5 M2012.0 1093.6 h8 M2661.5 1093.6 h-8 M2012.0 1065.2 h4.5 M2661.5 1065.2 h-4.5 M2012.0 1036.7 h8 M2661.5 1036.7 h-8 M2012.0 1008.2 h4.5 M2661.5 1008.2 h-4.5 M2012.0 979.8 h8 M2661.5 979.8 h-8 M2012.0 951.4 h4.5 M2661.5 951.4 h-4.5 M2012.0 922.9 h8 M2661.5 922.9 h-8 M2012.0 894.5 h4.5 M2661.5 894.5 h-4.5 M2012.0 866.0 h8 M2661.5 866.0 h-8 M2012.0 837.5 h4.5 M2661.5 837.5 h-4.5 M2012.0 809.1 h8 M2661.5 809.1 h-8 M2012.0 780.6 h4.5 M2661.5 780.6 h-4.5 M2012.0 752.2 h8 M2661.5 752.2 h-8 M2012.0 723.8 h4.5 M2661.5 723.8 h-4.5 M2012.0 695.3 h8 M2661.5 695.3 h-8 M2012.0 666.9 h4.5 M2661.5 666.9 h-4.5 M2012.0 638.4 h8 M2661.5 638.4 h-8 M2012.0 610.0 h4.5 M2661.5 610.0 h-4.5 M2012.0 581.5 h8 M2661.5 581.5 h-8 M2012.0 553.0 h4.5 M2661.5 553.0 h-4.5 M2012.0 524.6 h8 M2661.5 524.6 h-8 M2012.0 496.1 h4.5 M2661.5 496.1 h-4.5 M2012.0 467.7 h8 M2661.5 467.7 h-8 M2012.0 439.2 h4.5 M2661.5 439.2 h-4.5 M2012.0 410.8 h8 M2661.5 410.8 h-8 M2012.0 382.3 h4.5 M2661.5 382.3 h-4.5 M2012.0 353.9 h8 M2661.5 353.9 h-8 M2012.0 325.4 h4.5 M2661.5 325.4 h-4.5 M2012.0 297.0 h8 M2661.5 297.0 h-8" stroke="#d6d6d6" stroke-width="2" fill="none"/><rect x="2012.0" y="273.0" width="649.5" height="1187.5" fill="none" stroke="#d6d6d6" stroke-width="2"/><text x="2006.3" y="302.0" text-anchor="end" font-size="17" fill="#d4d4d4">1</text><text x="2006.3" y="358.9" text-anchor="end" font-size="17" fill="#d4d4d4">0.9</text><text x="2006.3" y="415.8" text-anchor="end" font-size="17" fill="#d4d4d4">0.8</text><text x="2006.3" y="472.7" text-anchor="end" font-size="17" fill="#d4d4d4">0.7</text><text x="2006.3" y="529.6" text-anchor="end" font-size="17" fill="#d4d4d4">0.6</text><text x="2006.3" y="586.5" text-anchor="end" font-size="17" fill="#d4d4d4">0.5</text><text x="2006.3" y="643.4" text-anchor="end" font-size="17" fill="#d4d4d4">0.4</text><text x="2006.3" y="700.3" text-anchor="end" font-size="17" fill="#d4d4d4">0.3</text><text x="2006.3" y="757.2" text-anchor="end" font-size="17" fill="#d4d4d4">0.2</text><text x="2006.3" y="814.1" text-anchor="end" font-size="17" fill="#d4d4d4">0.1</text><text x="2006.3" y="871.0" text-anchor="end" font-size="17" fill="#d4d4d4">0</text><text x="2006.3" y="927.9" text-anchor="end" font-size="17" fill="#d4d4d4">-0.1</text><text x="2006.3" y="984.8" text-anchor="end" font-size="17" fill="#d4d4d4">-0.2</text><text x="2006.3" y="1041.7" text-anchor="end" font-size="17" fill="#d4d4d4">-0.3</text><text x="2006.3" y="1098.6" text-anchor="end" font-size="17" fill="#d4d4d4">-0.4</text><text x="2006.3" y="1155.5" text-anchor="end" font-size="17" fill="#d4d4d4">-0.5</text><text x="2006.3" y="1212.4" text-anchor="end" font-size="17" fill="#d4d4d4">-0.6</text><text x="2006.3" y="1269.3" text-anchor="end" font-size="17" fill="#d4d4d4">-0.7</text><text x="2006.3" y="1326.2" text-anchor="end" font-size="17" fill="#d4d4d4">-0.8</text><text x="2006.3" y="1383.1" text-anchor="end" font-size="17" fill="#d4d4d4">-0.9</text><text x="2006.3" y="1440.0" text-anchor="end" font-size="17" fill="#d4d4d4">-1</text><text x="2165.5" y="1479.2" text-anchor="middle" font-size="17" fill="#d4d4d4">-0.3</text><text x="2337.2" y="1479.2" text-anchor="middle" font-size="17" fill="#d4d4d4">0</text><text x="2507.9" y="1479.2" text-anchor="middle" font-size="17" fill="#d4d4d4">0.3</text><text x="2336" y="1507.3" text-anchor="middle" font-size="19" fill="#d4d4d4">In-phase Amplitude</text><text transform="translate(1962,865.6) rotate(-90)" text-anchor="middle" font-size="19" fill="#d4d4d4">Quadrature Amplitude</text><rect x="2391" y="394.5" width="140.5" height="31.5" fill="#131313" stroke="#e6e6e6" stroke-width="1.5"/><circle cx="2427.8" cy="410.2" r="2.2" fill="#ffe566"/><text x="2450" y="416.2" font-size="17" fill="#e8e8e8" textLength="76" lengthAdjust="spacingAndGlyphs">Channel 1</text></svg>
<svg font-family="Liberation Sans" width="2686" height="300"><circle cx="1903.5" cy="235.0" r="1.6" fill="#3a3a3a"/><circle cx="1903.5" cy="241.5" r="1.6" fill="#3a3a3a"/><circle cx="1903.5" cy="248.0" r="1.6" fill="#3a3a3a"/><circle cx="2656" cy="235.5" r="1.6" fill="#3a3a3a"/><circle cx="2656" cy="242.0" r="1.6" fill="#3a3a3a"/><circle cx="2656" cy="248.5" r="1.6" fill="#3a3a3a"/><rect x="1944" y="236" width="6.4" height="1.3" fill="#9a9a9a"/><rect x="1944" y="239" width="6.4" height="1.3" fill="#9a9a9a"/><rect x="1944" y="242" width="6.4" height="1.3" fill="#9a9a9a"/><rect x="1944" y="245" width="6.4" height="1.3" fill="#9a9a9a"/></svg>
</body></html>
